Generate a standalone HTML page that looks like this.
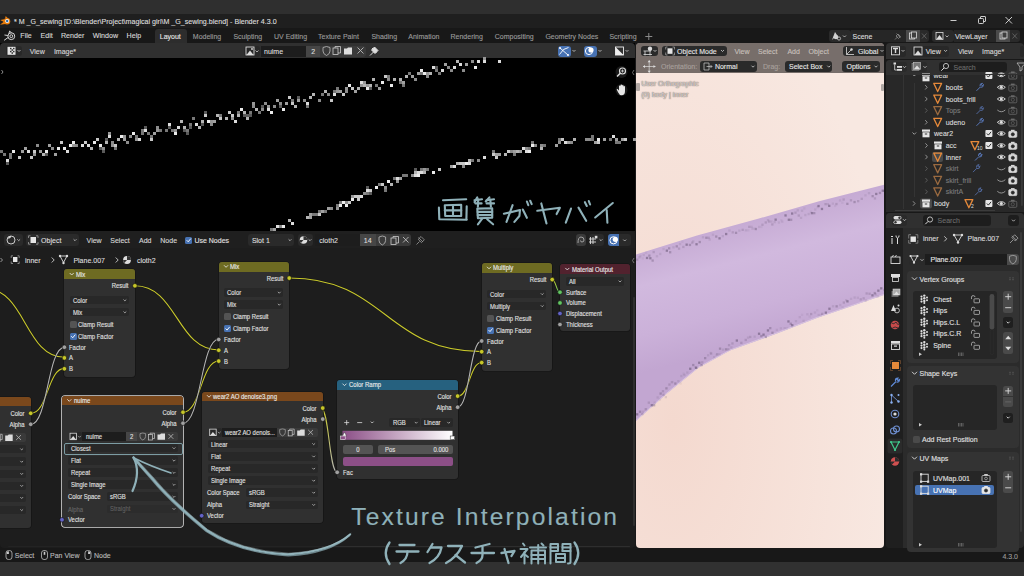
<!DOCTYPE html>
<html><head><meta charset="utf-8"><style>
html,body{margin:0;padding:0;width:1024px;height:576px;overflow:hidden;background:#2b2b2b;}
body{position:relative;font-family:"Liberation Sans", sans-serif;}
div{box-sizing:border-box;-webkit-text-stroke:0.12px currentColor;}
</style></head><body>
<div style="position:absolute;left:0px;top:0px;width:1024px;height:576px;background:#2f2f2f;border-radius:0px;"></div>
<div style="position:absolute;left:0px;top:13.8px;width:1024px;height:14.2px;background:#1f1f1f;border-radius:0px;"></div>
<div style="position:absolute;left:0px;top:28px;width:1024px;height:15px;background:#181818;border-radius:0px;"></div>
<div style="position:absolute;left:0px;top:43px;width:1024px;height:505px;background:#181818;border-radius:0px;"></div>
<div style="position:absolute;left:0px;top:548px;width:1024px;height:14px;background:#181818;border-radius:0px;"></div>
<div style="position:absolute;left:0px;top:562px;width:1024px;height:14px;background:#313131;border-radius:0px;"></div>
<svg style="position:absolute;left:0px;top:0px;overflow:visible" width="1024" height="576" viewBox="0 0 1024 576"><path d="M5.06 18.28 L5.70 16.02 L7.97 18.28 Z" fill="#e87d0d"/><path d="M4.08 19.26 L0.20 19.90 L4.41 22.17 Z" fill="#e87d0d"/><path d="M4.08 21.52 L-0.13 24.76 L5.38 24.12 Z" fill="#e87d0d"/><circle cx="7.0" cy="21.2" r="3.24" fill="#e87d0d"/><circle cx="7.2" cy="21.099999999999998" r="2.01" fill="#ffffff"/><circle cx="7.2" cy="21.099999999999998" r="1.23" fill="#2f6fb0"/></svg>
<div style="position:absolute;left:14px;top:18.69px;font-size:7.1px;line-height:1;color:#dcdcdc;white-space:pre;font-weight:normal;">* M _G_sewing [D:\Blender\Project\magical girl\M _G_sewing.blend] - Blender 4.3.0</div>
<svg style="position:absolute;left:0px;top:0px;overflow:visible" width="1024" height="576" viewBox="0 0 1024 576"><g stroke="#e0e0e0" stroke-width="0.9" fill="none"><path d="M950.5 20.5 H956.5"/><rect x="978.5" y="18.5" width="5" height="5" rx="0.8"/><path d="M980.5 18.5 V17 Q980.5 16.5 981 16.5 H985 Q985.5 16.5 985.5 17 V21 Q985.5 21.5 985 21.5 H983.5"/><path d="M1005.5 17 L1012 23.5 M1012 17 L1005.5 23.5"/></g></svg>
<svg style="position:absolute;left:0px;top:0px;overflow:visible" width="1024" height="576" viewBox="0 0 1024 576"><g fill="none" stroke="#d6d6d6" stroke-width="1.0" stroke-linejoin="round"><circle cx="11.3" cy="36.2" r="3.42"/><circle cx="11.3" cy="36.2" r="1.44"/><path d="M8.91 33.64 L9.59 31.07 L11.64 32.95"/><path d="M8.05 35.52 L4.46 35.00 M8.22 37.40 L4.12 40.30"/></g></svg>
<div style="position:absolute;left:20.3px;top:32.89px;font-size:7.1px;line-height:1;color:#d6d6d6;white-space:pre;font-weight:normal;">File</div>
<div style="position:absolute;left:40.6px;top:32.89px;font-size:7.1px;line-height:1;color:#d6d6d6;white-space:pre;font-weight:normal;">Edit</div>
<div style="position:absolute;left:61px;top:32.89px;font-size:7.1px;line-height:1;color:#d6d6d6;white-space:pre;font-weight:normal;">Render</div>
<div style="position:absolute;left:92.8px;top:32.89px;font-size:7.1px;line-height:1;color:#d6d6d6;white-space:pre;font-weight:normal;">Window</div>
<div style="position:absolute;left:126.6px;top:32.89px;font-size:7.1px;line-height:1;color:#d6d6d6;white-space:pre;font-weight:normal;">Help</div>
<div style="position:absolute;left:155px;top:29px;width:32px;height:14px;background:#2d2d2d;border-radius:3px;border-bottom-left-radius:0;border-bottom-right-radius:0;"></div>
<div style="position:absolute;left:159.8px;top:33.07px;font-size:7.0px;line-height:1;color:#e6e6e6;white-space:pre;font-weight:normal;">Layout</div>
<div style="position:absolute;left:192.8px;top:33.07px;font-size:7.0px;line-height:1;color:#9a9a9a;white-space:pre;font-weight:normal;">Modeling</div>
<div style="position:absolute;left:233.4px;top:33.07px;font-size:7.0px;line-height:1;color:#9a9a9a;white-space:pre;font-weight:normal;">Sculpting</div>
<div style="position:absolute;left:274px;top:33.07px;font-size:7.0px;line-height:1;color:#9a9a9a;white-space:pre;font-weight:normal;">UV Editing</div>
<div style="position:absolute;left:318px;top:33.07px;font-size:7.0px;line-height:1;color:#9a9a9a;white-space:pre;font-weight:normal;">Texture Paint</div>
<div style="position:absolute;left:371.4px;top:33.07px;font-size:7.0px;line-height:1;color:#9a9a9a;white-space:pre;font-weight:normal;">Shading</div>
<div style="position:absolute;left:408.3px;top:33.07px;font-size:7.0px;line-height:1;color:#9a9a9a;white-space:pre;font-weight:normal;">Animation</div>
<div style="position:absolute;left:450.5px;top:33.07px;font-size:7.0px;line-height:1;color:#9a9a9a;white-space:pre;font-weight:normal;">Rendering</div>
<div style="position:absolute;left:494.8px;top:33.07px;font-size:7.0px;line-height:1;color:#9a9a9a;white-space:pre;font-weight:normal;">Compositing</div>
<div style="position:absolute;left:545.4px;top:33.07px;font-size:7.0px;line-height:1;color:#9a9a9a;white-space:pre;font-weight:normal;">Geometry Nodes</div>
<div style="position:absolute;left:609.4px;top:33.07px;font-size:7.0px;line-height:1;color:#9a9a9a;white-space:pre;font-weight:normal;">Scripting</div>
<svg style="position:absolute;left:0px;top:0px;overflow:visible" width="1024" height="576" viewBox="0 0 1024 576"><path d="M648.8 33 V40 M645.3 36.5 H652.3" stroke="#8a8a8a" stroke-width="1"/></svg>
<div style="position:absolute;left:829px;top:30px;width:22px;height:12px;background:#2a2a2a;border-radius:3px;"></div>
<div style="position:absolute;left:851px;top:30px;width:56px;height:12px;background:#262626;border-radius:0px;"></div>
<div style="position:absolute;left:906px;top:30px;width:14px;height:12px;background:#4a4a4a;border-radius:0px;"></div>
<div style="position:absolute;left:920px;top:30px;width:9px;height:12px;background:#2a2a2a;border-radius:3px;border-top-left-radius:0;border-bottom-left-radius:0;"></div>
<svg style="position:absolute;left:0px;top:0px;overflow:visible" width="1024" height="576" viewBox="0 0 1024 576"><g fill="#d0d0d0"><circle cx="836" cy="37" r="2.3"/><path d="M832 40 L835 32 L837 35 Z"/><circle cx="839" cy="38.5" r="1.6" fill="none" stroke="#d0d0d0" stroke-width="0.8"/></g><path d="M843 35.5 l1.5 1.5 l1.5 -1.5" stroke="#ccc" stroke-width="0.8" fill="none"/><path d="M895 39.5 l3 -3 M896.5 33.5 l4 4 M898 34 l-2 2 l2.5 2.5 l2 -2 z" stroke="#8a8a8a" stroke-width="0.8" fill="none"/><rect x="909.5" y="33" width="5" height="6" fill="none" stroke="#ddd" stroke-width="0.8"/><rect x="911.5" y="32" width="5" height="6" fill="#3e3e3e" stroke="#ddd" stroke-width="0.8"/><path d="M922 33.5 l4.5 5 M926.5 33.5 l-4.5 5" stroke="#6a6a6a" stroke-width="0.8"/></svg>
<div style="position:absolute;left:852.5px;top:32.57px;font-size:7.0px;line-height:1;color:#dcdcdc;white-space:pre;font-weight:normal;">Scene</div>
<div style="position:absolute;left:932px;top:30px;width:22px;height:12px;background:#2a2a2a;border-radius:3px;"></div>
<div style="position:absolute;left:954px;top:30px;width:44px;height:12px;background:#262626;border-radius:0px;"></div>
<div style="position:absolute;left:996px;top:30px;width:14px;height:12px;background:#4a4a4a;border-radius:0px;"></div>
<div style="position:absolute;left:1010px;top:30px;width:10px;height:12px;background:#2a2a2a;border-radius:3px;border-top-left-radius:0;border-bottom-left-radius:0;"></div>
<svg style="position:absolute;left:0px;top:0px;overflow:visible" width="1024" height="576" viewBox="0 0 1024 576"><rect x="936" y="32.5" width="7" height="7" fill="none" stroke="#ddd" stroke-width="0.8"/><path d="M936.5 39 L939.5 35 L942.5 39 Z" fill="#ddd"/><path d="M945.5 35.5 l1.5 1.5 l1.5 -1.5" stroke="#ccc" stroke-width="0.8" fill="none"/><rect x="1000" y="33" width="5" height="6" fill="none" stroke="#ddd" stroke-width="0.8"/><rect x="1002" y="32" width="5" height="6" fill="#3e3e3e" stroke="#ddd" stroke-width="0.8"/><path d="M1012.5 33.5 l4.5 5 M1017 33.5 l-4.5 5" stroke="#6a6a6a" stroke-width="0.8"/></svg>
<div style="position:absolute;left:955px;top:32.57px;font-size:7.0px;line-height:1;color:#dcdcdc;white-space:pre;font-weight:normal;">ViewLayer</div>
<svg style="position:absolute;left:0px;top:0px;overflow:visible" width="1024" height="576" viewBox="0 0 1024 576"><rect x="6.0" y="550.5" width="6" height="9" rx="2.5" fill="none" stroke="#bbb" stroke-width="0.8"/><path d="M6.7 554 V552.5 Q6.7 551.2 8.9 551.2 V554 Z" fill="#ccc"/><rect x="41.5" y="550.5" width="6" height="9" rx="2.5" fill="none" stroke="#bbb" stroke-width="0.8"/><rect x="43.7" y="551.8" width="1.6" height="3" fill="#ccc"/><rect x="85.0" y="550.5" width="6" height="9" rx="2.5" fill="none" stroke="#bbb" stroke-width="0.8"/><path d="M90.3 554 V552.5 Q90.3 551.2 88.1 551.2 V554 Z" fill="#ccc"/></svg>
<div style="position:absolute;left:14.8px;top:552.27px;font-size:7.0px;line-height:1;color:#b8b8b8;white-space:pre;font-weight:normal;">Select</div>
<div style="position:absolute;left:50px;top:552.27px;font-size:7.0px;line-height:1;color:#b8b8b8;white-space:pre;font-weight:normal;">Pan View</div>
<div style="position:absolute;left:94px;top:552.27px;font-size:7.0px;line-height:1;color:#b8b8b8;white-space:pre;font-weight:normal;">Node</div>
<div style="position:absolute;right:6px;top:552.57px;font-size:7.0px;line-height:1;color:#9a9a9a;white-space:pre;font-weight:normal;text-align:right;">4.3.0</div>
<div style="position:absolute;left:0px;top:43px;width:635px;height:188px;background:#000000;border-radius:0px;"></div>
<div style="position:absolute;left:0px;top:43px;width:635px;height:15px;background:#303030;border-radius:4px;border-bottom-left-radius:0;border-bottom-right-radius:0;"></div>
<div style="position:absolute;left:6px;top:46px;width:16px;height:9.5px;background:#282828;border-radius:3px;"></div>
<svg style="position:absolute;left:0px;top:0px;overflow:visible" width="1024" height="576" viewBox="0 0 1024 576"><rect x="7.5" y="46.8" width="8" height="8" fill="#e6e6e6"/><g fill="#303030"><rect x="10" y="47.8" width="1.5" height="1.5"/><rect x="13" y="47.8" width="1.5" height="1.5"/><rect x="11.5" y="49.3" width="1.5" height="1.5"/><rect x="10" y="50.8" width="1.5" height="1.5"/><rect x="13" y="50.8" width="1.5" height="1.5"/><rect x="11.5" y="52.3" width="1.5" height="1.5"/></g><path d="M17.5 50 l1.5 1.5 l1.5 -1.5" stroke="#ccc" stroke-width="0.8" fill="none"/></svg>
<div style="position:absolute;left:29.7px;top:48.07px;font-size:7.0px;line-height:1;color:#d6d6d6;white-space:pre;font-weight:normal;">View</div>
<div style="position:absolute;left:53.9px;top:48.07px;font-size:7.0px;line-height:1;color:#d6d6d6;white-space:pre;font-weight:normal;">Image*</div>
<div style="position:absolute;left:244px;top:45.5px;width:16px;height:11px;background:#282828;border-radius:3px;"></div>
<svg style="position:absolute;left:0px;top:0px;overflow:visible" width="1024" height="576" viewBox="0 0 1024 576"><rect x="246" y="47" width="8" height="8" fill="none" stroke="#ddd" stroke-width="0.9"/><path d="M246.5 55 L250 50.5 L253.5 55 Z" fill="#ddd"/><circle cx="252" cy="49" r="0.9" fill="#ddd"/><path d="M255.5 50.5 l1.5 1.5 l1.5 -1.5" stroke="#ccc" stroke-width="0.8" fill="none"/></svg>
<div style="position:absolute;left:260.5px;top:45.5px;width:45.5px;height:11px;background:#1d1d1d;border-radius:0px;"></div>
<div style="position:absolute;left:264px;top:48.07px;font-size:7.0px;line-height:1;color:#dcdcdc;white-space:pre;font-weight:normal;">nuime</div>
<div style="position:absolute;left:306px;top:45.5px;width:14.4px;height:11px;background:#464646;border-radius:0px;"></div>
<div style="position:absolute;left:311.2px;top:48.07px;font-size:7.0px;line-height:1;color:#dcdcdc;white-space:pre;font-weight:normal;">2</div>
<div style="position:absolute;left:320.4px;top:45.5px;width:45.3px;height:11px;background:#3a3a3a;border-radius:3px;border-top-left-radius:0;border-bottom-left-radius:0;"></div>
<svg style="position:absolute;left:0px;top:0px;overflow:visible" width="1024" height="576" viewBox="0 0 1024 576"><path d="M323 47.5 L326.5 46.5 L330 47.5 V51 Q330 54 326.5 55.5 Q323 54 323 51 Z" fill="none" stroke="#bbb" stroke-width="0.8"/><rect x="333" y="48" width="5" height="6.5" fill="none" stroke="#ccc" stroke-width="0.8"/><path d="M335 48 V46.5 H340.5 V53 H338" fill="none" stroke="#ccc" stroke-width="0.8"/><path d="M344 48.5 H347 L348 47.5 H352 V54.5 H344 Z" fill="#ddd"/><path d="M357.5 47.5 l6 6 M363.5 47.5 l-6 6" stroke="#bbb" stroke-width="0.9"/><path d="M370 55.5 l3.5 -3.5 M372 48 l4.5 4.5 M374.5 47 l-3 3 l3.5 3.5 l3 -3 z" stroke="#ddd" stroke-width="1" fill="#ddd"/></svg>
<div style="position:absolute;left:557.5px;top:45.5px;width:13px;height:11px;background:#4772b3;border-radius:3px;"></div>
<svg style="position:absolute;left:0px;top:0px;overflow:visible" width="1024" height="576" viewBox="0 0 1024 576"><path d="M559.5 54.5 Q563 48 568.5 47.5 M560 48 L568 55" stroke="#fff" stroke-width="0.9" fill="none"/><circle cx="560" cy="48" r="1" fill="#fff"/><circle cx="568" cy="55" r="1" fill="#fff"/><path d="M572.5 50 l1.5 1.5 l1.5 -1.5" stroke="#ccc" stroke-width="0.8" fill="none"/></svg>
<div style="position:absolute;left:583.5px;top:45.5px;width:13px;height:11px;background:#4772b3;border-radius:3px;"></div>
<svg style="position:absolute;left:0px;top:0px;overflow:visible" width="1024" height="576" viewBox="0 0 1024 576"><circle cx="589" cy="51" r="3.6" fill="none" stroke="#fff" stroke-width="1"/><circle cx="591" cy="50" r="2.6" fill="#fff"/><path d="M598.5 50 l1.5 1.5 l1.5 -1.5" stroke="#ccc" stroke-width="0.8" fill="none"/></svg>
<svg style="position:absolute;left:0px;top:0px;overflow:visible" width="1024" height="576" viewBox="0 0 1024 576"><rect x="615.5" y="47" width="8" height="8" fill="none" stroke="#eee" stroke-width="0.9"/><path d="M615.5 47 L623.5 55 H615.5 Z" fill="#eee"/><path d="M625.5 50 l1.5 1.5 l1.5 -1.5" stroke="#ccc" stroke-width="0.8" fill="none"/></svg>
<svg style="position:absolute;left:0px;top:0px;overflow:visible" width="1024" height="576" viewBox="0 0 1024 576"><rect x="0" y="150" width="3" height="3" fill="rgb(120,120,120)"/><rect x="3" y="153" width="3" height="3" fill="rgb(120,120,120)"/><rect x="6" y="159" width="3" height="3" fill="rgb(220,220,220)"/><rect x="6" y="162" width="3" height="3" fill="rgb(90,90,90)"/><rect x="9" y="153" width="3" height="3" fill="rgb(120,120,120)"/><rect x="9" y="156" width="3" height="3" fill="rgb(120,120,120)"/><rect x="12" y="150" width="3" height="3" fill="rgb(235,235,235)"/><rect x="18" y="156" width="3" height="3" fill="rgb(200,200,200)"/><rect x="21" y="150" width="3" height="3" fill="rgb(160,160,160)"/><rect x="24" y="147" width="3" height="3" fill="rgb(160,160,160)"/><rect x="27" y="150" width="3" height="3" fill="rgb(220,220,220)"/><rect x="30" y="156" width="3" height="3" fill="rgb(200,200,200)"/><rect x="33" y="150" width="3" height="3" fill="rgb(200,200,200)"/><rect x="33" y="153" width="3" height="3" fill="rgb(150,150,150)"/><rect x="36" y="144" width="3" height="3" fill="rgb(140,140,140)"/><rect x="39" y="150" width="3" height="3" fill="rgb(160,160,160)"/><rect x="42" y="153" width="3" height="3" fill="rgb(180,180,180)"/><rect x="45" y="150" width="3" height="3" fill="rgb(235,235,235)"/><rect x="45" y="153" width="3" height="3" fill="rgb(90,90,90)"/><rect x="48" y="144" width="3" height="3" fill="rgb(160,160,160)"/><rect x="51" y="147" width="3" height="3" fill="rgb(140,140,140)"/><rect x="54" y="153" width="3" height="3" fill="rgb(160,160,160)"/><rect x="57" y="147" width="3" height="3" fill="rgb(235,235,235)"/><rect x="60" y="141" width="3" height="3" fill="rgb(200,200,200)"/><rect x="63" y="147" width="3" height="3" fill="rgb(235,235,235)"/><rect x="66" y="150" width="3" height="3" fill="rgb(220,220,220)"/><rect x="69" y="144" width="3" height="3" fill="rgb(235,235,235)"/><rect x="72" y="141" width="3" height="3" fill="rgb(235,235,235)"/><rect x="72" y="144" width="3" height="3" fill="rgb(150,150,150)"/><rect x="75" y="144" width="3" height="3" fill="rgb(140,140,140)"/><rect x="81" y="144" width="3" height="3" fill="rgb(220,220,220)"/><rect x="84" y="141" width="3" height="3" fill="rgb(200,200,200)"/><rect x="87" y="144" width="3" height="3" fill="rgb(220,220,220)"/><rect x="90" y="147" width="3" height="3" fill="rgb(180,180,180)"/><rect x="93" y="141" width="3" height="3" fill="rgb(235,235,235)"/><rect x="96" y="138" width="3" height="3" fill="rgb(200,200,200)"/><rect x="99" y="144" width="3" height="3" fill="rgb(235,235,235)"/><rect x="99" y="147" width="3" height="3" fill="rgb(90,90,90)"/><rect x="102" y="147" width="3" height="3" fill="rgb(140,140,140)"/><rect x="102" y="150" width="3" height="3" fill="rgb(90,90,90)"/><rect x="105" y="141" width="3" height="3" fill="rgb(180,180,180)"/><rect x="105" y="138" width="3" height="3" fill="rgb(90,90,90)"/><rect x="108" y="135" width="3" height="3" fill="rgb(220,220,220)"/><rect x="108" y="132" width="3" height="3" fill="rgb(150,150,150)"/><rect x="111" y="141" width="3" height="3" fill="rgb(140,140,140)"/><rect x="111" y="144" width="3" height="3" fill="rgb(150,150,150)"/><rect x="114" y="144" width="3" height="3" fill="rgb(200,200,200)"/><rect x="114" y="147" width="3" height="3" fill="rgb(120,120,120)"/><rect x="117" y="138" width="3" height="3" fill="rgb(180,180,180)"/><rect x="120" y="135" width="3" height="3" fill="rgb(235,235,235)"/><rect x="123" y="138" width="3" height="3" fill="rgb(160,160,160)"/><rect x="123" y="135" width="3" height="3" fill="rgb(150,150,150)"/><rect x="126" y="141" width="3" height="3" fill="rgb(140,140,140)"/><rect x="129" y="135" width="3" height="3" fill="rgb(140,140,140)"/><rect x="132" y="132" width="3" height="3" fill="rgb(235,235,235)"/><rect x="135" y="135" width="3" height="3" fill="rgb(120,120,120)"/><rect x="135" y="138" width="3" height="3" fill="rgb(150,150,150)"/><rect x="138" y="138" width="3" height="3" fill="rgb(220,220,220)"/><rect x="141" y="132" width="3" height="3" fill="rgb(120,120,120)"/><rect x="141" y="129" width="3" height="3" fill="rgb(120,120,120)"/><rect x="144" y="129" width="3" height="3" fill="rgb(220,220,220)"/><rect x="144" y="126" width="3" height="3" fill="rgb(90,90,90)"/><rect x="147" y="132" width="3" height="3" fill="rgb(120,120,120)"/><rect x="150" y="138" width="3" height="3" fill="rgb(200,200,200)"/><rect x="150" y="135" width="3" height="3" fill="rgb(120,120,120)"/><rect x="153" y="132" width="3" height="3" fill="rgb(160,160,160)"/><rect x="156" y="126" width="3" height="3" fill="rgb(140,140,140)"/><rect x="156" y="129" width="3" height="3" fill="rgb(150,150,150)"/><rect x="159" y="129" width="3" height="3" fill="rgb(120,120,120)"/><rect x="165" y="129" width="3" height="3" fill="rgb(120,120,120)"/><rect x="168" y="123" width="3" height="3" fill="rgb(220,220,220)"/><rect x="168" y="126" width="3" height="3" fill="rgb(90,90,90)"/><rect x="171" y="129" width="3" height="3" fill="rgb(120,120,120)"/><rect x="174" y="132" width="3" height="3" fill="rgb(235,235,235)"/><rect x="174" y="129" width="3" height="3" fill="rgb(150,150,150)"/><rect x="177" y="126" width="3" height="3" fill="rgb(220,220,220)"/><rect x="180" y="120" width="3" height="3" fill="rgb(180,180,180)"/><rect x="183" y="126" width="3" height="3" fill="rgb(180,180,180)"/><rect x="183" y="129" width="3" height="3" fill="rgb(90,90,90)"/><rect x="186" y="129" width="3" height="3" fill="rgb(120,120,120)"/><rect x="186" y="132" width="3" height="3" fill="rgb(90,90,90)"/><rect x="189" y="123" width="3" height="3" fill="rgb(120,120,120)"/><rect x="189" y="126" width="3" height="3" fill="rgb(90,90,90)"/><rect x="192" y="117" width="3" height="3" fill="rgb(120,120,120)"/><rect x="195" y="123" width="3" height="3" fill="rgb(220,220,220)"/><rect x="198" y="126" width="3" height="3" fill="rgb(180,180,180)"/><rect x="201" y="120" width="3" height="3" fill="rgb(180,180,180)"/><rect x="201" y="123" width="3" height="3" fill="rgb(90,90,90)"/><rect x="204" y="114" width="3" height="3" fill="rgb(200,200,200)"/><rect x="204" y="111" width="3" height="3" fill="rgb(90,90,90)"/><rect x="207" y="120" width="3" height="3" fill="rgb(235,235,235)"/><rect x="210" y="123" width="3" height="3" fill="rgb(140,140,140)"/><rect x="210" y="120" width="3" height="3" fill="rgb(150,150,150)"/><rect x="213" y="120" width="3" height="3" fill="rgb(160,160,160)"/><rect x="216" y="114" width="3" height="3" fill="rgb(180,180,180)"/><rect x="219" y="117" width="3" height="3" fill="rgb(200,200,200)"/><rect x="219" y="114" width="3" height="3" fill="rgb(120,120,120)"/><rect x="225" y="117" width="3" height="3" fill="rgb(180,180,180)"/><rect x="228" y="111" width="3" height="3" fill="rgb(200,200,200)"/><rect x="231" y="114" width="3" height="3" fill="rgb(200,200,200)"/><rect x="231" y="117" width="3" height="3" fill="rgb(150,150,150)"/><rect x="234" y="120" width="3" height="3" fill="rgb(220,220,220)"/><rect x="237" y="114" width="3" height="3" fill="rgb(180,180,180)"/><rect x="237" y="111" width="3" height="3" fill="rgb(120,120,120)"/><rect x="240" y="108" width="3" height="3" fill="rgb(235,235,235)"/><rect x="243" y="111" width="3" height="3" fill="rgb(180,180,180)"/><rect x="243" y="114" width="3" height="3" fill="rgb(90,90,90)"/><rect x="246" y="117" width="3" height="3" fill="rgb(180,180,180)"/><rect x="246" y="114" width="3" height="3" fill="rgb(90,90,90)"/><rect x="249" y="111" width="3" height="3" fill="rgb(120,120,120)"/><rect x="249" y="114" width="3" height="3" fill="rgb(90,90,90)"/><rect x="252" y="105" width="3" height="3" fill="rgb(140,140,140)"/><rect x="252" y="102" width="3" height="3" fill="rgb(150,150,150)"/><rect x="255" y="108" width="3" height="3" fill="rgb(180,180,180)"/><rect x="258" y="111" width="3" height="3" fill="rgb(120,120,120)"/><rect x="261" y="108" width="3" height="3" fill="rgb(140,140,140)"/><rect x="261" y="105" width="3" height="3" fill="rgb(90,90,90)"/><rect x="264" y="102" width="3" height="3" fill="rgb(140,140,140)"/><rect x="267" y="108" width="3" height="3" fill="rgb(220,220,220)"/><rect x="267" y="105" width="3" height="3" fill="rgb(150,150,150)"/><rect x="270" y="111" width="3" height="3" fill="rgb(235,235,235)"/><rect x="273" y="105" width="3" height="3" fill="rgb(140,140,140)"/><rect x="276" y="99" width="3" height="3" fill="rgb(160,160,160)"/><rect x="279" y="102" width="3" height="3" fill="rgb(140,140,140)"/><rect x="279" y="105" width="3" height="3" fill="rgb(90,90,90)"/><rect x="282" y="108" width="3" height="3" fill="rgb(235,235,235)"/><rect x="285" y="102" width="3" height="3" fill="rgb(160,160,160)"/><rect x="288" y="96" width="3" height="3" fill="rgb(200,200,200)"/><rect x="291" y="102" width="3" height="3" fill="rgb(200,200,200)"/><rect x="291" y="99" width="3" height="3" fill="rgb(120,120,120)"/><rect x="294" y="105" width="3" height="3" fill="rgb(180,180,180)"/><rect x="297" y="99" width="3" height="3" fill="rgb(160,160,160)"/><rect x="297" y="96" width="3" height="3" fill="rgb(90,90,90)"/><rect x="303" y="99" width="3" height="3" fill="rgb(140,140,140)"/><rect x="306" y="102" width="3" height="3" fill="rgb(220,220,220)"/><rect x="306" y="105" width="3" height="3" fill="rgb(120,120,120)"/><rect x="309" y="96" width="3" height="3" fill="rgb(180,180,180)"/><rect x="312" y="93" width="3" height="3" fill="rgb(180,180,180)"/><rect x="318" y="99" width="3" height="3" fill="rgb(140,140,140)"/><rect x="321" y="93" width="3" height="3" fill="rgb(120,120,120)"/><rect x="324" y="90" width="3" height="3" fill="rgb(180,180,180)"/><rect x="327" y="93" width="3" height="3" fill="rgb(140,140,140)"/><rect x="330" y="99" width="3" height="3" fill="rgb(200,200,200)"/><rect x="333" y="93" width="3" height="3" fill="rgb(220,220,220)"/><rect x="333" y="90" width="3" height="3" fill="rgb(120,120,120)"/><rect x="336" y="87" width="3" height="3" fill="rgb(120,120,120)"/><rect x="336" y="90" width="3" height="3" fill="rgb(150,150,150)"/><rect x="339" y="90" width="3" height="3" fill="rgb(160,160,160)"/><rect x="342" y="93" width="3" height="3" fill="rgb(200,200,200)"/><rect x="345" y="90" width="3" height="3" fill="rgb(140,140,140)"/><rect x="345" y="87" width="3" height="3" fill="rgb(150,150,150)"/><rect x="348" y="84" width="3" height="3" fill="rgb(235,235,235)"/><rect x="351" y="87" width="3" height="3" fill="rgb(200,200,200)"/><rect x="354" y="90" width="3" height="3" fill="rgb(160,160,160)"/><rect x="357" y="87" width="3" height="3" fill="rgb(180,180,180)"/><rect x="360" y="81" width="3" height="3" fill="rgb(220,220,220)"/><rect x="360" y="84" width="3" height="3" fill="rgb(150,150,150)"/><rect x="363" y="84" width="3" height="3" fill="rgb(180,180,180)"/><rect x="363" y="81" width="3" height="3" fill="rgb(150,150,150)"/><rect x="366" y="87" width="3" height="3" fill="rgb(235,235,235)"/><rect x="366" y="84" width="3" height="3" fill="rgb(150,150,150)"/><rect x="369" y="84" width="3" height="3" fill="rgb(180,180,180)"/><rect x="369" y="87" width="3" height="3" fill="rgb(90,90,90)"/><rect x="372" y="78" width="3" height="3" fill="rgb(180,180,180)"/><rect x="375" y="84" width="3" height="3" fill="rgb(120,120,120)"/><rect x="378" y="87" width="3" height="3" fill="rgb(160,160,160)"/><rect x="381" y="81" width="3" height="3" fill="rgb(235,235,235)"/><rect x="384" y="75" width="3" height="3" fill="rgb(200,200,200)"/><rect x="387" y="78" width="3" height="3" fill="rgb(140,140,140)"/><rect x="387" y="75" width="3" height="3" fill="rgb(120,120,120)"/><rect x="390" y="84" width="3" height="3" fill="rgb(235,235,235)"/><rect x="393" y="78" width="3" height="3" fill="rgb(180,180,180)"/><rect x="399" y="78" width="3" height="3" fill="rgb(180,180,180)"/><rect x="399" y="81" width="3" height="3" fill="rgb(120,120,120)"/><rect x="402" y="81" width="3" height="3" fill="rgb(160,160,160)"/><rect x="402" y="84" width="3" height="3" fill="rgb(120,120,120)"/><rect x="405" y="75" width="3" height="3" fill="rgb(180,180,180)"/><rect x="408" y="72" width="3" height="3" fill="rgb(120,120,120)"/><rect x="411" y="75" width="3" height="3" fill="rgb(160,160,160)"/><rect x="414" y="78" width="3" height="3" fill="rgb(140,140,140)"/><rect x="417" y="72" width="3" height="3" fill="rgb(160,160,160)"/><rect x="420" y="69" width="3" height="3" fill="rgb(235,235,235)"/><rect x="420" y="72" width="3" height="3" fill="rgb(120,120,120)"/><rect x="423" y="72" width="3" height="3" fill="rgb(235,235,235)"/><rect x="426" y="75" width="3" height="3" fill="rgb(140,140,140)"/><rect x="426" y="72" width="3" height="3" fill="rgb(150,150,150)"/><rect x="429" y="72" width="3" height="3" fill="rgb(180,180,180)"/><rect x="432" y="66" width="3" height="3" fill="rgb(220,220,220)"/><rect x="435" y="69" width="3" height="3" fill="rgb(120,120,120)"/><rect x="435" y="66" width="3" height="3" fill="rgb(90,90,90)"/><rect x="438" y="72" width="3" height="3" fill="rgb(120,120,120)"/><rect x="441" y="69" width="3" height="3" fill="rgb(220,220,220)"/><rect x="444" y="63" width="3" height="3" fill="rgb(160,160,160)"/><rect x="447" y="66" width="3" height="3" fill="rgb(140,140,140)"/><rect x="450" y="69" width="3" height="3" fill="rgb(140,140,140)"/><rect x="453" y="66" width="3" height="3" fill="rgb(220,220,220)"/><rect x="456" y="60" width="3" height="3" fill="rgb(180,180,180)"/><rect x="459" y="63" width="3" height="3" fill="rgb(220,220,220)"/><rect x="462" y="69" width="3" height="3" fill="rgb(140,140,140)"/><rect x="465" y="63" width="3" height="3" fill="rgb(160,160,160)"/><rect x="471" y="60" width="3" height="3" fill="rgb(140,140,140)"/><rect x="474" y="66" width="3" height="3" fill="rgb(235,235,235)"/><rect x="477" y="60" width="3" height="3" fill="rgb(220,220,220)"/><rect x="483" y="60" width="3" height="3" fill="rgb(220,220,220)"/><rect x="483" y="57" width="3" height="3" fill="rgb(150,150,150)"/><rect x="498" y="60" width="3" height="3" fill="rgb(220,220,220)"/><rect x="270" y="228" width="3" height="3" fill="rgb(120,120,120)"/><rect x="276" y="225" width="3" height="3" fill="rgb(220,220,220)"/><rect x="279" y="225" width="3" height="3" fill="rgb(140,140,140)"/><rect x="282" y="225" width="3" height="3" fill="rgb(235,235,235)"/><rect x="288" y="219" width="3" height="3" fill="rgb(180,180,180)"/><rect x="291" y="222" width="3" height="3" fill="rgb(160,160,160)"/><rect x="306" y="216" width="3" height="3" fill="rgb(235,235,235)"/><rect x="309" y="213" width="3" height="3" fill="rgb(160,160,160)"/><rect x="312" y="213" width="3" height="3" fill="rgb(120,120,120)"/><rect x="315" y="213" width="3" height="3" fill="rgb(120,120,120)"/><rect x="318" y="213" width="3" height="3" fill="rgb(160,160,160)"/><rect x="321" y="210" width="3" height="3" fill="rgb(220,220,220)"/><rect x="324" y="210" width="3" height="3" fill="rgb(120,120,120)"/><rect x="327" y="207" width="3" height="3" fill="rgb(160,160,160)"/><rect x="330" y="207" width="3" height="3" fill="rgb(140,140,140)"/><rect x="336" y="204" width="3" height="3" fill="rgb(120,120,120)"/><rect x="336" y="207" width="3" height="3" fill="rgb(150,150,150)"/><rect x="339" y="201" width="3" height="3" fill="rgb(120,120,120)"/><rect x="342" y="201" width="3" height="3" fill="rgb(235,235,235)"/><rect x="345" y="201" width="3" height="3" fill="rgb(140,140,140)"/><rect x="345" y="204" width="3" height="3" fill="rgb(150,150,150)"/><rect x="348" y="201" width="3" height="3" fill="rgb(200,200,200)"/><rect x="351" y="198" width="3" height="3" fill="rgb(120,120,120)"/><rect x="351" y="195" width="3" height="3" fill="rgb(150,150,150)"/><rect x="354" y="195" width="3" height="3" fill="rgb(200,200,200)"/><rect x="357" y="195" width="3" height="3" fill="rgb(200,200,200)"/><rect x="360" y="195" width="3" height="3" fill="rgb(220,220,220)"/><rect x="363" y="192" width="3" height="3" fill="rgb(140,140,140)"/><rect x="366" y="189" width="3" height="3" fill="rgb(220,220,220)"/><rect x="366" y="186" width="3" height="3" fill="rgb(90,90,90)"/><rect x="369" y="189" width="3" height="3" fill="rgb(200,200,200)"/><rect x="369" y="192" width="3" height="3" fill="rgb(90,90,90)"/><rect x="375" y="186" width="3" height="3" fill="rgb(235,235,235)"/><rect x="378" y="183" width="3" height="3" fill="rgb(120,120,120)"/><rect x="381" y="183" width="3" height="3" fill="rgb(200,200,200)"/><rect x="384" y="186" width="3" height="3" fill="rgb(140,140,140)"/><rect x="384" y="189" width="3" height="3" fill="rgb(120,120,120)"/><rect x="387" y="180" width="3" height="3" fill="rgb(235,235,235)"/><rect x="393" y="177" width="3" height="3" fill="rgb(120,120,120)"/><rect x="396" y="177" width="3" height="3" fill="rgb(220,220,220)"/><rect x="396" y="180" width="3" height="3" fill="rgb(150,150,150)"/><rect x="402" y="174" width="3" height="3" fill="rgb(120,120,120)"/><rect x="405" y="174" width="3" height="3" fill="rgb(120,120,120)"/><rect x="411" y="174" width="3" height="3" fill="rgb(140,140,140)"/><rect x="414" y="171" width="3" height="3" fill="rgb(180,180,180)"/><rect x="414" y="168" width="3" height="3" fill="rgb(90,90,90)"/><rect x="417" y="171" width="3" height="3" fill="rgb(220,220,220)"/><rect x="420" y="171" width="3" height="3" fill="rgb(220,220,220)"/><rect x="420" y="168" width="3" height="3" fill="rgb(120,120,120)"/><rect x="426" y="168" width="3" height="3" fill="rgb(120,120,120)"/><rect x="438" y="168" width="3" height="3" fill="rgb(200,200,200)"/><rect x="450" y="165" width="3" height="3" fill="rgb(160,160,160)"/><rect x="453" y="165" width="3" height="3" fill="rgb(220,220,220)"/><rect x="456" y="162" width="3" height="3" fill="rgb(160,160,160)"/><rect x="459" y="162" width="3" height="3" fill="rgb(200,200,200)"/><rect x="462" y="162" width="3" height="3" fill="rgb(200,200,200)"/><rect x="465" y="162" width="3" height="3" fill="rgb(235,235,235)"/><rect x="468" y="159" width="3" height="3" fill="rgb(180,180,180)"/><rect x="471" y="159" width="3" height="3" fill="rgb(120,120,120)"/><rect x="477" y="159" width="3" height="3" fill="rgb(140,140,140)"/><rect x="483" y="156" width="3" height="3" fill="rgb(220,220,220)"/><rect x="492" y="153" width="3" height="3" fill="rgb(200,200,200)"/><rect x="492" y="150" width="3" height="3" fill="rgb(120,120,120)"/><rect x="495" y="153" width="3" height="3" fill="rgb(160,160,160)"/><rect x="498" y="153" width="3" height="3" fill="rgb(160,160,160)"/><rect x="504" y="153" width="3" height="3" fill="rgb(180,180,180)"/><rect x="507" y="150" width="3" height="3" fill="rgb(200,200,200)"/><rect x="510" y="150" width="3" height="3" fill="rgb(140,140,140)"/><rect x="513" y="150" width="3" height="3" fill="rgb(160,160,160)"/><rect x="513" y="153" width="3" height="3" fill="rgb(120,120,120)"/><rect x="516" y="150" width="3" height="3" fill="rgb(160,160,160)"/><rect x="519" y="150" width="3" height="3" fill="rgb(160,160,160)"/><rect x="522" y="147" width="3" height="3" fill="rgb(220,220,220)"/><rect x="525" y="147" width="3" height="3" fill="rgb(140,140,140)"/><rect x="528" y="147" width="3" height="3" fill="rgb(120,120,120)"/><rect x="531" y="144" width="3" height="3" fill="rgb(235,235,235)"/><rect x="531" y="141" width="3" height="3" fill="rgb(120,120,120)"/><rect x="534" y="144" width="3" height="3" fill="rgb(140,140,140)"/><rect x="540" y="144" width="3" height="3" fill="rgb(140,140,140)"/><rect x="543" y="144" width="3" height="3" fill="rgb(220,220,220)"/><rect x="558" y="141" width="3" height="3" fill="rgb(140,140,140)"/><rect x="558" y="138" width="3" height="3" fill="rgb(120,120,120)"/><rect x="561" y="138" width="3" height="3" fill="rgb(200,200,200)"/><rect x="564" y="141" width="3" height="3" fill="rgb(220,220,220)"/><rect x="567" y="141" width="3" height="3" fill="rgb(160,160,160)"/><rect x="570" y="141" width="3" height="3" fill="rgb(140,140,140)"/><rect x="573" y="138" width="3" height="3" fill="rgb(180,180,180)"/><rect x="585" y="138" width="3" height="3" fill="rgb(140,140,140)"/><rect x="588" y="138" width="3" height="3" fill="rgb(140,140,140)"/><rect x="591" y="138" width="3" height="3" fill="rgb(120,120,120)"/><rect x="591" y="135" width="3" height="3" fill="rgb(120,120,120)"/><rect x="594" y="141" width="3" height="3" fill="rgb(160,160,160)"/><rect x="597" y="138" width="3" height="3" fill="rgb(235,235,235)"/><rect x="603" y="138" width="3" height="3" fill="rgb(160,160,160)"/><rect x="609" y="138" width="3" height="3" fill="rgb(180,180,180)"/><rect x="612" y="135" width="3" height="3" fill="rgb(220,220,220)"/><rect x="615" y="138" width="3" height="3" fill="rgb(160,160,160)"/><rect x="618" y="141" width="3" height="3" fill="rgb(120,120,120)"/><rect x="621" y="138" width="3" height="3" fill="rgb(160,160,160)"/><rect x="624" y="138" width="3" height="3" fill="rgb(200,200,200)"/><rect x="633" y="138" width="3" height="3" fill="rgb(120,120,120)"/><rect x="273" y="228" width="3" height="3" fill="rgb(160,160,160)"/><rect x="291" y="222" width="3" height="3" fill="rgb(220,220,220)"/><rect x="306" y="216" width="3" height="3" fill="rgb(180,180,180)"/><rect x="309" y="216" width="3" height="3" fill="rgb(160,160,160)"/><rect x="318" y="213" width="3" height="3" fill="rgb(200,200,200)"/><rect x="318" y="210" width="3" height="3" fill="rgb(120,120,120)"/><rect x="321" y="210" width="3" height="3" fill="rgb(160,160,160)"/><rect x="339" y="204" width="3" height="3" fill="rgb(235,235,235)"/><rect x="345" y="204" width="3" height="3" fill="rgb(235,235,235)"/><rect x="351" y="198" width="3" height="3" fill="rgb(235,235,235)"/><rect x="357" y="198" width="3" height="3" fill="rgb(200,200,200)"/><rect x="366" y="192" width="3" height="3" fill="rgb(120,120,120)"/><rect x="390" y="183" width="3" height="3" fill="rgb(180,180,180)"/><rect x="399" y="177" width="3" height="3" fill="rgb(160,160,160)"/><rect x="414" y="174" width="3" height="3" fill="rgb(220,220,220)"/><rect x="417" y="174" width="3" height="3" fill="rgb(235,235,235)"/><rect x="423" y="171" width="3" height="3" fill="rgb(180,180,180)"/><rect x="423" y="168" width="3" height="3" fill="rgb(150,150,150)"/><rect x="432" y="171" width="3" height="3" fill="rgb(235,235,235)"/><rect x="456" y="162" width="3" height="3" fill="rgb(180,180,180)"/><rect x="462" y="165" width="3" height="3" fill="rgb(140,140,140)"/><rect x="468" y="162" width="3" height="3" fill="rgb(220,220,220)"/><rect x="495" y="156" width="3" height="3" fill="rgb(200,200,200)"/><rect x="516" y="150" width="3" height="3" fill="rgb(180,180,180)"/><rect x="525" y="150" width="3" height="3" fill="rgb(220,220,220)"/><rect x="528" y="150" width="3" height="3" fill="rgb(235,235,235)"/><rect x="540" y="147" width="3" height="3" fill="rgb(180,180,180)"/><rect x="543" y="144" width="3" height="3" fill="rgb(120,120,120)"/><rect x="555" y="144" width="3" height="3" fill="rgb(160,160,160)"/><rect x="591" y="138" width="3" height="3" fill="rgb(120,120,120)"/><rect x="597" y="141" width="3" height="3" fill="rgb(200,200,200)"/><rect x="609" y="138" width="3" height="3" fill="rgb(120,120,120)"/><rect x="615" y="141" width="3" height="3" fill="rgb(120,120,120)"/><rect x="633" y="138" width="3" height="3" fill="rgb(160,160,160)"/></svg>
<svg style="position:absolute;left:0px;top:0px;overflow:visible" width="1024" height="576" viewBox="0 0 1024 576"><circle cx="621.5" cy="72" r="6" fill="#1a1a1a"/><circle cx="622.5" cy="71" r="3" fill="none" stroke="#ddd" stroke-width="1.2"/><path d="M620.3 73.3 L617 76.5" stroke="#ddd" stroke-width="1.5"/><path d="M621 71 H624 M622.5 69.5 V72.5" stroke="#ddd" stroke-width="0.8"/><circle cx="621.5" cy="90" r="6" fill="#1a1a1a"/><path d="M618.2 92.5 L616.8 89.8 Q616.5 88.8 617.6 89 L619 90.5 V86.3 Q619 85.5 619.8 85.5 Q620.5 85.5 620.5 86.3 V89 V85.2 Q620.5 84.4 621.3 84.4 Q622 84.4 622 85.2 V89 V85.7 Q622 85 622.8 85 Q623.5 85 623.5 85.7 V89 V86.8 Q623.5 86 624.2 86 Q625 86 625 86.8 V91 Q625 95.3 621.5 95.3 Q619.5 95.3 618.2 92.5 Z" fill="#e6e6e6"/><path d="M634 70 l-1.5 2.5 l1.5 2.5" stroke="#888" stroke-width="0.8" fill="none"/><path d="M1.5 70 l1.5 2 l-1.5 2" stroke="#aaa" stroke-width="0.8" fill="none"/></svg>
<div style="position:absolute;left:0px;top:231px;width:635px;height:317px;background:#1d1d1d;border-radius:4px;border-top-left-radius:0;border-top-right-radius:0;"></div>
<div style="position:absolute;left:0px;top:231px;width:635px;height:17px;background:#1f1f1f;border-radius:4px;border-bottom-left-radius:0;border-bottom-right-radius:0;"></div>
<div style="position:absolute;left:4.4px;top:234.3px;width:18.3px;height:11.7px;background:#2a2a2a;border-radius:3px;"></div>
<svg style="position:absolute;left:0px;top:0px;overflow:visible" width="1024" height="576" viewBox="0 0 1024 576"><circle cx="11" cy="240" r="4" fill="none" stroke="#ddd" stroke-width="0.9"/><path d="M8.5 238.5 A3 3 0 0 1 11 236.8" stroke="#ddd" stroke-width="1.4" fill="none"/><path d="M17.3 239.3 l1.4 1.4 l1.4 -1.4" stroke="#ccc" stroke-width="0.8" fill="none"/></svg>
<div style="position:absolute;left:25.5px;top:234.3px;width:53px;height:11.7px;background:#2a2a2a;border-radius:3px;"></div>
<svg style="position:absolute;left:0px;top:0px;overflow:visible" width="1024" height="576" viewBox="0 0 1024 576"><rect x="30.5" y="237" width="5.5" height="6" fill="#e6e6e6"/><path d="M28.5 238 V235.8 H30.5 M36 235.8 H38 V238 M38 242 V244.2 H36 M30.5 244.2 H28.5 V242" stroke="#aaa" stroke-width="0.7" fill="none"/><path d="M73.6 239.3 l1.4 1.4 l1.4 -1.4" stroke="#ccc" stroke-width="0.8" fill="none"/></svg>
<div style="position:absolute;left:41.1px;top:236.57px;font-size:7.0px;line-height:1;color:#dedede;white-space:pre;font-weight:normal;">Object</div>
<div style="position:absolute;left:86.6px;top:236.57px;font-size:7.0px;line-height:1;color:#d6d6d6;white-space:pre;font-weight:normal;">View</div>
<div style="position:absolute;left:110.3px;top:236.57px;font-size:7.0px;line-height:1;color:#d6d6d6;white-space:pre;font-weight:normal;">Select</div>
<div style="position:absolute;left:139px;top:236.57px;font-size:7.0px;line-height:1;color:#d6d6d6;white-space:pre;font-weight:normal;">Add</div>
<div style="position:absolute;left:160.3px;top:236.57px;font-size:7.0px;line-height:1;color:#d6d6d6;white-space:pre;font-weight:normal;">Node</div>
<div style="position:absolute;left:185px;top:236.6px;width:7.3px;height:7.3px;background:#4772b3;border-radius:1.5px;"></div>
<svg style="position:absolute;left:0px;top:0px;overflow:visible" width="1024" height="576" viewBox="0 0 1024 576"><path d="M186.7 240.2 l1.5 1.6 l2.7 -3.3" stroke="#fff" stroke-width="0.9" fill="none"/></svg>
<div style="position:absolute;left:194.4px;top:236.57px;font-size:7.0px;line-height:1;color:#e0e0e0;white-space:pre;font-weight:normal;">Use Nodes</div>
<div style="position:absolute;left:247.8px;top:234.3px;width:46px;height:11.7px;background:#2a2a2a;border-radius:3px;"></div>
<div style="position:absolute;left:251.9px;top:236.57px;font-size:7.0px;line-height:1;color:#dedede;white-space:pre;font-weight:normal;">Slot 1</div>
<svg style="position:absolute;left:0px;top:0px;overflow:visible" width="1024" height="576" viewBox="0 0 1024 576"><path d="M288.6 239.3 l1.4 1.4 l1.4 -1.4" stroke="#ccc" stroke-width="0.8" fill="none"/></svg>
<div style="position:absolute;left:298px;top:234.3px;width:15px;height:11.7px;background:#2a2a2a;border-radius:3px;"></div>
<svg style="position:absolute;left:0px;top:0px;overflow:visible" width="1024" height="576" viewBox="0 0 1024 576"><circle cx="303.5" cy="240" r="3.8" fill="#ddd"/><path d="M303.5 236.2 A3.8 3.8 0 0 1 307.3 240 H303.5 Z M303.5 240 L301 243 A3.8 3.8 0 0 1 299.7 240 Z" fill="#333"/><path d="M308.6 239.3 l1.4 1.4 l1.4 -1.4" stroke="#ccc" stroke-width="0.8" fill="none"/></svg>
<div style="position:absolute;left:315px;top:234.3px;width:45.4px;height:11.7px;background:#1d1d1d;border-radius:0px;"></div>
<div style="position:absolute;left:319.3px;top:236.57px;font-size:7.0px;line-height:1;color:#dcdcdc;white-space:pre;font-weight:normal;">cloth2</div>
<div style="position:absolute;left:360.4px;top:234.3px;width:15.3px;height:11.7px;background:#464646;border-radius:0px;"></div>
<div style="position:absolute;left:363.8px;top:236.57px;font-size:7.0px;line-height:1;color:#dcdcdc;white-space:pre;font-weight:normal;">14</div>
<div style="position:absolute;left:375.7px;top:234.3px;width:35.3px;height:11.7px;background:#3a3a3a;border-radius:3px;border-top-left-radius:0;border-bottom-left-radius:0;"></div>
<svg style="position:absolute;left:0px;top:0px;overflow:visible" width="1024" height="576" viewBox="0 0 1024 576"><path d="M379 237 L382.3 236 L385.6 237 V240.5 Q385.6 243.5 382.3 245 Q379 243.5 379 240.5 Z" fill="none" stroke="#bbb" stroke-width="0.8"/><rect x="391" y="238" width="5" height="6.5" fill="none" stroke="#ccc" stroke-width="0.8"/><path d="M393 238 V236.5 H398.5 V243 H396" fill="none" stroke="#ccc" stroke-width="0.8"/><path d="M403 237 l5.5 5.5 M408.5 237 l-5.5 5.5" stroke="#bbb" stroke-width="0.9"/><path d="M416.5 244.5 l3 -3 M418.5 237.5 l4.5 4.5 M421 236.5 l-2.8 2.8 l3.3 3.3 l2.8 -2.8 z" stroke="#999" stroke-width="0.8" fill="none"/></svg>
<div style="position:absolute;left:575.6px;top:234.3px;width:10.4px;height:11.7px;background:#3a3a3a;border-radius:3px;"></div>
<svg style="position:absolute;left:0px;top:0px;overflow:visible" width="1024" height="576" viewBox="0 0 1024 576"><path d="M578 243 Q578 237 581 237 Q584 237 584 240 Q584 242 582 242 Q580.5 242 580.5 240.5" stroke="#bbb" stroke-width="0.8" fill="none"/></svg>
<div style="position:absolute;left:588.8px;top:234.3px;width:15px;height:11.7px;background:#2a2a2a;border-radius:3px;"></div>
<svg style="position:absolute;left:0px;top:0px;overflow:visible" width="1024" height="576" viewBox="0 0 1024 576"><path d="M590.5 237 V244 M593 237 V244 M589 239 H596 M589 242 H596" stroke="#ddd" stroke-width="0.9"/><rect x="594.8" y="235.8" width="2.6" height="2.6" fill="#ddd"/><path d="M599.6 239.3 l1.4 1.4 l1.4 -1.4" stroke="#ccc" stroke-width="0.8" fill="none"/></svg>
<div style="position:absolute;left:607.8px;top:234.3px;width:23px;height:11.7px;background:#2a2a2a;border-radius:3px;"></div>
<div style="position:absolute;left:607.8px;top:234.3px;width:11.5px;height:11.7px;background:#4772b3;border-radius:3px;border-top-right-radius:0;border-bottom-right-radius:0;"></div>
<svg style="position:absolute;left:0px;top:0px;overflow:visible" width="1024" height="576" viewBox="0 0 1024 576"><circle cx="613.5" cy="240.3" r="3.6" fill="none" stroke="#fff" stroke-width="1"/><circle cx="615.3" cy="239.3" r="2.6" fill="#fff"/><path d="M623.3000000000001 239.60000000000002 l1.4 1.4 l1.4 -1.4" stroke="#ccc" stroke-width="0.8" fill="none"/></svg>
<svg style="position:absolute;left:0px;top:0px;overflow:visible" width="1024" height="576" viewBox="0 0 1024 576"><path d="M0.5 258 l2 2 l-2 2" stroke="#bbb" stroke-width="0.8" fill="none"/><rect x="13" y="257" width="4.4" height="5" fill="#e6e6e6"/><path d="M11.2 258 V255.8 H13 M17.5 255.8 H19.2 V258 M19.2 261.5 V263.5 H17.5 M13 263.5 H11.2 V261.5" stroke="#aaa" stroke-width="0.7" fill="none"/><path d="M51.7 257.5 l2.5 2.5 l-2.5 2.5" stroke="#ccc" stroke-width="0.9" fill="none"/><path d="M60 256 H67 L63.5 262.5 Z" fill="none" stroke="#ddd" stroke-width="0.9"/><circle cx="60" cy="256" r="1.2" fill="#ddd"/><circle cx="67" cy="256" r="1.2" fill="#ddd"/><circle cx="63.5" cy="263" r="1.2" fill="#ddd"/><path d="M115.7 257.5 l2.5 2.5 l-2.5 2.5" stroke="#ccc" stroke-width="0.9" fill="none"/><circle cx="127" cy="260" r="3.9" fill="#ddd"/><path d="M127 256.1 A3.9 3.9 0 0 1 130.9 260 H127 Z M127 260 L124.3 263 A3.9 3.9 0 0 1 123.1 260 Z" fill="#333"/></svg>
<div style="position:absolute;left:25px;top:256.57px;font-size:7.0px;line-height:1;color:#dcdcdc;white-space:pre;font-weight:normal;">inner</div>
<div style="position:absolute;left:73.4px;top:256.57px;font-size:7.0px;line-height:1;color:#dcdcdc;white-space:pre;font-weight:normal;">Plane.007</div>
<div style="position:absolute;left:136.9px;top:256.57px;font-size:7.0px;line-height:1;color:#dcdcdc;white-space:pre;font-weight:normal;">cloth2</div>
<svg style="position:absolute;left:0px;top:0px;overflow:visible" width="1024" height="576" viewBox="0 0 1024 576"><path d="M634 258 l-1.5 2.5 l1.5 2.5" stroke="#888" stroke-width="0.8" fill="none"/></svg>
<div style="position:absolute;left:632.6px;top:297px;width:2.4px;height:229px;background:#2e2e2e;border-radius:1.2px;"></div>
<div style="position:absolute;left:8px;top:546px;width:622px;height:1.4px;background:#232323;border-radius:1px;"></div>
<div style="position:absolute;left:322px;top:545.6px;width:308px;height:1.8px;background:#2e2e2e;border-radius:1px;"></div>
<svg style="position:absolute;left:0px;top:0px;overflow:visible" width="1024" height="576" viewBox="0 0 1024 576"><path d="M-14 289 C25.200000000000003 289 25.200000000000003 357.3 64.4 357.3" stroke="#111" stroke-width="1.9000000000000001" fill="none" opacity="0.5"/><path d="M-14 289 C25.200000000000003 289 25.200000000000003 357.3 64.4 357.3" stroke="#c9c92c" stroke-width="1.1" fill="none"/><path d="M31 413.3 C47.7 413.3 47.7 368.4 64.4 368.4" stroke="#111" stroke-width="1.9000000000000001" fill="none" opacity="0.5"/><path d="M31 413.3 C47.7 413.3 47.7 368.4 64.4 368.4" stroke="#c9c92c" stroke-width="1.1" fill="none"/><path d="M31 424.3 C47.7 424.3 47.7 347.4 64.4 347.4" stroke="#111" stroke-width="1.9000000000000001" fill="none" opacity="0.5"/><path d="M31 424.3 C47.7 424.3 47.7 347.4 64.4 347.4" stroke="#b4b4b4" stroke-width="1.1" fill="none"/><path d="M135 285.8 C176.875 285.8 176.875 350 218.75 350" stroke="#111" stroke-width="1.9000000000000001" fill="none" opacity="0.5"/><path d="M135 285.8 C176.875 285.8 176.875 350 218.75 350" stroke="#c9c92c" stroke-width="1.1" fill="none"/><path d="M183 412.2 C200.875 412.2 200.875 361 218.75 361" stroke="#111" stroke-width="1.9000000000000001" fill="none" opacity="0.5"/><path d="M183 412.2 C200.875 412.2 200.875 361 218.75 361" stroke="#c9c92c" stroke-width="1.1" fill="none"/><path d="M183 423.2 C200.875 423.2 200.875 339.3 218.75 339.3" stroke="#111" stroke-width="1.9000000000000001" fill="none" opacity="0.5"/><path d="M183 423.2 C200.875 423.2 200.875 339.3 218.75 339.3" stroke="#b4b4b4" stroke-width="1.1" fill="none"/><path d="M289.25 278 C385.475 278 385.475 351.6 481.7 351.6" stroke="#111" stroke-width="1.9000000000000001" fill="none" opacity="0.5"/><path d="M289.25 278 C385.475 278 385.475 351.6 481.7 351.6" stroke="#c9c92c" stroke-width="1.1" fill="none"/><defs><linearGradient id="g321_408" gradientUnits="userSpaceOnUse" x1="321" y1="408.2" x2="337.2" y2="472.3"><stop offset="0" stop-color="#c9c92c"/><stop offset="1" stop-color="#b4b4b4"/></linearGradient></defs><path d="M321 408.2 C329.1 408.2 329.1 472.3 337.2 472.3" stroke="#111" stroke-width="1.9000000000000001" fill="none" opacity="0.5"/><path d="M321 408.2 C329.1 408.2 329.1 472.3 337.2 472.3" stroke="url(#g321_408)" stroke-width="1.1" fill="none"/><path d="M457.6 396.1 C469.65 396.1 469.65 362.5 481.7 362.5" stroke="#111" stroke-width="1.9000000000000001" fill="none" opacity="0.5"/><path d="M457.6 396.1 C469.65 396.1 469.65 362.5 481.7 362.5" stroke="#c9c92c" stroke-width="1.1" fill="none"/><path d="M457.6 407.2 C469.65 407.2 469.65 340.9 481.7 340.9" stroke="#111" stroke-width="1.9000000000000001" fill="none" opacity="0.5"/><path d="M457.6 407.2 C469.65 407.2 469.65 340.9 481.7 340.9" stroke="#b4b4b4" stroke-width="1.1" fill="none"/><defs><linearGradient id="g552_279" gradientUnits="userSpaceOnUse" x1="552.2" y1="279.7" x2="560" y2="292.2"><stop offset="0" stop-color="#c9c92c"/><stop offset="1" stop-color="#63c763"/></linearGradient></defs><path d="M552.2 279.7 C556.1 279.7 556.1 292.2 560 292.2" stroke="#111" stroke-width="1.9000000000000001" fill="none" opacity="0.5"/><path d="M552.2 279.7 C556.1 279.7 556.1 292.2 560 292.2" stroke="url(#g552_279)" stroke-width="1.1" fill="none"/></svg>
<div style="position:absolute;left:64.4px;top:269.2px;width:70.5px;height:107.7px;background:#303030;border-radius:3px;box-shadow:0 0 0 0.6px #141414;"></div>
<div style="position:absolute;left:64.4px;top:269.2px;width:70.5px;height:10px;background:#6e6b22;border-radius:3px;border-bottom-left-radius:0;border-bottom-right-radius:0;"></div>
<svg style="position:absolute;left:0px;top:0px;overflow:visible" width="1024" height="576" viewBox="0 0 1024 576"><path d="M69.7 273.0 l2 2 l2 -2" stroke="#e8e8e8" stroke-width="0.85" fill="none"/></svg>
<div style="position:absolute;left:75.9px;top:271.61px;font-size:6.6px;line-height:1;color:#eaeaea;white-space:pre;font-weight:normal;transform:scaleX(0.91);transform-origin:0 0;">Mix</div>
<div style="position:absolute;right:895.1px;top:283.30px;font-size:6.5px;line-height:1;color:#e0e0e0;white-space:pre;font-weight:normal;text-align:right;transform:scaleX(0.91);transform-origin:100% 0;">Result</div>
<div style="position:absolute;left:69.60000000000001px;top:295.9px;width:59.3px;height:8.6px;background:#282828;border-radius:2px;"></div>
<div style="position:absolute;left:72.60000000000001px;top:297.70px;font-size:6.5px;line-height:1;color:#e0e0e0;white-space:pre;font-weight:normal;transform:scaleX(0.91);transform-origin:0 0;">Color</div>
<svg style="position:absolute;left:0px;top:0px;overflow:visible" width="1024" height="576" viewBox="0 0 1024 576"><path d="M123.5 299.5 l1.4 1.4 l1.4 -1.4" stroke="#cfcfcf" stroke-width="0.7" fill="none"/></svg>
<div style="position:absolute;left:69.60000000000001px;top:307.9px;width:59.3px;height:8.6px;background:#282828;border-radius:2px;"></div>
<div style="position:absolute;left:72.60000000000001px;top:309.70px;font-size:6.5px;line-height:1;color:#e0e0e0;white-space:pre;font-weight:normal;transform:scaleX(0.91);transform-origin:0 0;">Mix</div>
<svg style="position:absolute;left:0px;top:0px;overflow:visible" width="1024" height="576" viewBox="0 0 1024 576"><path d="M123.5 311.5 l1.4 1.4 l1.4 -1.4" stroke="#cfcfcf" stroke-width="0.7" fill="none"/></svg>
<div style="position:absolute;left:69.60000000000001px;top:320.7px;width:7px;height:7px;background:#545454;border-radius:1.5px;"></div>
<div style="position:absolute;left:78.2px;top:321.70px;font-size:6.5px;line-height:1;color:#e0e0e0;white-space:pre;font-weight:normal;transform:scaleX(0.91);transform-origin:0 0;">Clamp Result</div>
<div style="position:absolute;left:69.60000000000001px;top:332.7px;width:7px;height:7px;background:#4772b3;border-radius:1.5px;"></div>
<svg style="position:absolute;left:0px;top:0px;overflow:visible" width="1024" height="576" viewBox="0 0 1024 576"><path d="M71.2 336.2 l1.5 1.6 l2.6 -3.2" stroke="#fff" stroke-width="0.9" fill="none"/></svg>
<div style="position:absolute;left:78.2px;top:333.70px;font-size:6.5px;line-height:1;color:#e0e0e0;white-space:pre;font-weight:normal;transform:scaleX(0.91);transform-origin:0 0;">Clamp Factor</div>
<div style="position:absolute;left:69.4px;top:344.70px;font-size:6.5px;line-height:1;color:#e0e0e0;white-space:pre;font-weight:normal;transform:scaleX(0.91);transform-origin:0 0;">Factor</div>
<div style="position:absolute;left:69.4px;top:355.40px;font-size:6.5px;line-height:1;color:#e0e0e0;white-space:pre;font-weight:normal;transform:scaleX(0.91);transform-origin:0 0;">A</div>
<div style="position:absolute;left:69.4px;top:366.30px;font-size:6.5px;line-height:1;color:#e0e0e0;white-space:pre;font-weight:normal;transform:scaleX(0.91);transform-origin:0 0;">B</div>
<div style="position:absolute;left:218.75px;top:261.5px;width:70.5px;height:107.7px;background:#303030;border-radius:3px;box-shadow:0 0 0 0.6px #141414;"></div>
<div style="position:absolute;left:218.75px;top:261.5px;width:70.5px;height:10px;background:#6e6b22;border-radius:3px;border-bottom-left-radius:0;border-bottom-right-radius:0;"></div>
<svg style="position:absolute;left:0px;top:0px;overflow:visible" width="1024" height="576" viewBox="0 0 1024 576"><path d="M224.05 265.3 l2 2 l2 -2" stroke="#e8e8e8" stroke-width="0.85" fill="none"/></svg>
<div style="position:absolute;left:230.25px;top:263.91px;font-size:6.6px;line-height:1;color:#eaeaea;white-space:pre;font-weight:normal;transform:scaleX(0.91);transform-origin:0 0;">Mix</div>
<div style="position:absolute;right:740.75px;top:275.60px;font-size:6.5px;line-height:1;color:#e0e0e0;white-space:pre;font-weight:normal;text-align:right;transform:scaleX(0.91);transform-origin:100% 0;">Result</div>
<div style="position:absolute;left:223.95px;top:288.2px;width:59.3px;height:8.6px;background:#282828;border-radius:2px;"></div>
<div style="position:absolute;left:226.95px;top:290.00px;font-size:6.5px;line-height:1;color:#e0e0e0;white-space:pre;font-weight:normal;transform:scaleX(0.91);transform-origin:0 0;">Color</div>
<svg style="position:absolute;left:0px;top:0px;overflow:visible" width="1024" height="576" viewBox="0 0 1024 576"><path d="M277.85 291.8 l1.4 1.4 l1.4 -1.4" stroke="#cfcfcf" stroke-width="0.7" fill="none"/></svg>
<div style="position:absolute;left:223.95px;top:300.2px;width:59.3px;height:8.6px;background:#282828;border-radius:2px;"></div>
<div style="position:absolute;left:226.95px;top:302.00px;font-size:6.5px;line-height:1;color:#e0e0e0;white-space:pre;font-weight:normal;transform:scaleX(0.91);transform-origin:0 0;">Mix</div>
<svg style="position:absolute;left:0px;top:0px;overflow:visible" width="1024" height="576" viewBox="0 0 1024 576"><path d="M277.85 303.8 l1.4 1.4 l1.4 -1.4" stroke="#cfcfcf" stroke-width="0.7" fill="none"/></svg>
<div style="position:absolute;left:223.95px;top:313.0px;width:7px;height:7px;background:#545454;border-radius:1.5px;"></div>
<div style="position:absolute;left:232.54999999999998px;top:314.00px;font-size:6.5px;line-height:1;color:#e0e0e0;white-space:pre;font-weight:normal;transform:scaleX(0.91);transform-origin:0 0;">Clamp Result</div>
<div style="position:absolute;left:223.95px;top:325.0px;width:7px;height:7px;background:#4772b3;border-radius:1.5px;"></div>
<svg style="position:absolute;left:0px;top:0px;overflow:visible" width="1024" height="576" viewBox="0 0 1024 576"><path d="M225.54999999999998 328.5 l1.5 1.6 l2.6 -3.2" stroke="#fff" stroke-width="0.9" fill="none"/></svg>
<div style="position:absolute;left:232.54999999999998px;top:326.00px;font-size:6.5px;line-height:1;color:#e0e0e0;white-space:pre;font-weight:normal;transform:scaleX(0.91);transform-origin:0 0;">Clamp Factor</div>
<div style="position:absolute;left:223.75px;top:337.00px;font-size:6.5px;line-height:1;color:#e0e0e0;white-space:pre;font-weight:normal;transform:scaleX(0.91);transform-origin:0 0;">Factor</div>
<div style="position:absolute;left:223.75px;top:347.70px;font-size:6.5px;line-height:1;color:#e0e0e0;white-space:pre;font-weight:normal;transform:scaleX(0.91);transform-origin:0 0;">A</div>
<div style="position:absolute;left:223.75px;top:358.60px;font-size:6.5px;line-height:1;color:#e0e0e0;white-space:pre;font-weight:normal;transform:scaleX(0.91);transform-origin:0 0;">B</div>
<div style="position:absolute;left:481.7px;top:263px;width:70.5px;height:107.7px;background:#303030;border-radius:3px;box-shadow:0 0 0 0.6px #141414;"></div>
<div style="position:absolute;left:481.7px;top:263px;width:70.5px;height:10px;background:#6e6b22;border-radius:3px;border-bottom-left-radius:0;border-bottom-right-radius:0;"></div>
<svg style="position:absolute;left:0px;top:0px;overflow:visible" width="1024" height="576" viewBox="0 0 1024 576"><path d="M487.0 266.8 l2 2 l2 -2" stroke="#e8e8e8" stroke-width="0.85" fill="none"/></svg>
<div style="position:absolute;left:493.2px;top:265.41px;font-size:6.6px;line-height:1;color:#eaeaea;white-space:pre;font-weight:normal;transform:scaleX(0.91);transform-origin:0 0;">Multiply</div>
<div style="position:absolute;right:477.79999999999995px;top:277.10px;font-size:6.5px;line-height:1;color:#e0e0e0;white-space:pre;font-weight:normal;text-align:right;transform:scaleX(0.91);transform-origin:100% 0;">Result</div>
<div style="position:absolute;left:486.9px;top:289.7px;width:59.3px;height:8.6px;background:#282828;border-radius:2px;"></div>
<div style="position:absolute;left:489.9px;top:291.50px;font-size:6.5px;line-height:1;color:#e0e0e0;white-space:pre;font-weight:normal;transform:scaleX(0.91);transform-origin:0 0;">Color</div>
<svg style="position:absolute;left:0px;top:0px;overflow:visible" width="1024" height="576" viewBox="0 0 1024 576"><path d="M540.8 293.3 l1.4 1.4 l1.4 -1.4" stroke="#cfcfcf" stroke-width="0.7" fill="none"/></svg>
<div style="position:absolute;left:486.9px;top:301.7px;width:59.3px;height:8.6px;background:#282828;border-radius:2px;"></div>
<div style="position:absolute;left:489.9px;top:303.50px;font-size:6.5px;line-height:1;color:#e0e0e0;white-space:pre;font-weight:normal;transform:scaleX(0.91);transform-origin:0 0;">Multiply</div>
<svg style="position:absolute;left:0px;top:0px;overflow:visible" width="1024" height="576" viewBox="0 0 1024 576"><path d="M540.8 305.3 l1.4 1.4 l1.4 -1.4" stroke="#cfcfcf" stroke-width="0.7" fill="none"/></svg>
<div style="position:absolute;left:486.9px;top:314.5px;width:7px;height:7px;background:#545454;border-radius:1.5px;"></div>
<div style="position:absolute;left:495.5px;top:315.50px;font-size:6.5px;line-height:1;color:#e0e0e0;white-space:pre;font-weight:normal;transform:scaleX(0.91);transform-origin:0 0;">Clamp Result</div>
<div style="position:absolute;left:486.9px;top:326.5px;width:7px;height:7px;background:#4772b3;border-radius:1.5px;"></div>
<svg style="position:absolute;left:0px;top:0px;overflow:visible" width="1024" height="576" viewBox="0 0 1024 576"><path d="M488.5 330 l1.5 1.6 l2.6 -3.2" stroke="#fff" stroke-width="0.9" fill="none"/></svg>
<div style="position:absolute;left:495.5px;top:327.50px;font-size:6.5px;line-height:1;color:#e0e0e0;white-space:pre;font-weight:normal;transform:scaleX(0.91);transform-origin:0 0;">Clamp Factor</div>
<div style="position:absolute;left:486.7px;top:338.50px;font-size:6.5px;line-height:1;color:#e0e0e0;white-space:pre;font-weight:normal;transform:scaleX(0.91);transform-origin:0 0;">Factor</div>
<div style="position:absolute;left:486.7px;top:349.20px;font-size:6.5px;line-height:1;color:#e0e0e0;white-space:pre;font-weight:normal;transform:scaleX(0.91);transform-origin:0 0;">A</div>
<div style="position:absolute;left:486.7px;top:360.10px;font-size:6.5px;line-height:1;color:#e0e0e0;white-space:pre;font-weight:normal;transform:scaleX(0.91);transform-origin:0 0;">B</div>
<div style="position:absolute;left:560px;top:264.3px;width:70px;height:67.2px;background:#303030;border-radius:3px;box-shadow:0 0 0 0.6px #141414;"></div>
<div style="position:absolute;left:560px;top:264.3px;width:70px;height:9.7px;background:#52222e;border-radius:3px;border-bottom-left-radius:0;border-bottom-right-radius:0;"></div>
<svg style="position:absolute;left:0px;top:0px;overflow:visible" width="1024" height="576" viewBox="0 0 1024 576"><path d="M565.3 267.95000000000005 l2 2 l2 -2" stroke="#e8e8e8" stroke-width="0.85" fill="none"/></svg>
<div style="position:absolute;left:571.5px;top:266.56px;font-size:6.6px;line-height:1;color:#eaeaea;white-space:pre;font-weight:normal;transform:scaleX(0.91);transform-origin:0 0;">Material Output</div>
<div style="position:absolute;left:565.5px;top:277.0px;width:58.5px;height:8.6px;background:#282828;border-radius:2px;"></div>
<div style="position:absolute;left:568.5px;top:278.80px;font-size:6.5px;line-height:1;color:#e0e0e0;white-space:pre;font-weight:normal;transform:scaleX(0.91);transform-origin:0 0;">All</div>
<svg style="position:absolute;left:0px;top:0px;overflow:visible" width="1024" height="576" viewBox="0 0 1024 576"><path d="M618.6 280.6 l1.4 1.4 l1.4 -1.4" stroke="#cfcfcf" stroke-width="0.7" fill="none"/></svg>
<div style="position:absolute;left:565.5px;top:289.70px;font-size:6.5px;line-height:1;color:#e0e0e0;white-space:pre;font-weight:normal;transform:scaleX(0.91);transform-origin:0 0;">Surface</div>
<div style="position:absolute;left:565.5px;top:300.40px;font-size:6.5px;line-height:1;color:#e0e0e0;white-space:pre;font-weight:normal;transform:scaleX(0.91);transform-origin:0 0;">Volume</div>
<div style="position:absolute;left:565.5px;top:311.00px;font-size:6.5px;line-height:1;color:#e0e0e0;white-space:pre;font-weight:normal;transform:scaleX(0.91);transform-origin:0 0;">Displacement</div>
<div style="position:absolute;left:565.5px;top:322.00px;font-size:6.5px;line-height:1;color:#e0e0e0;white-space:pre;font-weight:normal;transform:scaleX(0.91);transform-origin:0 0;">Thickness</div>
<div style="position:absolute;left:337.2px;top:380px;width:120.4px;height:99px;background:#303030;border-radius:3px;box-shadow:0 0 0 0.6px #141414;"></div>
<div style="position:absolute;left:337.2px;top:380px;width:120.4px;height:9.7px;background:#26617f;border-radius:3px;border-bottom-left-radius:0;border-bottom-right-radius:0;"></div>
<svg style="position:absolute;left:0px;top:0px;overflow:visible" width="1024" height="576" viewBox="0 0 1024 576"><path d="M342.5 383.65000000000003 l2 2 l2 -2" stroke="#e8e8e8" stroke-width="0.85" fill="none"/></svg>
<div style="position:absolute;left:348.7px;top:382.26px;font-size:6.6px;line-height:1;color:#eaeaea;white-space:pre;font-weight:normal;transform:scaleX(0.91);transform-origin:0 0;">Color Ramp</div>
<div style="position:absolute;right:572.4px;top:393.60px;font-size:6.5px;line-height:1;color:#e0e0e0;white-space:pre;font-weight:normal;text-align:right;transform:scaleX(0.91);transform-origin:100% 0;">Color</div>
<div style="position:absolute;right:572.4px;top:404.70px;font-size:6.5px;line-height:1;color:#e0e0e0;white-space:pre;font-weight:normal;text-align:right;transform:scaleX(0.91);transform-origin:100% 0;">Alpha</div>
<svg style="position:absolute;left:0px;top:0px;overflow:visible" width="1024" height="576" viewBox="0 0 1024 576"><path d="M344.2 422.6 h5 M346.7 420.1 v5" stroke="#ddd" stroke-width="0.8"/><path d="M357.2 422.6 h5" stroke="#ddd" stroke-width="0.8"/><path d="M370.8 421.6 l1.4 1.4 l1.4 -1.4" stroke="#ddd" stroke-width="0.8" fill="none"/></svg>
<div style="position:absolute;left:389.0px;top:418.3px;width:31px;height:8.6px;background:#282828;border-radius:2px;"></div>
<div style="position:absolute;left:392.7px;top:420.00px;font-size:6.5px;line-height:1;color:#e0e0e0;white-space:pre;font-weight:normal;transform:scaleX(0.91);transform-origin:0 0;">RGB</div>
<svg style="position:absolute;left:0px;top:0px;overflow:visible" width="1024" height="576" viewBox="0 0 1024 576"><path d="M414.8 421.90000000000003 l1.4 1.4 l1.4 -1.4" stroke="#ccc" stroke-width="0.7" fill="none"/></svg>
<div style="position:absolute;left:421.0px;top:418.3px;width:31.6px;height:8.6px;background:#282828;border-radius:2px;"></div>
<div style="position:absolute;left:424.2px;top:420.00px;font-size:6.5px;line-height:1;color:#e0e0e0;white-space:pre;font-weight:normal;transform:scaleX(0.91);transform-origin:0 0;">Linear</div>
<svg style="position:absolute;left:0px;top:0px;overflow:visible" width="1024" height="576" viewBox="0 0 1024 576"><path d="M447.3 421.90000000000003 l1.4 1.4 l1.4 -1.4" stroke="#ccc" stroke-width="0.7" fill="none"/></svg>
<svg style="position:absolute;left:0px;top:0px;overflow:visible" width="1024" height="576" viewBox="0 0 1024 576"><defs><linearGradient id="crg" x1="0" x2="1"><stop offset="0" stop-color="#8c4f87"/><stop offset="1" stop-color="#ffffff"/></linearGradient></defs><rect x="342.5" y="430.8" width="110" height="9" fill="url(#crg)"/><path d="M342.5 436 l2 -4 l2 4 z" fill="#fff" stroke="#222" stroke-width="0.4"/><rect x="340.7" y="436" width="4.5" height="3.6" fill="#8c4f87" stroke="#fff" stroke-width="0.5"/><rect x="450.2" y="436" width="4.5" height="3.6" fill="#fff" stroke="#222" stroke-width="0.5"/></svg>
<div style="position:absolute;left:342.5px;top:445px;width:30.5px;height:9px;background:#545454;border-radius:2px;"></div>
<div style="position:absolute;left:157.7px;width:400px;top:446.80px;font-size:6.5px;line-height:1;color:#e0e0e0;white-space:pre;font-weight:normal;text-align:center;transform:scaleX(0.91);transform-origin:50% 0;">0</div>
<div style="position:absolute;left:378.0px;top:445px;width:74.5px;height:9px;background:#545454;border-radius:2px;"></div>
<div style="position:absolute;left:385.2px;top:446.80px;font-size:6.5px;line-height:1;color:#e0e0e0;white-space:pre;font-weight:normal;transform:scaleX(0.91);transform-origin:0 0;">Pos</div>
<div style="position:absolute;right:575.3px;top:446.80px;font-size:6.5px;line-height:1;color:#e0e0e0;white-space:pre;font-weight:normal;text-align:right;transform:scaleX(0.91);transform-origin:100% 0;">0.000</div>
<div style="position:absolute;left:342.5px;top:456.9px;width:110px;height:8.9px;background:#8c4f87;border-radius:2px;"></div>
<div style="position:absolute;left:342.7px;top:469.80px;font-size:6.5px;line-height:1;color:#e0e0e0;white-space:pre;font-weight:normal;transform:scaleX(0.91);transform-origin:0 0;">Fac</div>
<div style="position:absolute;left:62px;top:396px;width:121px;height:131.3px;background:#303030;border-radius:3px;box-shadow:0 0 0 0.8px #d8d8d8;"></div>
<div style="position:absolute;left:62px;top:396px;width:121px;height:9px;background:#7a481c;border-radius:3px;border-bottom-left-radius:0;border-bottom-right-radius:0;"></div>
<svg style="position:absolute;left:0px;top:0px;overflow:visible" width="1024" height="576" viewBox="0 0 1024 576"><path d="M67.3 399.3 l2 2 l2 -2" stroke="#e8e8e8" stroke-width="0.85" fill="none"/></svg>
<div style="position:absolute;left:73.5px;top:397.91px;font-size:6.6px;line-height:1;color:#eaeaea;white-space:pre;font-weight:normal;transform:scaleX(0.91);transform-origin:0 0;">nuime</div>
<div style="position:absolute;right:847px;top:409.70px;font-size:6.5px;line-height:1;color:#e0e0e0;white-space:pre;font-weight:normal;text-align:right;transform:scaleX(0.91);transform-origin:100% 0;">Color</div>
<div style="position:absolute;right:847px;top:420.70px;font-size:6.5px;line-height:1;color:#e0e0e0;white-space:pre;font-weight:normal;text-align:right;transform:scaleX(0.91);transform-origin:100% 0;">Alpha</div>
<div style="position:absolute;left:69px;top:432px;width:13px;height:8.8px;background:#282828;border-radius:2px;"></div>
<svg style="position:absolute;left:0px;top:0px;overflow:visible" width="1024" height="576" viewBox="0 0 1024 576"><rect x="70" y="433.2" width="6.5" height="6.5" fill="none" stroke="#ddd" stroke-width="0.8"/><path d="M70.3 439.7 L73.2 436 L76.2 439.7 Z" fill="#ddd"/><path d="M78.1 435.90000000000003 l1.4 1.4 l1.4 -1.4" stroke="#ccc" stroke-width="0.6" fill="none"/></svg>
<div style="position:absolute;left:82.3px;top:432px;width:44px;height:8.8px;background:#1d1d1d;border-radius:0px;"></div>
<div style="position:absolute;left:85.5px;top:433.70px;font-size:6.5px;line-height:1;color:#e0e0e0;white-space:pre;font-weight:normal;transform:scaleX(0.91);transform-origin:0 0;">nuime</div>
<div style="position:absolute;left:126.3px;top:432px;width:11px;height:8.8px;background:#464646;border-radius:0px;"></div>
<div style="position:absolute;left:129.8px;top:433.70px;font-size:6.5px;line-height:1;color:#e0e0e0;white-space:pre;font-weight:normal;transform:scaleX(0.91);transform-origin:0 0;">2</div>
<div style="position:absolute;left:137.3px;top:432px;width:40.69999999999999px;height:8.8px;background:#3a3a3a;border-radius:2px;border-top-left-radius:0;border-bottom-left-radius:0;"></div>
<svg style="position:absolute;left:0px;top:0px;overflow:visible" width="1024" height="576" viewBox="0 0 1024 576"><path d="M140 433.6 L142.8 433 L145.6 433.6 V436.5 Q145.6 439 142.8 440 Q140 439 140 436.5 Z" fill="none" stroke="#aaa" stroke-width="0.7"/><rect x="148.5" y="434.5" width="4" height="5.5" fill="none" stroke="#ccc" stroke-width="0.7"/><path d="M150 434.5 V433.2 H154.5 V438.5 H152.5" fill="none" stroke="#ccc" stroke-width="0.7"/><path d="M157.5 434.5 H160 L161 433.5 H165 V439.8 H157.5 Z" fill="#ddd"/><path d="M168.5 434 l4.8 4.8 M173.3 434 l-4.8 4.8" stroke="#bbb" stroke-width="0.8"/></svg>
<div style="position:absolute;left:68px;top:443.8px;width:110px;height:8.6px;background:#282828;border-radius:2px;"></div>
<div style="position:absolute;left:71px;top:445.60px;font-size:6.5px;line-height:1;color:#e0e0e0;white-space:pre;font-weight:normal;transform:scaleX(0.91);transform-origin:0 0;">Closest</div>
<svg style="position:absolute;left:0px;top:0px;overflow:visible" width="1024" height="576" viewBox="0 0 1024 576"><path d="M172.6 447.40000000000003 l1.4 1.4 l1.4 -1.4" stroke="#cfcfcf" stroke-width="0.7" fill="none"/></svg>
<div style="position:absolute;left:68px;top:456.2px;width:110px;height:8.6px;background:#282828;border-radius:2px;"></div>
<div style="position:absolute;left:71px;top:458.00px;font-size:6.5px;line-height:1;color:#e0e0e0;white-space:pre;font-weight:normal;transform:scaleX(0.91);transform-origin:0 0;">Flat</div>
<svg style="position:absolute;left:0px;top:0px;overflow:visible" width="1024" height="576" viewBox="0 0 1024 576"><path d="M172.6 459.8 l1.4 1.4 l1.4 -1.4" stroke="#cfcfcf" stroke-width="0.7" fill="none"/></svg>
<div style="position:absolute;left:68px;top:468.4px;width:110px;height:8.6px;background:#282828;border-radius:2px;"></div>
<div style="position:absolute;left:71px;top:470.20px;font-size:6.5px;line-height:1;color:#e0e0e0;white-space:pre;font-weight:normal;transform:scaleX(0.91);transform-origin:0 0;">Repeat</div>
<svg style="position:absolute;left:0px;top:0px;overflow:visible" width="1024" height="576" viewBox="0 0 1024 576"><path d="M172.6 472.0 l1.4 1.4 l1.4 -1.4" stroke="#cfcfcf" stroke-width="0.7" fill="none"/></svg>
<div style="position:absolute;left:68px;top:480.4px;width:110px;height:8.6px;background:#282828;border-radius:2px;"></div>
<div style="position:absolute;left:71px;top:482.20px;font-size:6.5px;line-height:1;color:#e0e0e0;white-space:pre;font-weight:normal;transform:scaleX(0.91);transform-origin:0 0;">Single Image</div>
<svg style="position:absolute;left:0px;top:0px;overflow:visible" width="1024" height="576" viewBox="0 0 1024 576"><path d="M172.6 484.0 l1.4 1.4 l1.4 -1.4" stroke="#cfcfcf" stroke-width="0.7" fill="none"/></svg>
<div style="position:absolute;left:67.5px;top:494.30px;font-size:6.5px;line-height:1;color:#e0e0e0;white-space:pre;font-weight:normal;transform:scaleX(0.91);transform-origin:0 0;">Color Space</div>
<div style="position:absolute;left:106.6px;top:492.4px;width:71.4px;height:8.6px;background:#282828;border-radius:2px;"></div>
<div style="position:absolute;left:109.6px;top:494.20px;font-size:6.5px;line-height:1;color:#e0e0e0;white-space:pre;font-weight:normal;transform:scaleX(0.91);transform-origin:0 0;">sRGB</div>
<svg style="position:absolute;left:0px;top:0px;overflow:visible" width="1024" height="576" viewBox="0 0 1024 576"><path d="M172.6 496.0 l1.4 1.4 l1.4 -1.4" stroke="#cfcfcf" stroke-width="0.7" fill="none"/></svg>
<div style="position:absolute;left:67.5px;top:506.50px;font-size:6.5px;line-height:1;color:#666;white-space:pre;font-weight:normal;transform:scaleX(0.91);transform-origin:0 0;">Alpha</div>
<div style="position:absolute;left:106.6px;top:504.6px;width:71.4px;height:8.6px;background:#2c2c2c;border-radius:2px;"></div>
<div style="position:absolute;left:109.6px;top:506.40px;font-size:6.5px;line-height:1;color:#606060;white-space:pre;font-weight:normal;transform:scaleX(0.91);transform-origin:0 0;">Straight</div>
<svg style="position:absolute;left:0px;top:0px;overflow:visible" width="1024" height="576" viewBox="0 0 1024 576"><path d="M172.6 508.20000000000005 l1.4 1.4 l1.4 -1.4" stroke="#cfcfcf" stroke-width="0.7" fill="none"/></svg>
<div style="position:absolute;left:67.5px;top:517.30px;font-size:6.5px;line-height:1;color:#e0e0e0;white-space:pre;font-weight:normal;transform:scaleX(0.91);transform-origin:0 0;">Vector</div>
<div style="position:absolute;left:201.7px;top:391.9px;width:121px;height:131.3px;background:#303030;border-radius:3px;box-shadow:0 0 0 0.6px #141414;"></div>
<div style="position:absolute;left:201.7px;top:391.9px;width:121px;height:9px;background:#7a481c;border-radius:3px;border-bottom-left-radius:0;border-bottom-right-radius:0;"></div>
<svg style="position:absolute;left:0px;top:0px;overflow:visible" width="1024" height="576" viewBox="0 0 1024 576"><path d="M207.0 395.2 l2 2 l2 -2" stroke="#e8e8e8" stroke-width="0.85" fill="none"/></svg>
<div style="position:absolute;left:213.2px;top:393.81px;font-size:6.6px;line-height:1;color:#eaeaea;white-space:pre;font-weight:normal;transform:scaleX(0.91);transform-origin:0 0;">wear2 AO denoise3.png</div>
<div style="position:absolute;right:707.3px;top:405.60px;font-size:6.5px;line-height:1;color:#e0e0e0;white-space:pre;font-weight:normal;text-align:right;transform:scaleX(0.91);transform-origin:100% 0;">Color</div>
<div style="position:absolute;right:707.3px;top:416.60px;font-size:6.5px;line-height:1;color:#e0e0e0;white-space:pre;font-weight:normal;text-align:right;transform:scaleX(0.91);transform-origin:100% 0;">Alpha</div>
<div style="position:absolute;left:208.7px;top:427.9px;width:13px;height:8.8px;background:#282828;border-radius:2px;"></div>
<svg style="position:absolute;left:0px;top:0px;overflow:visible" width="1024" height="576" viewBox="0 0 1024 576"><rect x="209.7" y="429.09999999999997" width="6.5" height="6.5" fill="none" stroke="#ddd" stroke-width="0.8"/><path d="M210.0 435.59999999999997 L212.89999999999998 431.9 L215.89999999999998 435.59999999999997 Z" fill="#ddd"/><path d="M217.79999999999998 431.8 l1.4 1.4 l1.4 -1.4" stroke="#ccc" stroke-width="0.6" fill="none"/></svg>
<div style="position:absolute;left:222.0px;top:427.9px;width:55px;height:8.8px;background:#1d1d1d;border-radius:0px;"></div>
<div style="position:absolute;left:225.2px;top:429.60px;font-size:6.5px;line-height:1;color:#e0e0e0;white-space:pre;font-weight:normal;transform:scaleX(0.91);transform-origin:0 0;">wear2 AO denois...</div>
<div style="position:absolute;left:277.0px;top:427.9px;width:40.69999999999999px;height:8.8px;background:#3a3a3a;border-radius:2px;border-top-left-radius:0;border-bottom-left-radius:0;"></div>
<svg style="position:absolute;left:0px;top:0px;overflow:visible" width="1024" height="576" viewBox="0 0 1024 576"><path d="M279.7 429.5 L282.5 428.9 L285.3 429.5 V432.4 Q285.3 434.9 282.5 435.9 Q279.7 434.9 279.7 432.4 Z" fill="none" stroke="#aaa" stroke-width="0.7"/><rect x="288.2" y="430.4" width="4" height="5.5" fill="none" stroke="#ccc" stroke-width="0.7"/><path d="M289.7 430.4 V429.09999999999997 H294.2 V434.4 H292.2" fill="none" stroke="#ccc" stroke-width="0.7"/><path d="M297.2 430.4 H299.7 L300.7 429.4 H304.7 V435.7 H297.2 Z" fill="#ddd"/><path d="M308.2 429.9 l4.8 4.8 M313.0 429.9 l-4.8 4.8" stroke="#bbb" stroke-width="0.8"/></svg>
<div style="position:absolute;left:207.7px;top:439.7px;width:110px;height:8.6px;background:#282828;border-radius:2px;"></div>
<div style="position:absolute;left:210.7px;top:441.50px;font-size:6.5px;line-height:1;color:#e0e0e0;white-space:pre;font-weight:normal;transform:scaleX(0.91);transform-origin:0 0;">Linear</div>
<svg style="position:absolute;left:0px;top:0px;overflow:visible" width="1024" height="576" viewBox="0 0 1024 576"><path d="M312.3 443.3 l1.4 1.4 l1.4 -1.4" stroke="#cfcfcf" stroke-width="0.7" fill="none"/></svg>
<div style="position:absolute;left:207.7px;top:452.09999999999997px;width:110px;height:8.6px;background:#282828;border-radius:2px;"></div>
<div style="position:absolute;left:210.7px;top:453.90px;font-size:6.5px;line-height:1;color:#e0e0e0;white-space:pre;font-weight:normal;transform:scaleX(0.91);transform-origin:0 0;">Flat</div>
<svg style="position:absolute;left:0px;top:0px;overflow:visible" width="1024" height="576" viewBox="0 0 1024 576"><path d="M312.3 455.7 l1.4 1.4 l1.4 -1.4" stroke="#cfcfcf" stroke-width="0.7" fill="none"/></svg>
<div style="position:absolute;left:207.7px;top:464.29999999999995px;width:110px;height:8.6px;background:#282828;border-radius:2px;"></div>
<div style="position:absolute;left:210.7px;top:466.10px;font-size:6.5px;line-height:1;color:#e0e0e0;white-space:pre;font-weight:normal;transform:scaleX(0.91);transform-origin:0 0;">Repeat</div>
<svg style="position:absolute;left:0px;top:0px;overflow:visible" width="1024" height="576" viewBox="0 0 1024 576"><path d="M312.3 467.9 l1.4 1.4 l1.4 -1.4" stroke="#cfcfcf" stroke-width="0.7" fill="none"/></svg>
<div style="position:absolute;left:207.7px;top:476.29999999999995px;width:110px;height:8.6px;background:#282828;border-radius:2px;"></div>
<div style="position:absolute;left:210.7px;top:478.10px;font-size:6.5px;line-height:1;color:#e0e0e0;white-space:pre;font-weight:normal;transform:scaleX(0.91);transform-origin:0 0;">Single Image</div>
<svg style="position:absolute;left:0px;top:0px;overflow:visible" width="1024" height="576" viewBox="0 0 1024 576"><path d="M312.3 479.9 l1.4 1.4 l1.4 -1.4" stroke="#cfcfcf" stroke-width="0.7" fill="none"/></svg>
<div style="position:absolute;left:207.2px;top:490.20px;font-size:6.5px;line-height:1;color:#e0e0e0;white-space:pre;font-weight:normal;transform:scaleX(0.91);transform-origin:0 0;">Color Space</div>
<div style="position:absolute;left:246.29999999999998px;top:488.29999999999995px;width:71.4px;height:8.6px;background:#282828;border-radius:2px;"></div>
<div style="position:absolute;left:249.29999999999998px;top:490.10px;font-size:6.5px;line-height:1;color:#e0e0e0;white-space:pre;font-weight:normal;transform:scaleX(0.91);transform-origin:0 0;">sRGB</div>
<svg style="position:absolute;left:0px;top:0px;overflow:visible" width="1024" height="576" viewBox="0 0 1024 576"><path d="M312.3 491.9 l1.4 1.4 l1.4 -1.4" stroke="#cfcfcf" stroke-width="0.7" fill="none"/></svg>
<div style="position:absolute;left:207.2px;top:502.40px;font-size:6.5px;line-height:1;color:#e0e0e0;white-space:pre;font-weight:normal;transform:scaleX(0.91);transform-origin:0 0;">Alpha</div>
<div style="position:absolute;left:246.29999999999998px;top:500.5px;width:71.4px;height:8.6px;background:#282828;border-radius:2px;"></div>
<div style="position:absolute;left:249.29999999999998px;top:502.30px;font-size:6.5px;line-height:1;color:#e0e0e0;white-space:pre;font-weight:normal;transform:scaleX(0.91);transform-origin:0 0;">Straight</div>
<svg style="position:absolute;left:0px;top:0px;overflow:visible" width="1024" height="576" viewBox="0 0 1024 576"><path d="M312.3 504.1 l1.4 1.4 l1.4 -1.4" stroke="#cfcfcf" stroke-width="0.7" fill="none"/></svg>
<div style="position:absolute;left:207.2px;top:513.20px;font-size:6.5px;line-height:1;color:#e0e0e0;white-space:pre;font-weight:normal;transform:scaleX(0.91);transform-origin:0 0;">Vector</div>
<div style="position:absolute;left:-90.3px;top:397.1px;width:121px;height:131.3px;background:#303030;border-radius:3px;box-shadow:0 0 0 0.6px #141414;"></div>
<div style="position:absolute;left:-90.3px;top:397.1px;width:121px;height:9px;background:#7a481c;border-radius:3px;border-bottom-left-radius:0;border-bottom-right-radius:0;"></div>
<svg style="position:absolute;left:0px;top:0px;overflow:visible" width="1024" height="576" viewBox="0 0 1024 576"><path d="M-85.0 400.40000000000003 l2 2 l2 -2" stroke="#e8e8e8" stroke-width="0.85" fill="none"/></svg>
<div style="position:absolute;left:-78.8px;top:399.01px;font-size:6.6px;line-height:1;color:#eaeaea;white-space:pre;font-weight:normal;transform:scaleX(0.91);transform-origin:0 0;">img</div>
<div style="position:absolute;right:999.3px;top:410.80px;font-size:6.5px;line-height:1;color:#e0e0e0;white-space:pre;font-weight:normal;text-align:right;transform:scaleX(0.91);transform-origin:100% 0;">Color</div>
<div style="position:absolute;right:999.3px;top:421.80px;font-size:6.5px;line-height:1;color:#e0e0e0;white-space:pre;font-weight:normal;text-align:right;transform:scaleX(0.91);transform-origin:100% 0;">Alpha</div>
<div style="position:absolute;left:-83.3px;top:433.1px;width:13px;height:8.8px;background:#282828;border-radius:2px;"></div>
<svg style="position:absolute;left:0px;top:0px;overflow:visible" width="1024" height="576" viewBox="0 0 1024 576"><rect x="-82.3" y="434.3" width="6.5" height="6.5" fill="none" stroke="#ddd" stroke-width="0.8"/><path d="M-82.0 440.8 L-79.1 437.1 L-76.1 440.8 Z" fill="#ddd"/><path d="M-74.2 437.00000000000006 l1.4 1.4 l1.4 -1.4" stroke="#ccc" stroke-width="0.6" fill="none"/></svg>
<div style="position:absolute;left:-70.0px;top:433.1px;width:44px;height:8.8px;background:#1d1d1d;border-radius:0px;"></div>
<div style="position:absolute;left:-66.8px;top:434.80px;font-size:6.5px;line-height:1;color:#e0e0e0;white-space:pre;font-weight:normal;transform:scaleX(0.91);transform-origin:0 0;">img</div>
<div style="position:absolute;left:-26.0px;top:433.1px;width:51.7px;height:8.8px;background:#3a3a3a;border-radius:2px;border-top-left-radius:0;border-bottom-left-radius:0;"></div>
<svg style="position:absolute;left:0px;top:0px;overflow:visible" width="1024" height="576" viewBox="0 0 1024 576"><path d="M-12.299999999999997 434.70000000000005 L-9.499999999999996 434.1 L-6.6999999999999975 434.70000000000005 V437.6 Q-6.6999999999999975 440.1 -9.499999999999996 441.1 Q-12.299999999999997 440.1 -12.299999999999997 437.6 Z" fill="none" stroke="#aaa" stroke-width="0.7"/><rect x="-3.799999999999997" y="435.6" width="4" height="5.5" fill="none" stroke="#ccc" stroke-width="0.7"/><path d="M-2.299999999999997 435.6 V434.3 H2.200000000000003 V439.6 H0.20000000000000284" fill="none" stroke="#ccc" stroke-width="0.7"/><path d="M5.200000000000003 435.6 H7.700000000000003 L8.700000000000003 434.6 H12.700000000000003 V440.90000000000003 H5.200000000000003 Z" fill="#ddd"/><path d="M16.200000000000003 435.1 l4.8 4.8 M21.0 435.1 l-4.8 4.8" stroke="#bbb" stroke-width="0.8"/></svg>
<div style="position:absolute;left:-84.3px;top:444.90000000000003px;width:110px;height:8.6px;background:#282828;border-radius:2px;"></div>
<div style="position:absolute;left:-81.3px;top:446.70px;font-size:6.5px;line-height:1;color:#e0e0e0;white-space:pre;font-weight:normal;transform:scaleX(0.91);transform-origin:0 0;">Linear</div>
<svg style="position:absolute;left:0px;top:0px;overflow:visible" width="1024" height="576" viewBox="0 0 1024 576"><path d="M20.300000000000004 448.50000000000006 l1.4 1.4 l1.4 -1.4" stroke="#cfcfcf" stroke-width="0.7" fill="none"/></svg>
<div style="position:absolute;left:-84.3px;top:457.3px;width:110px;height:8.6px;background:#282828;border-radius:2px;"></div>
<div style="position:absolute;left:-81.3px;top:459.10px;font-size:6.5px;line-height:1;color:#e0e0e0;white-space:pre;font-weight:normal;transform:scaleX(0.91);transform-origin:0 0;">Flat</div>
<svg style="position:absolute;left:0px;top:0px;overflow:visible" width="1024" height="576" viewBox="0 0 1024 576"><path d="M20.300000000000004 460.90000000000003 l1.4 1.4 l1.4 -1.4" stroke="#cfcfcf" stroke-width="0.7" fill="none"/></svg>
<div style="position:absolute;left:-84.3px;top:469.5px;width:110px;height:8.6px;background:#282828;border-radius:2px;"></div>
<div style="position:absolute;left:-81.3px;top:471.30px;font-size:6.5px;line-height:1;color:#e0e0e0;white-space:pre;font-weight:normal;transform:scaleX(0.91);transform-origin:0 0;">Repeat</div>
<svg style="position:absolute;left:0px;top:0px;overflow:visible" width="1024" height="576" viewBox="0 0 1024 576"><path d="M20.300000000000004 473.1 l1.4 1.4 l1.4 -1.4" stroke="#cfcfcf" stroke-width="0.7" fill="none"/></svg>
<div style="position:absolute;left:-84.3px;top:481.5px;width:110px;height:8.6px;background:#282828;border-radius:2px;"></div>
<div style="position:absolute;left:-81.3px;top:483.30px;font-size:6.5px;line-height:1;color:#e0e0e0;white-space:pre;font-weight:normal;transform:scaleX(0.91);transform-origin:0 0;">Single Image</div>
<svg style="position:absolute;left:0px;top:0px;overflow:visible" width="1024" height="576" viewBox="0 0 1024 576"><path d="M20.300000000000004 485.1 l1.4 1.4 l1.4 -1.4" stroke="#cfcfcf" stroke-width="0.7" fill="none"/></svg>
<div style="position:absolute;left:-84.8px;top:495.40px;font-size:6.5px;line-height:1;color:#e0e0e0;white-space:pre;font-weight:normal;transform:scaleX(0.91);transform-origin:0 0;">Color Space</div>
<div style="position:absolute;left:-45.699999999999996px;top:493.5px;width:71.4px;height:8.6px;background:#282828;border-radius:2px;"></div>
<div style="position:absolute;left:-42.699999999999996px;top:495.30px;font-size:6.5px;line-height:1;color:#e0e0e0;white-space:pre;font-weight:normal;transform:scaleX(0.91);transform-origin:0 0;">sRGB</div>
<svg style="position:absolute;left:0px;top:0px;overflow:visible" width="1024" height="576" viewBox="0 0 1024 576"><path d="M20.30000000000001 497.1 l1.4 1.4 l1.4 -1.4" stroke="#cfcfcf" stroke-width="0.7" fill="none"/></svg>
<div style="position:absolute;left:-84.8px;top:507.60px;font-size:6.5px;line-height:1;color:#e0e0e0;white-space:pre;font-weight:normal;transform:scaleX(0.91);transform-origin:0 0;">Alpha</div>
<div style="position:absolute;left:-45.699999999999996px;top:505.70000000000005px;width:71.4px;height:8.6px;background:#282828;border-radius:2px;"></div>
<div style="position:absolute;left:-42.699999999999996px;top:507.50px;font-size:6.5px;line-height:1;color:#e0e0e0;white-space:pre;font-weight:normal;transform:scaleX(0.91);transform-origin:0 0;">Straight</div>
<svg style="position:absolute;left:0px;top:0px;overflow:visible" width="1024" height="576" viewBox="0 0 1024 576"><path d="M20.30000000000001 509.30000000000007 l1.4 1.4 l1.4 -1.4" stroke="#cfcfcf" stroke-width="0.7" fill="none"/></svg>
<div style="position:absolute;left:-84.8px;top:518.40px;font-size:6.5px;line-height:1;color:#e0e0e0;white-space:pre;font-weight:normal;transform:scaleX(0.91);transform-origin:0 0;">Vector</div>
<svg style="position:absolute;left:0px;top:0px;overflow:visible" width="1024" height="576" viewBox="0 0 1024 576"><circle cx="134.9" cy="285.8" r="2.3" fill="#c7c729" stroke="#111" stroke-width="0.6"/><circle cx="64.4" cy="347.2" r="2.3" fill="#a1a1a1" stroke="#111" stroke-width="0.6"/><circle cx="64.4" cy="357.9" r="2.3" fill="#c7c729" stroke="#111" stroke-width="0.6"/><circle cx="64.4" cy="368.79999999999995" r="2.3" fill="#c7c729" stroke="#111" stroke-width="0.6"/><circle cx="289.25" cy="278.1" r="2.3" fill="#c7c729" stroke="#111" stroke-width="0.6"/><circle cx="218.75" cy="339.5" r="2.3" fill="#a1a1a1" stroke="#111" stroke-width="0.6"/><circle cx="218.75" cy="350.2" r="2.3" fill="#c7c729" stroke="#111" stroke-width="0.6"/><circle cx="218.75" cy="361.1" r="2.3" fill="#c7c729" stroke="#111" stroke-width="0.6"/><circle cx="552.2" cy="279.6" r="2.3" fill="#c7c729" stroke="#111" stroke-width="0.6"/><circle cx="481.7" cy="341" r="2.3" fill="#a1a1a1" stroke="#111" stroke-width="0.6"/><circle cx="481.7" cy="351.7" r="2.3" fill="#c7c729" stroke="#111" stroke-width="0.6"/><circle cx="481.7" cy="362.6" r="2.3" fill="#c7c729" stroke="#111" stroke-width="0.6"/><circle cx="560" cy="292.2" r="2.3" fill="#63c763" stroke="#111" stroke-width="0.6"/><circle cx="560" cy="302.90000000000003" r="2.3" fill="#63c763" stroke="#111" stroke-width="0.6"/><circle cx="560" cy="313.5" r="2.3" fill="#6363c7" stroke="#111" stroke-width="0.6"/><circle cx="560" cy="324.5" r="2.3" fill="#a1a1a1" stroke="#111" stroke-width="0.6"/><circle cx="457.6" cy="396.1" r="2.3" fill="#c7c729" stroke="#111" stroke-width="0.6"/><circle cx="457.6" cy="407.2" r="2.3" fill="#a1a1a1" stroke="#111" stroke-width="0.6"/><circle cx="337.2" cy="472.3" r="2.3" fill="#a1a1a1" stroke="#111" stroke-width="0.6"/><circle cx="183" cy="412.2" r="2.3" fill="#c7c729" stroke="#111" stroke-width="0.6"/><circle cx="183" cy="423.2" r="2.3" fill="#a1a1a1" stroke="#111" stroke-width="0.6"/><circle cx="62" cy="519.8" r="2.3" fill="#6363c7" stroke="#111" stroke-width="0.6"/><circle cx="322.7" cy="408.09999999999997" r="2.3" fill="#c7c729" stroke="#111" stroke-width="0.6"/><circle cx="322.7" cy="419.09999999999997" r="2.3" fill="#a1a1a1" stroke="#111" stroke-width="0.6"/><circle cx="201.7" cy="515.6999999999999" r="2.3" fill="#6363c7" stroke="#111" stroke-width="0.6"/><circle cx="30.700000000000003" cy="413.3" r="2.3" fill="#c7c729" stroke="#111" stroke-width="0.6"/><circle cx="30.700000000000003" cy="424.3" r="2.3" fill="#a1a1a1" stroke="#111" stroke-width="0.6"/><circle cx="-90.3" cy="520.9" r="2.3" fill="#6363c7" stroke="#111" stroke-width="0.6"/></svg>
<svg style="position:absolute;left:0px;top:0px;overflow:visible" width="1024" height="576" viewBox="0 0 1024 576"><defs><radialGradient id="skin" cx="0.15" cy="0.75" r="0.9"><stop offset="0" stop-color="#f4d9cf"/><stop offset="1" stop-color="#f8e8e1"/></radialGradient><linearGradient id="band" gradientUnits="userSpaceOnUse" x1="760" y1="218" x2="790" y2="335"><stop offset="0" stop-color="#c6abd4"/><stop offset="0.3" stop-color="#d1b9de"/><stop offset="0.7" stop-color="#cbb1d9"/><stop offset="1" stop-color="#c2a6d1"/></linearGradient><clipPath id="vpc"><rect x="636" y="43" width="248" height="505" rx="4"/></clipPath></defs><g clip-path="url(#vpc)"><rect x="636" y="43" width="248" height="505" fill="url(#skin)"/><path d="M630 256.2 L636 254.5 L697 235.5 L758 218.8 L819 201.25 L886 184.2 L890 183 L890 293.5 L886 294.3 L855 305 L817 318 L777 333.4 L730 350.6 L698.5 367.8 L667 393.5 L636 421 L630 427 Z" fill="url(#band)"/><path d="M890 292.9 L886 293.7 L855 304.4 L817 317.4 L777 332.79999999999995 L730 350.0 L698.5 367.2 L667 392.9 L636 420.4 L630 426.4" stroke="#ddcae4" stroke-width="1" fill="none" opacity="0.8"/><rect x="636.0" y="258.5" width="2.3" height="2.3" fill="#4e3e5a" opacity="0.2"/><rect x="638.3" y="256.2" width="2.3" height="2.3" fill="#5a4866" opacity="0.14"/><rect x="639.3" y="254.9" width="2.3" height="2.3" fill="#4e3e5a" opacity="0.1"/><rect x="641.6" y="257.2" width="2.3" height="2.3" fill="#5a4866" opacity="0.07"/><rect x="642.6" y="253.9" width="2.3" height="2.3" fill="#4e3e5a" opacity="0.1"/><rect x="644.9" y="251.6" width="2.3" height="2.3" fill="#5a4866" opacity="0.07"/><rect x="645.9" y="256.8" width="2.3" height="2.3" fill="#4e3e5a" opacity="0.45"/><rect x="648.2" y="254.5" width="2.3" height="2.3" fill="#5a4866" opacity="0.32"/><rect x="649.2" y="257.1" width="2.3" height="2.3" fill="#4e3e5a" opacity="0.45"/><rect x="651.5" y="259.4" width="2.3" height="2.3" fill="#5a4866" opacity="0.32"/><rect x="652.5" y="250.9" width="2.3" height="2.3" fill="#4e3e5a" opacity="0.2"/><rect x="655.8" y="255.1" width="2.3" height="2.3" fill="#4e3e5a" opacity="0.12"/><rect x="659.1" y="252.8" width="2.3" height="2.3" fill="#4e3e5a" opacity="0.12"/><rect x="662.4" y="247.9" width="2.3" height="2.3" fill="#4e3e5a" opacity="0.1"/><rect x="665.7" y="249.5" width="2.3" height="2.3" fill="#4e3e5a" opacity="0.45"/><rect x="668.0" y="247.2" width="2.3" height="2.3" fill="#5a4866" opacity="0.32"/><rect x="669.0" y="251.1" width="2.3" height="2.3" fill="#4e3e5a" opacity="0.3"/><rect x="672.3" y="246.2" width="2.3" height="2.3" fill="#4e3e5a" opacity="0.12"/><rect x="675.6" y="245.2" width="2.3" height="2.3" fill="#4e3e5a" opacity="0.3"/><rect x="677.9" y="247.5" width="2.3" height="2.3" fill="#5a4866" opacity="0.21"/><rect x="678.9" y="242.9" width="2.3" height="2.3" fill="#4e3e5a" opacity="0.1"/><rect x="681.2" y="240.6" width="2.3" height="2.3" fill="#5a4866" opacity="0.07"/><rect x="682.2" y="245.8" width="2.3" height="2.3" fill="#4e3e5a" opacity="0.18"/><rect x="685.5" y="243.5" width="2.3" height="2.3" fill="#4e3e5a" opacity="0.45"/><rect x="688.8" y="243.8" width="2.3" height="2.3" fill="#4e3e5a" opacity="0.3"/><rect x="691.1" y="241.5" width="2.3" height="2.3" fill="#5a4866" opacity="0.21"/><rect x="692.1" y="240.2" width="2.3" height="2.3" fill="#4e3e5a" opacity="0.12"/><rect x="695.4" y="243.1" width="2.3" height="2.3" fill="#4e3e5a" opacity="0.45"/><rect x="698.6" y="240.9" width="2.3" height="2.3" fill="#4e3e5a" opacity="0.3"/><rect x="701.9" y="236.1" width="2.3" height="2.3" fill="#4e3e5a" opacity="0.12"/><rect x="705.2" y="236.6" width="2.3" height="2.3" fill="#4e3e5a" opacity="0.3"/><rect x="707.5" y="236.6" width="2.3" height="2.3" fill="#5a4866" opacity="0.21"/><rect x="708.5" y="238.4" width="2.3" height="2.3" fill="#4e3e5a" opacity="0.12"/><rect x="711.8" y="233.6" width="2.3" height="2.3" fill="#4e3e5a" opacity="0.1"/><rect x="715.1" y="235.4" width="2.3" height="2.3" fill="#4e3e5a" opacity="0.3"/><rect x="718.4" y="237.2" width="2.3" height="2.3" fill="#4e3e5a" opacity="0.45"/><rect x="721.7" y="235.0" width="2.3" height="2.3" fill="#4e3e5a" opacity="0.12"/><rect x="725.0" y="232.9" width="2.3" height="2.3" fill="#4e3e5a" opacity="0.45"/><rect x="728.3" y="229.4" width="2.3" height="2.3" fill="#4e3e5a" opacity="0.12"/><rect x="731.6" y="231.2" width="2.3" height="2.3" fill="#4e3e5a" opacity="0.18"/><rect x="734.9" y="231.7" width="2.3" height="2.3" fill="#4e3e5a" opacity="0.3"/><rect x="738.2" y="229.5" width="2.3" height="2.3" fill="#4e3e5a" opacity="0.12"/><rect x="741.5" y="228.7" width="2.3" height="2.3" fill="#4e3e5a" opacity="0.2"/><rect x="744.8" y="229.2" width="2.3" height="2.3" fill="#4e3e5a" opacity="0.12"/><rect x="747.1" y="229.2" width="2.3" height="2.3" fill="#5a4866" opacity="0.08"/><rect x="748.1" y="225.7" width="2.3" height="2.3" fill="#4e3e5a" opacity="0.18"/><rect x="750.4" y="225.7" width="2.3" height="2.3" fill="#5a4866" opacity="0.13"/><rect x="751.4" y="227.5" width="2.3" height="2.3" fill="#4e3e5a" opacity="0.12"/><rect x="753.7" y="227.5" width="2.3" height="2.3" fill="#5a4866" opacity="0.08"/><rect x="754.7" y="227.9" width="2.3" height="2.3" fill="#4e3e5a" opacity="0.3"/><rect x="758.0" y="225.8" width="2.3" height="2.3" fill="#4e3e5a" opacity="0.1"/><rect x="760.3" y="225.8" width="2.3" height="2.3" fill="#5a4866" opacity="0.07"/><rect x="761.3" y="223.6" width="2.3" height="2.3" fill="#4e3e5a" opacity="0.18"/><rect x="764.6" y="221.3" width="2.3" height="2.3" fill="#4e3e5a" opacity="0.2"/><rect x="766.9" y="219.0" width="2.3" height="2.3" fill="#5a4866" opacity="0.14"/><rect x="767.9" y="220.4" width="2.3" height="2.3" fill="#4e3e5a" opacity="0.18"/><rect x="770.2" y="220.4" width="2.3" height="2.3" fill="#5a4866" opacity="0.13"/><rect x="771.2" y="223.3" width="2.3" height="2.3" fill="#4e3e5a" opacity="0.2"/><rect x="773.5" y="221.0" width="2.3" height="2.3" fill="#5a4866" opacity="0.14"/><rect x="774.5" y="218.5" width="2.3" height="2.3" fill="#4e3e5a" opacity="0.45"/><rect x="777.8" y="221.4" width="2.3" height="2.3" fill="#4e3e5a" opacity="0.1"/><rect x="780.1" y="219.1" width="2.3" height="2.3" fill="#5a4866" opacity="0.07"/><rect x="781.1" y="220.5" width="2.3" height="2.3" fill="#4e3e5a" opacity="0.1"/><rect x="784.4" y="214.3" width="2.3" height="2.3" fill="#4e3e5a" opacity="0.45"/><rect x="787.7" y="218.6" width="2.3" height="2.3" fill="#4e3e5a" opacity="0.45"/><rect x="790.0" y="218.6" width="2.3" height="2.3" fill="#5a4866" opacity="0.32"/><rect x="791.0" y="212.4" width="2.3" height="2.3" fill="#4e3e5a" opacity="0.45"/><rect x="794.3" y="211.5" width="2.3" height="2.3" fill="#4e3e5a" opacity="0.2"/><rect x="796.6" y="209.2" width="2.3" height="2.3" fill="#5a4866" opacity="0.14"/><rect x="797.6" y="214.4" width="2.3" height="2.3" fill="#4e3e5a" opacity="0.2"/><rect x="799.9" y="216.7" width="2.3" height="2.3" fill="#5a4866" opacity="0.14"/><rect x="800.9" y="209.6" width="2.3" height="2.3" fill="#4e3e5a" opacity="0.12"/><rect x="803.2" y="207.3" width="2.3" height="2.3" fill="#5a4866" opacity="0.08"/><rect x="804.2" y="213.9" width="2.3" height="2.3" fill="#4e3e5a" opacity="0.12"/><rect x="807.5" y="212.9" width="2.3" height="2.3" fill="#4e3e5a" opacity="0.12"/><rect x="809.8" y="210.6" width="2.3" height="2.3" fill="#5a4866" opacity="0.08"/><rect x="810.8" y="212.0" width="2.3" height="2.3" fill="#4e3e5a" opacity="0.45"/><rect x="813.1" y="212.0" width="2.3" height="2.3" fill="#5a4866" opacity="0.32"/><rect x="814.1" y="208.4" width="2.3" height="2.3" fill="#4e3e5a" opacity="0.1"/><rect x="816.4" y="206.1" width="2.3" height="2.3" fill="#5a4866" opacity="0.07"/><rect x="817.4" y="204.9" width="2.3" height="2.3" fill="#4e3e5a" opacity="0.45"/><rect x="820.8" y="207.8" width="2.3" height="2.3" fill="#4e3e5a" opacity="0.45"/><rect x="824.4" y="203.0" width="2.3" height="2.3" fill="#4e3e5a" opacity="0.2"/><rect x="826.7" y="203.0" width="2.3" height="2.3" fill="#5a4866" opacity="0.14"/><rect x="828.1" y="204.7" width="2.3" height="2.3" fill="#4e3e5a" opacity="0.45"/><rect x="831.7" y="202.5" width="2.3" height="2.3" fill="#4e3e5a" opacity="0.1"/><rect x="834.0" y="204.8" width="2.3" height="2.3" fill="#5a4866" opacity="0.07"/><rect x="835.3" y="202.9" width="2.3" height="2.3" fill="#4e3e5a" opacity="0.2"/><rect x="838.9" y="199.3" width="2.3" height="2.3" fill="#4e3e5a" opacity="0.1"/><rect x="841.2" y="201.6" width="2.3" height="2.3" fill="#5a4866" opacity="0.07"/><rect x="842.5" y="198.4" width="2.3" height="2.3" fill="#4e3e5a" opacity="0.18"/><rect x="846.2" y="202.7" width="2.3" height="2.3" fill="#4e3e5a" opacity="0.3"/><rect x="849.8" y="199.2" width="2.3" height="2.3" fill="#4e3e5a" opacity="0.2"/><rect x="853.4" y="200.9" width="2.3" height="2.3" fill="#4e3e5a" opacity="0.3"/><rect x="857.0" y="200.0" width="2.3" height="2.3" fill="#4e3e5a" opacity="0.2"/><rect x="860.6" y="197.7" width="2.3" height="2.3" fill="#4e3e5a" opacity="0.18"/><rect x="864.3" y="194.2" width="2.3" height="2.3" fill="#4e3e5a" opacity="0.1"/><rect x="867.9" y="192.0" width="2.3" height="2.3" fill="#4e3e5a" opacity="0.12"/><rect x="871.5" y="195.0" width="2.3" height="2.3" fill="#4e3e5a" opacity="0.3"/><rect x="873.8" y="197.3" width="2.3" height="2.3" fill="#5a4866" opacity="0.21"/><rect x="875.1" y="192.8" width="2.3" height="2.3" fill="#4e3e5a" opacity="0.45"/><rect x="878.8" y="191.8" width="2.3" height="2.3" fill="#4e3e5a" opacity="0.3"/><rect x="881.1" y="189.5" width="2.3" height="2.3" fill="#5a4866" opacity="0.21"/><rect x="882.4" y="189.6" width="2.3" height="2.3" fill="#4e3e5a" opacity="0.45"/><rect x="884.7" y="187.3" width="2.3" height="2.3" fill="#5a4866" opacity="0.32"/><rect x="886.0" y="191.3" width="2.3" height="2.3" fill="#4e3e5a" opacity="0.1"/><rect x="886.0" y="290.4" width="2.3" height="2.3" fill="#4e3e5a" opacity="0.12"/><rect x="883.1" y="288.8" width="2.3" height="2.3" fill="#4e3e5a" opacity="0.18"/><rect x="885.4" y="291.1" width="2.3" height="2.3" fill="#5a4866" opacity="0.13"/><rect x="880.1" y="287.2" width="2.3" height="2.3" fill="#4e3e5a" opacity="0.45"/><rect x="877.2" y="289.5" width="2.3" height="2.3" fill="#4e3e5a" opacity="0.45"/><rect x="874.3" y="293.1" width="2.3" height="2.3" fill="#4e3e5a" opacity="0.18"/><rect x="876.6" y="295.4" width="2.3" height="2.3" fill="#5a4866" opacity="0.13"/><rect x="871.3" y="294.2" width="2.3" height="2.3" fill="#4e3e5a" opacity="0.45"/><rect x="873.6" y="291.9" width="2.3" height="2.3" fill="#5a4866" opacity="0.32"/><rect x="868.4" y="292.6" width="2.3" height="2.3" fill="#4e3e5a" opacity="0.2"/><rect x="865.5" y="292.3" width="2.3" height="2.3" fill="#4e3e5a" opacity="0.2"/><rect x="862.5" y="297.2" width="2.3" height="2.3" fill="#4e3e5a" opacity="0.18"/><rect x="864.8" y="299.5" width="2.3" height="2.3" fill="#5a4866" opacity="0.13"/><rect x="859.6" y="298.2" width="2.3" height="2.3" fill="#4e3e5a" opacity="0.18"/><rect x="856.7" y="296.6" width="2.3" height="2.3" fill="#4e3e5a" opacity="0.1"/><rect x="853.5" y="296.4" width="2.3" height="2.3" fill="#4e3e5a" opacity="0.12"/><rect x="849.9" y="297.7" width="2.3" height="2.3" fill="#4e3e5a" opacity="0.1"/><rect x="846.3" y="300.2" width="2.3" height="2.3" fill="#4e3e5a" opacity="0.45"/><rect x="842.7" y="301.4" width="2.3" height="2.3" fill="#4e3e5a" opacity="0.2"/><rect x="845.0" y="299.1" width="2.3" height="2.3" fill="#5a4866" opacity="0.14"/><rect x="839.1" y="303.9" width="2.3" height="2.3" fill="#4e3e5a" opacity="0.1"/><rect x="841.4" y="306.2" width="2.3" height="2.3" fill="#5a4866" opacity="0.07"/><rect x="835.5" y="305.2" width="2.3" height="2.3" fill="#4e3e5a" opacity="0.3"/><rect x="831.9" y="305.1" width="2.3" height="2.3" fill="#4e3e5a" opacity="0.12"/><rect x="828.3" y="307.6" width="2.3" height="2.3" fill="#4e3e5a" opacity="0.45"/><rect x="824.7" y="311.5" width="2.3" height="2.3" fill="#4e3e5a" opacity="0.45"/><rect x="821.1" y="312.7" width="2.3" height="2.3" fill="#4e3e5a" opacity="0.2"/><rect x="817.5" y="313.9" width="2.3" height="2.3" fill="#4e3e5a" opacity="0.1"/><rect x="819.8" y="313.9" width="2.3" height="2.3" fill="#5a4866" opacity="0.07"/><rect x="813.8" y="311.4" width="2.3" height="2.3" fill="#4e3e5a" opacity="0.1"/><rect x="816.1" y="309.1" width="2.3" height="2.3" fill="#5a4866" opacity="0.07"/><rect x="810.0" y="312.9" width="2.3" height="2.3" fill="#4e3e5a" opacity="0.2"/><rect x="806.2" y="313.1" width="2.3" height="2.3" fill="#4e3e5a" opacity="0.1"/><rect x="808.5" y="315.4" width="2.3" height="2.3" fill="#5a4866" opacity="0.07"/><rect x="802.4" y="319.7" width="2.3" height="2.3" fill="#4e3e5a" opacity="0.1"/><rect x="798.6" y="316.0" width="2.3" height="2.3" fill="#4e3e5a" opacity="0.1"/><rect x="800.9" y="313.7" width="2.3" height="2.3" fill="#5a4866" opacity="0.07"/><rect x="794.8" y="320.0" width="2.3" height="2.3" fill="#4e3e5a" opacity="0.12"/><rect x="791.1" y="324.1" width="2.3" height="2.3" fill="#4e3e5a" opacity="0.45"/><rect x="787.3" y="320.3" width="2.3" height="2.3" fill="#4e3e5a" opacity="0.45"/><rect x="789.6" y="322.6" width="2.3" height="2.3" fill="#5a4866" opacity="0.32"/><rect x="783.5" y="327.0" width="2.3" height="2.3" fill="#4e3e5a" opacity="0.1"/><rect x="785.8" y="327.0" width="2.3" height="2.3" fill="#5a4866" opacity="0.07"/><rect x="779.7" y="327.2" width="2.3" height="2.3" fill="#4e3e5a" opacity="0.1"/><rect x="775.7" y="328.7" width="2.3" height="2.3" fill="#4e3e5a" opacity="0.1"/><rect x="771.3" y="331.6" width="2.3" height="2.3" fill="#4e3e5a" opacity="0.3"/><rect x="766.8" y="329.3" width="2.3" height="2.3" fill="#4e3e5a" opacity="0.45"/><rect x="769.1" y="327.0" width="2.3" height="2.3" fill="#5a4866" opacity="0.32"/><rect x="762.4" y="333.5" width="2.3" height="2.3" fill="#4e3e5a" opacity="0.45"/><rect x="764.7" y="335.8" width="2.3" height="2.3" fill="#5a4866" opacity="0.32"/><rect x="757.9" y="332.6" width="2.3" height="2.3" fill="#4e3e5a" opacity="0.45"/><rect x="760.2" y="334.9" width="2.3" height="2.3" fill="#5a4866" opacity="0.32"/><rect x="753.5" y="335.5" width="2.3" height="2.3" fill="#4e3e5a" opacity="0.12"/><rect x="749.1" y="335.8" width="2.3" height="2.3" fill="#4e3e5a" opacity="0.18"/><rect x="744.6" y="338.8" width="2.3" height="2.3" fill="#4e3e5a" opacity="0.2"/><rect x="746.9" y="336.5" width="2.3" height="2.3" fill="#5a4866" opacity="0.14"/><rect x="740.2" y="341.7" width="2.3" height="2.3" fill="#4e3e5a" opacity="0.2"/><rect x="735.7" y="339.4" width="2.3" height="2.3" fill="#4e3e5a" opacity="0.45"/><rect x="731.3" y="342.3" width="2.3" height="2.3" fill="#4e3e5a" opacity="0.18"/><rect x="727.9" y="344.0" width="2.3" height="2.3" fill="#4e3e5a" opacity="0.18"/><rect x="730.2" y="346.3" width="2.3" height="2.3" fill="#5a4866" opacity="0.13"/><rect x="724.9" y="348.2" width="2.3" height="2.3" fill="#4e3e5a" opacity="0.3"/><rect x="727.2" y="348.2" width="2.3" height="2.3" fill="#5a4866" opacity="0.21"/><rect x="721.9" y="348.5" width="2.3" height="2.3" fill="#4e3e5a" opacity="0.12"/><rect x="718.9" y="347.5" width="2.3" height="2.3" fill="#4e3e5a" opacity="0.3"/><rect x="716.0" y="353.1" width="2.3" height="2.3" fill="#4e3e5a" opacity="0.18"/><rect x="718.3" y="353.1" width="2.3" height="2.3" fill="#5a4866" opacity="0.13"/><rect x="713.0" y="356.0" width="2.3" height="2.3" fill="#4e3e5a" opacity="0.1"/><rect x="715.3" y="353.7" width="2.3" height="2.3" fill="#5a4866" opacity="0.07"/><rect x="710.0" y="352.4" width="2.3" height="2.3" fill="#4e3e5a" opacity="0.2"/><rect x="707.0" y="354.1" width="2.3" height="2.3" fill="#4e3e5a" opacity="0.12"/><rect x="709.3" y="351.8" width="2.3" height="2.3" fill="#5a4866" opacity="0.08"/><rect x="704.0" y="357.0" width="2.3" height="2.3" fill="#4e3e5a" opacity="0.3"/><rect x="701.1" y="361.2" width="2.3" height="2.3" fill="#4e3e5a" opacity="0.18"/><rect x="698.1" y="361.6" width="2.3" height="2.3" fill="#4e3e5a" opacity="0.45"/><rect x="700.4" y="363.9" width="2.3" height="2.3" fill="#5a4866" opacity="0.32"/><rect x="695.1" y="366.7" width="2.3" height="2.3" fill="#4e3e5a" opacity="0.45"/><rect x="692.1" y="363.9" width="2.3" height="2.3" fill="#4e3e5a" opacity="0.3"/><rect x="694.4" y="366.2" width="2.3" height="2.3" fill="#5a4866" opacity="0.21"/><rect x="689.1" y="367.6" width="2.3" height="2.3" fill="#4e3e5a" opacity="0.45"/><rect x="686.2" y="371.4" width="2.3" height="2.3" fill="#4e3e5a" opacity="0.12"/><rect x="683.2" y="373.8" width="2.3" height="2.3" fill="#4e3e5a" opacity="0.12"/><rect x="680.2" y="374.9" width="2.3" height="2.3" fill="#4e3e5a" opacity="0.12"/><rect x="682.5" y="372.6" width="2.3" height="2.3" fill="#5a4866" opacity="0.08"/><rect x="677.2" y="380.0" width="2.3" height="2.3" fill="#4e3e5a" opacity="0.12"/><rect x="679.5" y="382.3" width="2.3" height="2.3" fill="#5a4866" opacity="0.08"/><rect x="674.2" y="382.4" width="2.3" height="2.3" fill="#4e3e5a" opacity="0.3"/><rect x="671.3" y="380.9" width="2.3" height="2.3" fill="#4e3e5a" opacity="0.1"/><rect x="668.3" y="383.4" width="2.3" height="2.3" fill="#4e3e5a" opacity="0.2"/><rect x="670.6" y="381.1" width="2.3" height="2.3" fill="#5a4866" opacity="0.14"/><rect x="665.3" y="387.2" width="2.3" height="2.3" fill="#4e3e5a" opacity="0.3"/><rect x="662.4" y="393.7" width="2.3" height="2.3" fill="#4e3e5a" opacity="0.2"/><rect x="664.7" y="396.0" width="2.3" height="2.3" fill="#5a4866" opacity="0.14"/><rect x="659.5" y="392.4" width="2.3" height="2.3" fill="#4e3e5a" opacity="0.3"/><rect x="661.8" y="390.1" width="2.3" height="2.3" fill="#5a4866" opacity="0.21"/><rect x="656.5" y="396.3" width="2.3" height="2.3" fill="#4e3e5a" opacity="0.12"/><rect x="658.8" y="398.6" width="2.3" height="2.3" fill="#5a4866" opacity="0.08"/><rect x="653.6" y="401.5" width="2.3" height="2.3" fill="#4e3e5a" opacity="0.1"/><rect x="650.7" y="404.1" width="2.3" height="2.3" fill="#4e3e5a" opacity="0.45"/><rect x="653.0" y="404.1" width="2.3" height="2.3" fill="#5a4866" opacity="0.32"/><rect x="647.7" y="401.5" width="2.3" height="2.3" fill="#4e3e5a" opacity="0.18"/><rect x="644.8" y="408.0" width="2.3" height="2.3" fill="#4e3e5a" opacity="0.18"/><rect x="641.9" y="410.6" width="2.3" height="2.3" fill="#4e3e5a" opacity="0.1"/><rect x="644.2" y="408.3" width="2.3" height="2.3" fill="#5a4866" opacity="0.07"/><rect x="638.9" y="410.6" width="2.3" height="2.3" fill="#4e3e5a" opacity="0.3"/><rect x="641.2" y="412.9" width="2.3" height="2.3" fill="#5a4866" opacity="0.21"/><rect x="636.0" y="413.2" width="2.3" height="2.3" fill="#4e3e5a" opacity="0.45"/></g></svg>
<div style="position:absolute;left:636px;top:43px;width:248px;height:30px;background:rgba(40,36,34,0.62);border-radius:4px;border-bottom-left-radius:0;border-bottom-right-radius:0;"></div>
<div style="position:absolute;left:641px;top:45.7px;width:17px;height:10.5px;background:#2a2a2a;border-radius:3px;"></div>
<svg style="position:absolute;left:0px;top:0px;overflow:visible" width="1024" height="576" viewBox="0 0 1024 576"><path d="M643.5 54.5 H652 M645 51 V55.5 M650 51 V55.5 M643.5 51 H651" stroke="#ddd" stroke-width="0.8" fill="none"/><circle cx="650" cy="48.8" r="2.2" fill="#ddd"/><path d="M653.5 50.0 l1.5 1.5 l1.5 -1.5" stroke="#d0d0d0" stroke-width="0.8" fill="none"/></svg>
<div style="position:absolute;left:662.4px;top:45.7px;width:64.4px;height:10.5px;background:#2a2a2a;border-radius:3px;"></div>
<svg style="position:absolute;left:0px;top:0px;overflow:visible" width="1024" height="576" viewBox="0 0 1024 576"><rect x="667.5" y="48.3" width="5" height="5.5" fill="#e6e6e6"/><path d="M665.7 49.5 V47 H667.5 M672.5 47 H674.5 V49.5 M674.5 52.5 V55 H672.5 M667.5 55 H665.7 V52.5" stroke="#aaa" stroke-width="0.7" fill="none"/><path d="M721.0 50.0 l1.5 1.5 l1.5 -1.5" stroke="#d0d0d0" stroke-width="0.8" fill="none"/></svg>
<div style="position:absolute;left:677px;top:47.67px;font-size:7.0px;line-height:1;color:#e6e6e6;white-space:pre;font-weight:normal;">Object Mode</div>
<div style="position:absolute;left:734.4px;top:47.67px;font-size:7.0px;line-height:1;color:#c8c0bc;white-space:pre;font-weight:normal;">View</div>
<div style="position:absolute;left:758px;top:47.67px;font-size:7.0px;line-height:1;color:#c8c0bc;white-space:pre;font-weight:normal;">Select</div>
<div style="position:absolute;left:787.4px;top:47.67px;font-size:7.0px;line-height:1;color:#c8c0bc;white-space:pre;font-weight:normal;">Add</div>
<div style="position:absolute;left:808.6px;top:47.67px;font-size:7.0px;line-height:1;color:#c8c0bc;white-space:pre;font-weight:normal;">Object</div>
<div style="position:absolute;left:843px;top:45.7px;width:41px;height:10.5px;background:#2a2a2a;border-radius:3px;border-top-right-radius:0;border-bottom-right-radius:0;"></div>
<svg style="position:absolute;left:0px;top:0px;overflow:visible" width="1024" height="576" viewBox="0 0 1024 576"><path d="M846.5 47 V54.5 H854 M846.5 54.5 L851 50" stroke="#ddd" stroke-width="0.8" fill="none"/><circle cx="851.5" cy="49.5" r="1.2" fill="#ddd"/></svg>
<div style="position:absolute;left:858px;top:47.67px;font-size:7.0px;line-height:1;color:#e6e6e6;white-space:pre;font-weight:normal;">Global</div>
<svg style="position:absolute;left:0px;top:0px;overflow:visible" width="1024" height="576" viewBox="0 0 1024 576"><path d="M880.5 50.0 l1.5 1.5 l1.5 -1.5" stroke="#d0d0d0" stroke-width="0.8" fill="none"/></svg>
<svg style="position:absolute;left:0px;top:0px;overflow:visible" width="1024" height="576" viewBox="0 0 1024 576"><path d="M643 66.5 H655.5 M649.2 60.3 V72.7" stroke="#ddd" stroke-width="0.7"/><path d="M643 66.5 l2 -1.6 v3.2 z M655.5 66.5 l-2 -1.6 v3.2 z M649.2 60.3 l-1.6 2 h3.2 z M649.2 72.7 l-1.6 -2 h3.2 z" fill="#ddd"/></svg>
<div style="position:absolute;left:661px;top:63.37px;font-size:7.0px;line-height:1;color:#a8a09c;white-space:pre;font-weight:normal;">Orientation:</div>
<div style="position:absolute;left:700px;top:61px;width:56.8px;height:10.8px;background:#2a2a2a;border-radius:3px;"></div>
<svg style="position:absolute;left:0px;top:0px;overflow:visible" width="1024" height="576" viewBox="0 0 1024 576"><path d="M704 63 H709 V70 H704 Z M706.5 66.5 H712 M710.5 65 l1.5 1.5 l-1.5 1.5" stroke="#ccc" stroke-width="0.7" fill="none"/><path d="M751.5 65.7 l1.5 1.5 l1.5 -1.5" stroke="#d0d0d0" stroke-width="0.8" fill="none"/></svg>
<div style="position:absolute;left:714.9px;top:63.37px;font-size:7.0px;line-height:1;color:#e6e6e6;white-space:pre;font-weight:normal;">Normal</div>
<div style="position:absolute;left:763px;top:63.37px;font-size:7.0px;line-height:1;color:#a8a09c;white-space:pre;font-weight:normal;">Drag:</div>
<div style="position:absolute;left:785.4px;top:61px;width:47.1px;height:10.8px;background:#2a2a2a;border-radius:3px;"></div>
<div style="position:absolute;left:789px;top:63.37px;font-size:7.0px;line-height:1;color:#e6e6e6;white-space:pre;font-weight:normal;">Select Box</div>
<svg style="position:absolute;left:0px;top:0px;overflow:visible" width="1024" height="576" viewBox="0 0 1024 576"><path d="M827.3 65.7 l1.5 1.5 l1.5 -1.5" stroke="#d0d0d0" stroke-width="0.8" fill="none"/></svg>
<div style="position:absolute;left:842.3px;top:61px;width:37.7px;height:10.8px;background:#2a2a2a;border-radius:3px;"></div>
<div style="position:absolute;left:846.5px;top:63.37px;font-size:7.0px;line-height:1;color:#e6e6e6;white-space:pre;font-weight:normal;">Options</div>
<svg style="position:absolute;left:0px;top:0px;overflow:visible" width="1024" height="576" viewBox="0 0 1024 576"><path d="M874.5 65.7 l1.5 1.5 l1.5 -1.5" stroke="#d0d0d0" stroke-width="0.8" fill="none"/></svg>
<div style="position:absolute;left:641.4px;top:79.67px;font-size:7.0px;line-height:1;color:#ddd3cf;white-space:pre;font-weight:normal;text-shadow:0 0 1px #6e6460,0 0 1px #6e6460;">User Orthographic</div>
<div style="position:absolute;left:641.4px;top:90.67px;font-size:7.0px;line-height:1;color:#ddd3cf;white-space:pre;font-weight:normal;text-shadow:0 0 1px #6e6460,0 0 1px #6e6460;">(0) body | inner</div>
<div style="position:absolute;left:636px;top:82.6px;width:3.5px;height:8px;background:#b0a6a2;border-radius:1px;"></div>
<div style="position:absolute;left:881px;top:84px;width:2.5px;height:7px;background:#b0a8a4;border-radius:1px;"></div>
<div style="position:absolute;left:886px;top:43px;width:138px;height:15.5px;background:#303030;border-radius:4px;border-bottom-left-radius:0;border-bottom-right-radius:0;"></div>
<div style="position:absolute;left:890px;top:45.5px;width:16px;height:11px;background:#282828;border-radius:3px;"></div>
<svg style="position:absolute;left:0px;top:0px;overflow:visible" width="1024" height="576" viewBox="0 0 1024 576"><rect x="891.5" y="46.8" width="8" height="8" fill="none" stroke="#ddd" stroke-width="0.9"/><path d="M893 48.5 H898 M895.5 48.5 V53" stroke="#ddd" stroke-width="1.4"/><path d="M901.5 50.0 l1.5 1.5 l1.5 -1.5" stroke="#d0d0d0" stroke-width="0.8" fill="none"/></svg>
<div style="position:absolute;left:911.8px;top:45.5px;width:37.5px;height:11px;background:#282828;border-radius:3px;"></div>
<svg style="position:absolute;left:0px;top:0px;overflow:visible" width="1024" height="576" viewBox="0 0 1024 576"><rect x="914" y="47" width="8" height="8" fill="none" stroke="#ddd" stroke-width="0.9"/><path d="M914.5 55 L918 50.5 L921.5 55 Z" fill="#ddd"/><path d="M944.1 50.0 l1.5 1.5 l1.5 -1.5" stroke="#d0d0d0" stroke-width="0.8" fill="none"/></svg>
<div style="position:absolute;left:925.7px;top:48.07px;font-size:7.0px;line-height:1;color:#dedede;white-space:pre;font-weight:normal;">View</div>
<div style="position:absolute;left:958px;top:48.07px;font-size:7.0px;line-height:1;color:#d6d6d6;white-space:pre;font-weight:normal;">View</div>
<div style="position:absolute;left:982px;top:48.07px;font-size:7.0px;line-height:1;color:#d6d6d6;white-space:pre;font-weight:normal;">Image*</div>
<div style="position:absolute;left:1020px;top:45.5px;width:4px;height:11px;background:#282828;border-radius:2px;"></div>
<div style="position:absolute;left:886px;top:59.5px;width:138px;height:152.5px;background:#282828;border-radius:4px;"></div>
<div style="position:absolute;left:886px;top:59.5px;width:138px;height:14px;background:#303030;border-radius:4px;border-bottom-left-radius:0;border-bottom-right-radius:0;"></div>
<div style="position:absolute;left:891px;top:61.5px;width:16px;height:10.5px;background:#2a2a2a;border-radius:3px;"></div>
<svg style="position:absolute;left:0px;top:0px;overflow:visible" width="1024" height="576" viewBox="0 0 1024 576"><rect x="893.5" y="62.5" width="2.5" height="2" fill="#ddd"/><path d="M894.7 64.5 V70 H897" stroke="#ddd" stroke-width="0.8" fill="none"/><rect x="897" y="66" width="5" height="1.8" fill="#ddd"/><rect x="897" y="69" width="5" height="1.8" fill="#ddd"/><path d="M903.0 66.2 l1.5 1.5 l1.5 -1.5" stroke="#d0d0d0" stroke-width="0.8" fill="none"/></svg>
<div style="position:absolute;left:910px;top:61.5px;width:17px;height:10.5px;background:#2a2a2a;border-radius:3px;"></div>
<svg style="position:absolute;left:0px;top:0px;overflow:visible" width="1024" height="576" viewBox="0 0 1024 576"><rect x="912" y="63.5" width="7" height="7" fill="#555" stroke="#999" stroke-width="0.6"/><rect x="913.5" y="62.5" width="7" height="7" fill="#777" stroke="#ccc" stroke-width="0.6"/><path d="M914 69 L917 65.5 L920 69 Z" fill="#ddd"/><path d="M923.5 66.2 l1.5 1.5 l1.5 -1.5" stroke="#d0d0d0" stroke-width="0.8" fill="none"/></svg>
<div style="position:absolute;left:938.6px;top:62px;width:68.5px;height:10px;background:#1d1d1d;border-radius:3px;"></div>
<svg style="position:absolute;left:0px;top:0px;overflow:visible" width="1024" height="576" viewBox="0 0 1024 576"><circle cx="946" cy="66" r="2.6" fill="none" stroke="#ddd" stroke-width="0.8"/><path d="M944.2 67.8 L941.3 70.7" stroke="#ddd" stroke-width="1"/></svg>
<div style="position:absolute;left:953.5px;top:63.67px;font-size:7.0px;line-height:1;color:#6b6b6b;white-space:pre;font-weight:normal;">Search</div>
<svg style="position:absolute;left:0px;top:0px;overflow:visible" width="1024" height="576" viewBox="0 0 1024 576"><path d="M1017 63 H1024 M1017 63 L1020 67 V71 L1022 70 V67 L1024 64.5" stroke="#bbb" stroke-width="0.8" fill="none"/></svg>
<svg style="position:absolute;left:0px;top:0px;overflow:visible" width="1024" height="576" viewBox="0 0 1024 576"><path d="M903.5 73.5 V212 M914.5 83 V128 M914.5 140 V197" stroke="#3a3a3a" stroke-width="0.7"/></svg>
<svg style="position:absolute;left:0px;top:0px;overflow:visible" width="1024" height="576" viewBox="0 0 1024 576"><path d="M912.5 74.2 l1.8 1.8 l1.8 -1.8" stroke="#bbb" stroke-width="0.8" fill="none"/><rect x="922" y="73.5" width="8" height="2.2" fill="#e6e6e6"/><rect x="922.5" y="76.3" width="7" height="5" fill="#e6e6e6"/><rect x="924.8" y="77.5" width="2.4" height="1" fill="#333"/><rect x="985.4" y="72.0" width="7" height="7" rx="1" fill="#e6e6e6"/><path d="M986.9 75.5 l1.5 1.6 l2.7 -3.3" stroke="#2a2a2a" stroke-width="1" fill="none"/><path d="M997.3 74.8 Q1001.3 71.0 1005.3 74.8 Q1001.3 78.6 997.3 74.8 Z" fill="none" stroke="#e0e0e0" stroke-width="0.9"/><circle cx="1001.3" cy="74.8" r="1.5" fill="#e0e0e0"/><rect x="1008.8" y="73.0" width="8" height="6" rx="1" fill="none" stroke="#6a6a6a" stroke-width="0.8"/><rect x="1011.0" y="71.5" width="3.6" height="1.6" fill="#6a6a6a"/><circle cx="1012.8" cy="76.0" r="1.6" fill="none" stroke="#6a6a6a" stroke-width="0.6"/></svg>
<div style="position:absolute;left:933.5px;top:72.07px;font-size:7.0px;line-height:1;color:#d6d6d6;white-space:pre;font-weight:normal;">wear</div>
<div style="position:absolute;left:886px;top:73.5px;width:138px;height:1.8px;background:#303030;border-radius:0px;"></div>
<div style="position:absolute;left:945.7px;top:83.87px;font-size:7.0px;line-height:1;color:#d9d9d9;white-space:pre;font-weight:normal;">boots</div>
<div style="position:absolute;left:945.7px;top:95.57px;font-size:7.0px;line-height:1;color:#d9d9d9;white-space:pre;font-weight:normal;">boots_frill</div>
<div style="position:absolute;left:945.7px;top:107.07px;font-size:7.0px;line-height:1;color:#7b7b7b;white-space:pre;font-weight:normal;">Tops</div>
<div style="position:absolute;left:945.7px;top:118.87px;font-size:7.0px;line-height:1;color:#d9d9d9;white-space:pre;font-weight:normal;">udeno</div>
<div style="position:absolute;left:934px;top:130.07px;font-size:7.0px;line-height:1;color:#d9d9d9;white-space:pre;font-weight:normal;">wear2</div>
<div style="position:absolute;left:945.7px;top:142.07px;font-size:7.0px;line-height:1;color:#d9d9d9;white-space:pre;font-weight:normal;">acc</div>
<div style="position:absolute;left:945.7px;top:153.57px;font-size:7.0px;line-height:1;color:#d9d9d9;white-space:pre;font-weight:normal;">inner</div>
<div style="position:absolute;left:945.7px;top:165.17px;font-size:7.0px;line-height:1;color:#7b7b7b;white-space:pre;font-weight:normal;">skirt</div>
<div style="position:absolute;left:945.7px;top:176.77px;font-size:7.0px;line-height:1;color:#7b7b7b;white-space:pre;font-weight:normal;">skirt_frill</div>
<div style="position:absolute;left:945.7px;top:188.37px;font-size:7.0px;line-height:1;color:#7b7b7b;white-space:pre;font-weight:normal;">skirtA</div>
<div style="position:absolute;left:934px;top:200.07px;font-size:7.0px;line-height:1;color:#d9d9d9;white-space:pre;font-weight:normal;">body</div>
<svg style="position:absolute;left:0px;top:0px;overflow:visible" width="1024" height="576" viewBox="0 0 1024 576"><path d="M925.2 85.1 l2 2.2 l-2 2.2" stroke="#aaa" stroke-width="0.8" fill="none"/><path d="M933.8 83.39999999999999 H941.5999999999999 L937.6999999999999 91.58999999999999 Z" fill="none" stroke="#e5893a" stroke-width="1.3" stroke-linejoin="round"/><path d="M936.14 85.74 H939.26 L937.6999999999999 88.85999999999999 Z" fill="#e5893a" opacity="0.0"/><path d="M976.5 90.8 L980.5 86.8 M980.0 86.3 Q979.5 83.3 982.5 83.3 L981.3 84.8 L982.3 85.8 L983.5 84.5 Q983.5 87.8 980.5 87.3" fill="none" stroke="#5877b8" stroke-width="1"/><path d="M997.3 87.3 Q1001.3 83.5 1005.3 87.3 Q1001.3 91.1 997.3 87.3 Z" fill="none" stroke="#e0e0e0" stroke-width="0.9"/><circle cx="1001.3" cy="87.3" r="1.5" fill="#e0e0e0"/><rect x="1008.8" y="85.1" width="8" height="6" rx="1" fill="none" stroke="#6a6a6a" stroke-width="0.8"/><rect x="1011.0" y="83.6" width="3.6" height="1.6" fill="#6a6a6a"/><circle cx="1012.8" cy="88.1" r="1.6" fill="none" stroke="#6a6a6a" stroke-width="0.6"/><path d="M925.2 96.8 l2 2.2 l-2 2.2" stroke="#aaa" stroke-width="0.8" fill="none"/><path d="M933.8 95.1 H941.5999999999999 L937.6999999999999 103.28999999999999 Z" fill="none" stroke="#e5893a" stroke-width="1.3" stroke-linejoin="round"/><path d="M936.14 97.44 H939.26 L937.6999999999999 100.55999999999999 Z" fill="#e5893a" opacity="0.0"/><path d="M997.3 99.0 Q1001.3 95.2 1005.3 99.0 Q1001.3 102.8 997.3 99.0 Z" fill="none" stroke="#e0e0e0" stroke-width="0.9"/><circle cx="1001.3" cy="99.0" r="1.5" fill="#e0e0e0"/><rect x="1008.8" y="96.8" width="8" height="6" rx="1" fill="none" stroke="#6a6a6a" stroke-width="0.8"/><rect x="1011.0" y="95.3" width="3.6" height="1.6" fill="#6a6a6a"/><circle cx="1012.8" cy="99.8" r="1.6" fill="none" stroke="#6a6a6a" stroke-width="0.6"/><path d="M925.2 108.3 l2 2.2 l-2 2.2" stroke="#666" stroke-width="0.8" fill="none"/><path d="M933.8 106.6 H941.5999999999999 L937.6999999999999 114.78999999999999 Z" fill="none" stroke="#9a6a40" stroke-width="1.3" stroke-linejoin="round"/><path d="M936.14 108.94 H939.26 L937.6999999999999 112.05999999999999 Z" fill="#9a6a40" opacity="0.0"/><path d="M976.5 114.0 L980.5 110.0 M980.0 109.5 Q979.5 106.5 982.5 106.5 L981.3 108.0 L982.3 109.0 L983.5 107.7 Q983.5 111.0 980.5 110.5" fill="none" stroke="#50679a" stroke-width="1"/><path d="M997.3 110.0 Q1001.3 113.5 1005.3 110.0" fill="none" stroke="#a0a0a0" stroke-width="0.9"/><rect x="1008.8" y="108.3" width="8" height="6" rx="1" fill="none" stroke="#6a6a6a" stroke-width="0.8"/><rect x="1011.0" y="106.8" width="3.6" height="1.6" fill="#6a6a6a"/><circle cx="1012.8" cy="111.3" r="1.6" fill="none" stroke="#6a6a6a" stroke-width="0.6"/><path d="M925.2 120.1 l2 2.2 l-2 2.2" stroke="#aaa" stroke-width="0.8" fill="none"/><path d="M933.8 118.39999999999999 H941.5999999999999 L937.6999999999999 126.58999999999999 Z" fill="none" stroke="#e5893a" stroke-width="1.3" stroke-linejoin="round"/><path d="M936.14 120.74 H939.26 L937.6999999999999 123.85999999999999 Z" fill="#e5893a" opacity="0.0"/><path d="M976.5 125.8 L980.5 121.8 M980.0 121.3 Q979.5 118.3 982.5 118.3 L981.3 119.8 L982.3 120.8 L983.5 119.5 Q983.5 122.8 980.5 122.3" fill="none" stroke="#5877b8" stroke-width="1"/><path d="M997.3 122.3 Q1001.3 118.5 1005.3 122.3 Q1001.3 126.1 997.3 122.3 Z" fill="none" stroke="#e0e0e0" stroke-width="0.9"/><circle cx="1001.3" cy="122.3" r="1.5" fill="#e0e0e0"/><rect x="1008.8" y="120.1" width="8" height="6" rx="1" fill="none" stroke="#6a6a6a" stroke-width="0.8"/><rect x="1011.0" y="118.6" width="3.6" height="1.6" fill="#6a6a6a"/><circle cx="1012.8" cy="123.1" r="1.6" fill="none" stroke="#6a6a6a" stroke-width="0.6"/><path d="M912.5 132.5 l1.8 1.8 l1.8 -1.8" stroke="#bbb" stroke-width="0.8" fill="none"/><rect x="922" y="129.5" width="8" height="2.2" fill="#e6e6e6"/><rect x="922.5" y="132.3" width="7" height="5" fill="#e6e6e6"/><rect x="924.8" y="133.5" width="2.4" height="1" fill="#333"/><rect x="985.4" y="130.0" width="7" height="7" rx="1" fill="#e6e6e6"/><path d="M986.9 133.5 l1.5 1.6 l2.7 -3.3" stroke="#2a2a2a" stroke-width="1" fill="none"/><path d="M997.3 133.5 Q1001.3 129.7 1005.3 133.5 Q1001.3 137.3 997.3 133.5 Z" fill="none" stroke="#e0e0e0" stroke-width="0.9"/><circle cx="1001.3" cy="133.5" r="1.5" fill="#e0e0e0"/><rect x="1008.8" y="131.3" width="8" height="6" rx="1" fill="#d8d8d8" stroke="#d8d8d8" stroke-width="0.8"/><rect x="1011.0" y="129.8" width="3.6" height="1.6" fill="#d8d8d8"/><circle cx="1012.8" cy="134.3" r="1.6" fill="#2a2a2a" stroke="#2a2a2a" stroke-width="0.6"/><path d="M925.4 143.3 l2 2.2 l-2 2.2" stroke="#aaa" stroke-width="0.8" fill="none"/><rect x="934" y="141.5" width="8" height="2.2" fill="#e6e6e6"/><rect x="934.5" y="144.3" width="7" height="5" fill="#e6e6e6"/><rect x="936.8" y="145.5" width="2.4" height="1" fill="#333"/><path d="M971 141.6 H978.8 L974.9 149.79 Z" fill="none" stroke="#e5893a" stroke-width="1.3" stroke-linejoin="round"/><path d="M973.34 143.94 H976.46 L974.9 147.06 Z" fill="#e5893a" opacity="0.0"/><text x="977" y="150.3" font-size="5" fill="#ddd" font-family="Liberation Sans">10</text><rect x="985.4" y="142.0" width="7" height="7" rx="1" fill="#e6e6e6"/><path d="M986.9 145.5 l1.5 1.6 l2.7 -3.3" stroke="#2a2a2a" stroke-width="1" fill="none"/><path d="M997.3 145.5 Q1001.3 141.7 1005.3 145.5 Q1001.3 149.3 997.3 145.5 Z" fill="none" stroke="#e0e0e0" stroke-width="0.9"/><circle cx="1001.3" cy="145.5" r="1.5" fill="#e0e0e0"/><rect x="1008.8" y="143.3" width="8" height="6" rx="1" fill="#d8d8d8" stroke="#d8d8d8" stroke-width="0.8"/><rect x="1011.0" y="141.8" width="3.6" height="1.6" fill="#d8d8d8"/><circle cx="1012.8" cy="146.3" r="1.6" fill="#2a2a2a" stroke="#2a2a2a" stroke-width="0.6"/><path d="M925.4 154.8 l2 2.2 l-2 2.2" stroke="#aaa" stroke-width="0.8" fill="none"/><rect x="932" y="152.0" width="11" height="10" rx="2" fill="#4a4a4a"/><path d="M933.8 153.1 H941.5999999999999 L937.6999999999999 161.29 Z" fill="none" stroke="#e5893a" stroke-width="1.3" stroke-linejoin="round"/><path d="M936.14 155.44 H939.26 L937.6999999999999 158.56 Z" fill="#e5893a" opacity="0.0"/><path d="M975 160.5 L979 156.5 M978.5 156.0 Q978 153.0 981 153.0 L979.8 154.5 L980.8 155.5 L982 154.2 Q982 157.5 979 157.0" fill="none" stroke="#5877b8" stroke-width="1"/><path d="M997.3 157.0 Q1001.3 153.2 1005.3 157.0 Q1001.3 160.8 997.3 157.0 Z" fill="none" stroke="#e0e0e0" stroke-width="0.9"/><circle cx="1001.3" cy="157.0" r="1.5" fill="#e0e0e0"/><rect x="1008.8" y="154.8" width="8" height="6" rx="1" fill="#d8d8d8" stroke="#d8d8d8" stroke-width="0.8"/><rect x="1011.0" y="153.3" width="3.6" height="1.6" fill="#d8d8d8"/><circle cx="1012.8" cy="157.8" r="1.6" fill="#2a2a2a" stroke="#2a2a2a" stroke-width="0.6"/><path d="M925.4 166.4 l2 2.2 l-2 2.2" stroke="#666" stroke-width="0.8" fill="none"/><path d="M933.8 164.7 H941.5999999999999 L937.6999999999999 172.89 Z" fill="none" stroke="#9a6a40" stroke-width="1.3" stroke-linejoin="round"/><path d="M936.14 167.04 H939.26 L937.6999999999999 170.16 Z" fill="#9a6a40" opacity="0.0"/><path d="M973 172.1 L977 168.1 M976.5 167.6 Q976 164.6 979 164.6 L977.8 166.1 L978.8 167.1 L980 165.79999999999998 Q980 169.1 977 168.6" fill="none" stroke="#50679a" stroke-width="1"/><path d="M997.3 168.1 Q1001.3 171.6 1005.3 168.1" fill="none" stroke="#a0a0a0" stroke-width="0.9"/><rect x="1008.8" y="166.4" width="8" height="6" rx="1" fill="#d8d8d8" stroke="#d8d8d8" stroke-width="0.8"/><rect x="1011.0" y="164.9" width="3.6" height="1.6" fill="#d8d8d8"/><circle cx="1012.8" cy="169.4" r="1.6" fill="#2a2a2a" stroke="#2a2a2a" stroke-width="0.6"/><path d="M925.4 178.0 l2 2.2 l-2 2.2" stroke="#666" stroke-width="0.8" fill="none"/><path d="M933.8 176.29999999999998 H941.5999999999999 L937.6999999999999 184.48999999999998 Z" fill="none" stroke="#9a6a40" stroke-width="1.3" stroke-linejoin="round"/><path d="M936.14 178.64 H939.26 L937.6999999999999 181.76 Z" fill="#9a6a40" opacity="0.0"/><path d="M997.3 179.7 Q1001.3 183.2 1005.3 179.7" fill="none" stroke="#a0a0a0" stroke-width="0.9"/><rect x="1008.8" y="178.0" width="8" height="6" rx="1" fill="#d8d8d8" stroke="#d8d8d8" stroke-width="0.8"/><rect x="1011.0" y="176.5" width="3.6" height="1.6" fill="#d8d8d8"/><circle cx="1012.8" cy="181.0" r="1.6" fill="#2a2a2a" stroke="#2a2a2a" stroke-width="0.6"/><path d="M925.4 189.60000000000002 l2 2.2 l-2 2.2" stroke="#666" stroke-width="0.8" fill="none"/><path d="M933.8 187.9 H941.5999999999999 L937.6999999999999 196.09 Z" fill="none" stroke="#9a6a40" stroke-width="1.3" stroke-linejoin="round"/><path d="M936.14 190.24 H939.26 L937.6999999999999 193.36 Z" fill="#9a6a40" opacity="0.0"/><path d="M975 195.3 L979 191.3 M978.5 190.8 Q978 187.8 981 187.8 L979.8 189.3 L980.8 190.3 L982 189.0 Q982 192.3 979 191.8" fill="none" stroke="#50679a" stroke-width="1"/><path d="M997.3 191.3 Q1001.3 194.8 1005.3 191.3" fill="none" stroke="#a0a0a0" stroke-width="0.9"/><rect x="1008.8" y="189.60000000000002" width="8" height="6" rx="1" fill="#d8d8d8" stroke="#d8d8d8" stroke-width="0.8"/><rect x="1011.0" y="188.10000000000002" width="3.6" height="1.6" fill="#d8d8d8"/><circle cx="1012.8" cy="192.60000000000002" r="1.6" fill="#2a2a2a" stroke="#2a2a2a" stroke-width="0.6"/><path d="M913 201.3 l2 2.2 l-2 2.2" stroke="#aaa" stroke-width="0.8" fill="none"/><rect x="920" y="198.5" width="12" height="10" rx="2" fill="#4a4a4a"/><rect x="922" y="199.5" width="8" height="2.2" fill="#e6e6e6"/><rect x="922.5" y="202.3" width="7" height="5" fill="#e6e6e6"/><rect x="924.8" y="203.5" width="2.4" height="1" fill="#333"/><path d="M965 199.6 H972.8 L968.9 207.79 Z" fill="none" stroke="#e5893a" stroke-width="1.3" stroke-linejoin="round"/><path d="M967.34 201.94 H970.46 L968.9 205.06 Z" fill="#e5893a" opacity="0.0"/><text x="971" y="208.3" font-size="5" fill="#ddd" font-family="Liberation Sans">2</text><rect x="985.4" y="200.0" width="7" height="7" rx="1" fill="#e6e6e6"/><path d="M986.9 203.5 l1.5 1.6 l2.7 -3.3" stroke="#2a2a2a" stroke-width="1" fill="none"/><path d="M997.3 203.5 Q1001.3 199.7 1005.3 203.5 Q1001.3 207.3 997.3 203.5 Z" fill="none" stroke="#e0e0e0" stroke-width="0.9"/><circle cx="1001.3" cy="203.5" r="1.5" fill="#e0e0e0"/><rect x="1008.8" y="201.3" width="8" height="6" rx="1" fill="none" stroke="#6a6a6a" stroke-width="0.8"/><rect x="1011.0" y="199.8" width="3.6" height="1.6" fill="#6a6a6a"/><circle cx="1012.8" cy="204.3" r="1.6" fill="none" stroke="#6a6a6a" stroke-width="0.6"/><rect x="1021" y="76" width="1.8" height="130" rx="1" fill="#3a3a3a"/></svg>
<div style="position:absolute;left:886px;top:209px;width:138px;height:3px;background:#282828;border-radius:0px;"></div>
<svg style="position:absolute;left:0px;top:0px;overflow:visible" width="1024" height="576" viewBox="0 0 1024 576"><rect x="895" y="210" width="100" height="1" fill="#3c3c3c"/></svg>
<div style="position:absolute;left:886px;top:212.5px;width:138px;height:335.5px;background:#2b2b2b;border-radius:4px;"></div>
<div style="position:absolute;left:886px;top:212.5px;width:138px;height:15px;background:#303030;border-radius:4px;border-bottom-left-radius:0;border-bottom-right-radius:0;"></div>
<div style="position:absolute;left:886px;top:227.5px;width:17px;height:320.5px;background:#1f1f1f;border-radius:0px;border-bottom-left-radius:4px;"></div>
<div style="position:absolute;left:892px;top:214.8px;width:15px;height:11px;background:#2a2a2a;border-radius:3px;"></div>
<svg style="position:absolute;left:0px;top:0px;overflow:visible" width="1024" height="576" viewBox="0 0 1024 576"><rect x="893.5" y="216" width="8" height="3.5" rx="1.7" fill="#ddd"/><rect x="893.5" y="220.5" width="8" height="3.5" rx="1.7" fill="#ddd"/><circle cx="899.5" cy="217.7" r="1.2" fill="#333"/><circle cx="895.5" cy="222.2" r="1.2" fill="#333"/><path d="M903.0 219.2 l1.5 1.5 l1.5 -1.5" stroke="#d0d0d0" stroke-width="0.8" fill="none"/></svg>
<div style="position:absolute;left:922.8px;top:215.2px;width:68px;height:10.4px;background:#1d1d1d;border-radius:3px;"></div>
<svg style="position:absolute;left:0px;top:0px;overflow:visible" width="1024" height="576" viewBox="0 0 1024 576"><circle cx="930" cy="219.5" r="2.6" fill="none" stroke="#ddd" stroke-width="0.8"/><path d="M928.2 221.3 L925.3 224.2" stroke="#ddd" stroke-width="1"/></svg>
<div style="position:absolute;left:937.6px;top:217.27px;font-size:7.0px;line-height:1;color:#6b6b6b;white-space:pre;font-weight:normal;">Search</div>
<div style="position:absolute;left:1008px;top:215.2px;width:11px;height:10.4px;background:#1d1d1d;border-radius:3px;"></div>
<svg style="position:absolute;left:0px;top:0px;overflow:visible" width="1024" height="576" viewBox="0 0 1024 576"><path d="M1012.0 219.7 l1.5 1.5 l1.5 -1.5" stroke="#ccc" stroke-width="0.8" fill="none"/></svg>
<svg style="position:absolute;left:0px;top:0px;overflow:visible" width="1024" height="576" viewBox="0 0 1024 576"><path d="M892 244 V238 M891 236.5 h2 M897.5 244 V238 Q895.5 237 896 235.5 M897.5 238 Q899.5 237 899 235.5" stroke="#ddd" stroke-width="1" fill="none"/><rect x="891" y="257" width="9" height="6.5" fill="none" stroke="#ddd" stroke-width="0.9"/><path d="M892 257 l1.5 -2 M895 257 l1.5 -2" stroke="#ddd" stroke-width="0.9"/><rect x="891" y="274" width="9" height="3" fill="#ddd"/><rect x="892.5" y="277.5" width="6" height="4" fill="none" stroke="#ddd" stroke-width="0.8"/><rect x="891.5" y="291" width="7" height="6" fill="#666"/><rect x="893" y="289" width="7" height="6" fill="#aaa" stroke="#ddd" stroke-width="0.5"/><path d="M893.5 295 L896.5 291.5 L899.5 295 Z" fill="#ddd"/><path d="M891 311 L893.5 305 L896 311 Z" fill="#ddd"/><circle cx="897" cy="310.5" r="2.4" fill="none" stroke="#ddd" stroke-width="0.8"/><circle cx="898.5" cy="305.5" r="1" fill="#ddd"/><circle cx="895" cy="325" r="4.3" fill="#c74a4a"/><path d="M891.5 323 Q894 325 896 322 Q898 326 899 324 M892.5 328 Q895 326 898 328" stroke="#2b2b2b" stroke-width="0.9" fill="none"/><rect x="891" y="341" width="9" height="2.5" fill="#ddd"/><rect x="891.5" y="344" width="8" height="5.5" fill="none" stroke="#ddd" stroke-width="0.9"/><rect x="894" y="345.5" width="3" height="1.2" fill="#ddd"/><rect x="892" y="362" width="7" height="7" fill="#e5893a"/><path d="M890.5 364 V360.5 H893 M898 360.5 H900.5 V364 M900.5 367 V370.5 H898 M893 370.5 H890.5 V367" stroke="#7a5030" stroke-width="0.7" fill="none"/><path d="M891 386.5 L896 381.5 M895.5 381 Q895 378 898 378 L897 379.5 L898 380.5 L899.5 379.5 Q899.5 382.5 896.5 382" stroke="#5f8ad6" stroke-width="1.2" fill="none"/><path d="M891.5 395 L898.5 401.5 M891.5 395 V402.5" stroke="#6f8fd0" stroke-width="0.9"/><circle cx="891.5" cy="395" r="1.2" fill="#8ab0f0"/><circle cx="898.5" cy="401.5" r="1.2" fill="#8ab0f0"/><circle cx="891.5" cy="402.5" r="1.2" fill="#8ab0f0"/><circle cx="898.5" cy="395" r="1" fill="#8ab0f0"/><circle cx="895" cy="414" r="3.8" fill="none" stroke="#6f8fd0" stroke-width="1.1"/><circle cx="895" cy="414" r="1.6" fill="#ddd"/><circle cx="893.5" cy="431" r="3" fill="none" stroke="#6f8fd0" stroke-width="1.1"/><circle cx="896.5" cy="429" r="3" fill="none" stroke="#6f8fd0" stroke-width="1.1"/><rect x="887.5" y="438.5" width="15" height="15" rx="2.5" fill="#2b2b2b"/><path d="M891 442 H899 L895 450 Z" fill="none" stroke="#3fc78b" stroke-width="1.2"/><circle cx="891" cy="442" r="1.1" fill="#3fc78b"/><circle cx="899" cy="442" r="1.1" fill="#3fc78b"/><circle cx="895" cy="450" r="1.1" fill="#3fc78b"/><circle cx="895" cy="461.5" r="4.2" fill="#d05050"/><path d="M895 457.3 A4.2 4.2 0 0 1 899.2 461.5 H895 Z M895 461.5 L892 464.6 A4.2 4.2 0 0 1 890.8 461.5 Z" fill="#2b2b2b"/></svg>
<svg style="position:absolute;left:0px;top:0px;overflow:visible" width="1024" height="576" viewBox="0 0 1024 576"><rect x="910.5" y="236.5" width="5.4" height="5.4" fill="#e6e6e6"/><path d="M908.7 238.5 V234.7 H911 M915.5 234.7 H917.8 V238.5 M917.8 240 V243.2 H915.5 M911 243.2 H908.7 V240" stroke="#999" stroke-width="0.7" fill="none"/><path d="M944.3 236.3 l2.4 2.5 l-2.4 2.5" stroke="#ccc" stroke-width="0.9" fill="none"/><path d="M954 235 H962 L958 242 Z" fill="none" stroke="#ddd" stroke-width="0.9"/><circle cx="954" cy="235" r="1.2" fill="#ddd"/><circle cx="962" cy="235" r="1.2" fill="#ddd"/><circle cx="958" cy="242.5" r="1.2" fill="#ddd"/><path d="M1010 243 l3 -3 M1012 235.8 l4.5 4.5 M1014.7 234.8 l-2.8 2.8 l3.3 3.3 l2.8 -2.8 z" stroke="#aaa" stroke-width="0.8" fill="none"/></svg>
<div style="position:absolute;left:923px;top:235.37px;font-size:7.0px;line-height:1;color:#dcdcdc;white-space:pre;font-weight:normal;">inner</div>
<div style="position:absolute;left:967.6px;top:235.37px;font-size:7.0px;line-height:1;color:#dcdcdc;white-space:pre;font-weight:normal;">Plane.007</div>
<div style="position:absolute;left:908.7px;top:254.1px;width:16.5px;height:11.1px;background:#2a2a2a;border-radius:3px;border-top-right-radius:0;border-bottom-right-radius:0;"></div>
<svg style="position:absolute;left:0px;top:0px;overflow:visible" width="1024" height="576" viewBox="0 0 1024 576"><path d="M910.5 256 H917.5 L914 262.5 Z" fill="none" stroke="#ddd" stroke-width="0.9"/><circle cx="910.5" cy="256" r="1.1" fill="#ddd"/><circle cx="917.5" cy="256" r="1.1" fill="#ddd"/><circle cx="914" cy="262.7" r="1.1" fill="#ddd"/><path d="M920.5 259.2 l1.5 1.5 l1.5 -1.5" stroke="#d0d0d0" stroke-width="0.8" fill="none"/></svg>
<div style="position:absolute;left:925.2px;top:254.1px;width:81.7px;height:11.1px;background:#1d1d1d;border-radius:0px;"></div>
<div style="position:absolute;left:930.5px;top:256.27px;font-size:7.0px;line-height:1;color:#e6e6e6;white-space:pre;font-weight:normal;">Plane.007</div>
<div style="position:absolute;left:1006.9px;top:254.1px;width:12px;height:11.1px;background:#4a4a4a;border-radius:3px;border-top-left-radius:0;border-bottom-left-radius:0;"></div>
<svg style="position:absolute;left:0px;top:0px;overflow:visible" width="1024" height="576" viewBox="0 0 1024 576"><path d="M1009.5 256.3 L1012.9 255.3 L1016.3 256.3 V259.5 Q1016.3 262.5 1012.9 264 Q1009.5 262.5 1009.5 259.5 Z" fill="none" stroke="#aaa" stroke-width="0.8"/></svg>
<div style="position:absolute;left:907px;top:271px;width:112px;height:92.4px;background:#333333;border-radius:4px;"></div>
<svg style="position:absolute;left:0px;top:0px;overflow:visible" width="1024" height="576" viewBox="0 0 1024 576"><path d="M912 277.4 l2.5 2.5 l2.5 -2.5" stroke="#ddd" stroke-width="0.9" fill="none"/><path d="M1009 277.9 h2 M1012 277.9 h2 M1009 279.7 h2 M1012 279.7 h2" stroke="#555" stroke-width="0.8"/></svg>
<div style="position:absolute;left:919.5px;top:275.57px;font-size:7.0px;line-height:1;color:#e0e0e0;white-space:pre;font-weight:normal;">Vertex Groups</div>
<div style="position:absolute;left:912.7px;top:291.3px;width:84.2px;height:67.7px;background:#262626;border-radius:3px;"></div>
<div style="position:absolute;left:933.2px;top:295.67px;font-size:7.0px;line-height:1;color:#e0e0e0;white-space:pre;font-weight:normal;">Chest</div>
<div style="position:absolute;left:933.2px;top:307.27px;font-size:7.0px;line-height:1;color:#e0e0e0;white-space:pre;font-weight:normal;">Hips</div>
<div style="position:absolute;left:933.2px;top:318.87px;font-size:7.0px;line-height:1;color:#e0e0e0;white-space:pre;font-weight:normal;">Hips.C.L</div>
<div style="position:absolute;left:933.2px;top:330.27px;font-size:7.0px;line-height:1;color:#e0e0e0;white-space:pre;font-weight:normal;">Hips.C.R</div>
<div style="position:absolute;left:933.2px;top:342.17px;font-size:7.0px;line-height:1;color:#e0e0e0;white-space:pre;font-weight:normal;">Spine</div>
<svg style="position:absolute;left:0px;top:0px;overflow:visible" width="1024" height="576" viewBox="0 0 1024 576"><g fill="#ddd"><circle cx="921.5" cy="296.6" r="1.1"/><circle cx="921.5" cy="299.1" r="1.1"/><circle cx="921.5" cy="301.6" r="1.1"/><circle cx="924.3" cy="295.6" r="1.2"/><circle cx="924.3" cy="298.3" r="1.2"/><circle cx="924.3" cy="301.0" r="1.2"/><circle cx="924.3" cy="303.1" r="1"/><circle cx="927" cy="297.5" r="1"/><circle cx="927" cy="300.3" r="1"/></g><path d="M971.5 299.1 V297.1 Q971.5 295.6 973.2 295.6 Q975 295.6 975 297.1" fill="none" stroke="#ccc" stroke-width="0.7"/><rect x="974" y="298.8" width="5.5" height="4" rx="0.6" fill="none" stroke="#ccc" stroke-width="0.7"/><g fill="#ddd"><circle cx="921.5" cy="308.2" r="1.1"/><circle cx="921.5" cy="310.7" r="1.1"/><circle cx="921.5" cy="313.2" r="1.1"/><circle cx="924.3" cy="307.2" r="1.2"/><circle cx="924.3" cy="309.9" r="1.2"/><circle cx="924.3" cy="312.59999999999997" r="1.2"/><circle cx="924.3" cy="314.7" r="1"/><circle cx="927" cy="309.09999999999997" r="1"/><circle cx="927" cy="311.9" r="1"/></g><path d="M971.5 310.7 V308.7 Q971.5 307.2 973.2 307.2 Q975 307.2 975 308.7" fill="none" stroke="#ccc" stroke-width="0.7"/><rect x="974" y="310.4" width="5.5" height="4" rx="0.6" fill="none" stroke="#ccc" stroke-width="0.7"/><g fill="#ddd"><circle cx="921.5" cy="319.8" r="1.1"/><circle cx="921.5" cy="322.3" r="1.1"/><circle cx="921.5" cy="324.8" r="1.1"/><circle cx="924.3" cy="318.8" r="1.2"/><circle cx="924.3" cy="321.5" r="1.2"/><circle cx="924.3" cy="324.2" r="1.2"/><circle cx="924.3" cy="326.3" r="1"/><circle cx="927" cy="320.7" r="1"/><circle cx="927" cy="323.5" r="1"/></g><path d="M971.5 322.3 V320.3 Q971.5 318.8 973.2 318.8 Q975 318.8 975 320.3" fill="none" stroke="#ccc" stroke-width="0.7"/><rect x="974" y="322.0" width="5.5" height="4" rx="0.6" fill="none" stroke="#ccc" stroke-width="0.7"/><g fill="#ddd"><circle cx="921.5" cy="331.2" r="1.1"/><circle cx="921.5" cy="333.7" r="1.1"/><circle cx="921.5" cy="336.2" r="1.1"/><circle cx="924.3" cy="330.2" r="1.2"/><circle cx="924.3" cy="332.9" r="1.2"/><circle cx="924.3" cy="335.59999999999997" r="1.2"/><circle cx="924.3" cy="337.7" r="1"/><circle cx="927" cy="332.09999999999997" r="1"/><circle cx="927" cy="334.9" r="1"/></g><path d="M971.5 333.7 V331.7 Q971.5 330.2 973.2 330.2 Q975 330.2 975 331.7" fill="none" stroke="#ccc" stroke-width="0.7"/><rect x="974" y="333.4" width="5.5" height="4" rx="0.6" fill="none" stroke="#ccc" stroke-width="0.7"/><g fill="#ddd"><circle cx="921.5" cy="343.1" r="1.1"/><circle cx="921.5" cy="345.6" r="1.1"/><circle cx="921.5" cy="348.1" r="1.1"/><circle cx="924.3" cy="342.1" r="1.2"/><circle cx="924.3" cy="344.8" r="1.2"/><circle cx="924.3" cy="347.5" r="1.2"/><circle cx="924.3" cy="349.6" r="1"/><circle cx="927" cy="344.0" r="1"/><circle cx="927" cy="346.8" r="1"/></g><path d="M971.5 345.6 V343.6 Q971.5 342.1 973.2 342.1 Q975 342.1 975 343.6" fill="none" stroke="#ccc" stroke-width="0.7"/><rect x="974" y="345.3" width="5.5" height="4" rx="0.6" fill="none" stroke="#ccc" stroke-width="0.7"/><rect x="989.6" y="293.9" width="4.7" height="35.6" rx="2.3" fill="#4a4a4a"/><rect x="990.2" y="329.5" width="3.5" height="25" rx="1.7" fill="none" stroke="#303030" stroke-width="0.5"/><path d="M919 352.5 L922 354.2 L919 356 Z" fill="#ccc"/><path d="M958.5 352.5 v3.5 M960 352.5 v3.5 M961.5 352.5 v3.5 M963 352.5 v3.5" stroke="#888" stroke-width="0.6"/></svg>
<div style="position:absolute;left:1003px;top:291.3px;width:10.4px;height:10.8px;background:#4a4a4a;border-radius:2.5px;border-bottom-left-radius:0;border-bottom-right-radius:0;"></div>
<div style="position:absolute;left:1003px;top:302.3px;width:10.4px;height:10.8px;background:#4a4a4a;border-radius:2.5px;border-top-left-radius:0;border-top-right-radius:0;"></div>
<svg style="position:absolute;left:0px;top:0px;overflow:visible" width="1024" height="576" viewBox="0 0 1024 576"><path d="M1005.2 296.7 h6 M1008.2 293.7 v6" stroke="#ddd" stroke-width="0.9"/><path d="M1005.2 307.7 h6" stroke="#ddd" stroke-width="0.9"/></svg>
<div style="position:absolute;left:1003px;top:317.3px;width:10.4px;height:10.5px;background:#1f1f1f;border-radius:2.5px;"></div>
<svg style="position:absolute;left:0px;top:0px;overflow:visible" width="1024" height="576" viewBox="0 0 1024 576"><path d="M1006.7 321.7 l1.5 1.5 l1.5 -1.5" stroke="#ddd" stroke-width="0.9" fill="none"/></svg>
<div style="position:absolute;left:1003px;top:332.1px;width:10.4px;height:10.8px;background:#4a4a4a;border-radius:2.5px;border-bottom-left-radius:0;border-bottom-right-radius:0;"></div>
<div style="position:absolute;left:1003px;top:343.1px;width:10.4px;height:10.8px;background:#4a4a4a;border-radius:2.5px;border-top-left-radius:0;border-top-right-radius:0;"></div>
<svg style="position:absolute;left:0px;top:0px;overflow:visible" width="1024" height="576" viewBox="0 0 1024 576"><path d="M1005.2 339.3 L1008.2 335.7 L1011.2 339.3 Z" fill="#ddd"/><path d="M1005.2 346.7 L1008.2 350.3 L1011.2 346.7 Z" fill="#ddd"/></svg>
<div style="position:absolute;left:907px;top:366px;width:112px;height:82px;background:#333333;border-radius:4px;"></div>
<svg style="position:absolute;left:0px;top:0px;overflow:visible" width="1024" height="576" viewBox="0 0 1024 576"><path d="M912 371.8 l2.5 2.5 l2.5 -2.5" stroke="#ddd" stroke-width="0.9" fill="none"/><path d="M1009 372.3 h2 M1012 372.3 h2 M1009 374.1 h2 M1012 374.1 h2" stroke="#555" stroke-width="0.8"/></svg>
<div style="position:absolute;left:919.5px;top:369.97px;font-size:7.0px;line-height:1;color:#e0e0e0;white-space:pre;font-weight:normal;">Shape Keys</div>
<div style="position:absolute;left:912.6px;top:385px;width:84.4px;height:45px;background:#262626;border-radius:3px;"></div>
<svg style="position:absolute;left:0px;top:0px;overflow:visible" width="1024" height="576" viewBox="0 0 1024 576"><path d="M919 423 L922 424.7 L919 426.5 Z" fill="#ccc"/><path d="M958.5 423 v3.5 M960 423 v3.5 M961.5 423 v3.5 M963 423 v3.5" stroke="#888" stroke-width="0.6"/></svg>
<div style="position:absolute;left:1003px;top:385.5px;width:10.4px;height:10.8px;background:#4a4a4a;border-radius:2.5px;border-bottom-left-radius:0;border-bottom-right-radius:0;"></div>
<div style="position:absolute;left:1003px;top:396.5px;width:10.4px;height:10.8px;background:#4a4a4a;border-radius:2.5px;border-top-left-radius:0;border-top-right-radius:0;"></div>
<svg style="position:absolute;left:0px;top:0px;overflow:visible" width="1024" height="576" viewBox="0 0 1024 576"><path d="M1005.2 390.9 h6 M1008.2 387.9 v6" stroke="#ddd" stroke-width="0.9"/><path d="M1005.2 401.9 h6" stroke="#6a6a6a" stroke-width="0.9"/></svg>
<div style="position:absolute;left:1003px;top:412.5px;width:10.4px;height:10px;background:#1f1f1f;border-radius:2.5px;"></div>
<svg style="position:absolute;left:0px;top:0px;overflow:visible" width="1024" height="576" viewBox="0 0 1024 576"><path d="M1006.7 416.7 l1.5 1.5 l1.5 -1.5" stroke="#ddd" stroke-width="0.9" fill="none"/></svg>
<div style="position:absolute;left:913px;top:435.5px;width:7px;height:7px;background:#4a4a4a;border-radius:1.5px;"></div>
<div style="position:absolute;left:922px;top:435.67px;font-size:7.0px;line-height:1;color:#e0e0e0;white-space:pre;font-weight:normal;">Add Rest Position</div>
<div style="position:absolute;left:907px;top:451.9px;width:112px;height:100px;background:#333333;border-radius:4px;"></div>
<svg style="position:absolute;left:0px;top:0px;overflow:visible" width="1024" height="576" viewBox="0 0 1024 576"><path d="M912 456.7 l2.5 2.5 l2.5 -2.5" stroke="#ddd" stroke-width="0.9" fill="none"/><path d="M1009 457.2 h2 M1012 457.2 h2 M1009 459.0 h2 M1012 459.0 h2" stroke="#555" stroke-width="0.8"/></svg>
<div style="position:absolute;left:919.5px;top:454.87px;font-size:7.0px;line-height:1;color:#e0e0e0;white-space:pre;font-weight:normal;">UV Maps</div>
<div style="position:absolute;left:912.6px;top:470.6px;width:84.4px;height:77.4px;background:#262626;border-radius:3px;"></div>
<div style="position:absolute;left:914.9px;top:484.9px;width:79.5px;height:10.3px;background:#4772b3;border-radius:2px;"></div>
<div style="position:absolute;left:933px;top:474.57px;font-size:7.0px;line-height:1;color:#e0e0e0;white-space:pre;font-weight:normal;">UVMap.001</div>
<div style="position:absolute;left:933px;top:486.57px;font-size:7.0px;line-height:1;color:#ffffff;white-space:pre;font-weight:normal;">UVMap</div>
<svg style="position:absolute;left:0px;top:0px;overflow:visible" width="1024" height="576" viewBox="0 0 1024 576"><rect x="921" y="474.2" width="7.2" height="7.2" fill="none" stroke="#ddd" stroke-width="0.9"/><rect x="920" y="473.2" width="2.2" height="2.2" fill="#ddd"/><rect x="927" y="480.6" width="2.2" height="2.2" fill="#ddd"/><rect x="920" y="480.6" width="2.2" height="2.2" fill="#ddd"/><rect x="982" y="475.5" width="8" height="6" rx="1" fill="none" stroke="#ccc" stroke-width="0.8"/><rect x="984.2" y="474" width="3.6" height="1.6" fill="#ccc"/><circle cx="986" cy="478.5" r="1.4" fill="none" stroke="#ccc" stroke-width="0.6"/><rect x="921" y="486.2" width="7.2" height="7.2" fill="none" stroke="#ddd" stroke-width="0.9"/><rect x="920" y="485.2" width="2.2" height="2.2" fill="#ddd"/><rect x="927" y="492.6" width="2.2" height="2.2" fill="#ddd"/><rect x="920" y="492.6" width="2.2" height="2.2" fill="#ddd"/><rect x="982" y="487.5" width="8" height="6" rx="1" fill="#e6e6e6" stroke="#e6e6e6" stroke-width="0.8"/><rect x="984.2" y="486" width="3.6" height="1.6" fill="#e6e6e6"/><circle cx="986" cy="490.5" r="1.6" fill="#2a2a2a" stroke="#2a2a2a" stroke-width="0.6"/><path d="M919 543 L922 544.7 L919 546.5 Z" fill="#ccc"/><path d="M958.5 543 v3.5 M960 543 v3.5 M961.5 543 v3.5 M963 543 v3.5" stroke="#888" stroke-width="0.6"/></svg>
<div style="position:absolute;left:1003px;top:471.4px;width:10.4px;height:10.8px;background:#4a4a4a;border-radius:2.5px;border-bottom-left-radius:0;border-bottom-right-radius:0;"></div>
<div style="position:absolute;left:1003px;top:482.4px;width:10.4px;height:10.8px;background:#4a4a4a;border-radius:2.5px;border-top-left-radius:0;border-top-right-radius:0;"></div>
<svg style="position:absolute;left:0px;top:0px;overflow:visible" width="1024" height="576" viewBox="0 0 1024 576"><path d="M1005.2 476.79999999999995 h6 M1008.2 473.79999999999995 v6" stroke="#ddd" stroke-width="0.9"/><path d="M1005.2 487.79999999999995 h6" stroke="#ddd" stroke-width="0.9"/></svg>
<div style="position:absolute;left:1020px;top:232px;width:1.8px;height:300px;background:#3a3a3a;border-radius:1px;"></div>
<div style="position:absolute;left:64px;top:442.5px;width:118.5px;height:12.2px;background:transparent;border-radius:2px;border:1px solid #7c9ca3;"></div>
<svg style="position:absolute;left:0px;top:0px;overflow:visible" width="1024" height="576" viewBox="0 0 1024 576"><path d="M350 534.5 Q330 552 288 554.3 Q240 552 206.6 530.2 Q170 500 152 478 Q140 465 133.5 457.5" fill="none" stroke="#8fb1b9" stroke-width="2.3" stroke-linecap="round"/><path d="M349 535.5 Q329 553.5 288 555.5 Q239 553 205.8 531.2 Q169 501 151 479 Q139.5 466 133 458" fill="none" stroke="#8fb1b9" stroke-width="1.2" stroke-linecap="round" opacity="0.7" transform="translate(0.4,0.3)"/><path d="M351 533.5 Q331 551 288.5 553.2 Q241 551 207.5 529.4 Q171 499 153 477 Q141 464 134 457" fill="none" stroke="#b5cdd3" stroke-width="0.8" stroke-linecap="round" opacity="0.5"/><path d="M133.5 457.5 Q141 472 132.5 491" fill="none" stroke="#8fb1b9" stroke-width="2.2" stroke-linecap="round"/><path d="M134 458 Q150 466 171 473" fill="none" stroke="#8fb1b9" stroke-width="1.6" stroke-linecap="round"/><polyline points="443.0 200.2 466.2 199.3" fill="none" stroke="#8fb1b9" stroke-width="2.1" stroke-linecap="round" stroke-linejoin="round"/><polyline points="438.9 207.6 439.3 219.3 466.7 219.7" fill="none" stroke="#8fb1b9" stroke-width="2.1" stroke-linecap="round" stroke-linejoin="round"/><polyline points="466.7 206.3 466.4 219.3" fill="none" stroke="#8fb1b9" stroke-width="2.1" stroke-linecap="round" stroke-linejoin="round"/><polyline points="444.8 205.2 461.2 204.8 461.2 216.0 445.2 216.0 444.8 205.2" fill="none" stroke="#8fb1b9" stroke-width="2.1" stroke-linecap="round" stroke-linejoin="round"/><polyline points="453.0 205.2 453.0 216.0" fill="none" stroke="#8fb1b9" stroke-width="2.1" stroke-linecap="round" stroke-linejoin="round"/><polyline points="444.8 210.4 461.2 210.4" fill="none" stroke="#8fb1b9" stroke-width="2.1" stroke-linecap="round" stroke-linejoin="round"/><polyline points="477.3 197.4 474.5 202.1" fill="none" stroke="#8fb1b9" stroke-width="2.1" stroke-linecap="round" stroke-linejoin="round"/><polyline points="474.5 200.2 482.0 199.3" fill="none" stroke="#8fb1b9" stroke-width="2.1" stroke-linecap="round" stroke-linejoin="round"/><polyline points="478.2 199.3 477.9 206.7" fill="none" stroke="#8fb1b9" stroke-width="2.1" stroke-linecap="round" stroke-linejoin="round"/><polyline points="475.5 203.4 481.6 203.4" fill="none" stroke="#8fb1b9" stroke-width="2.1" stroke-linecap="round" stroke-linejoin="round"/><polyline points="489.4 197.4 485.7 201.5" fill="none" stroke="#8fb1b9" stroke-width="2.1" stroke-linecap="round" stroke-linejoin="round"/><polyline points="486.6 200.2 494.0 199.3" fill="none" stroke="#8fb1b9" stroke-width="2.1" stroke-linecap="round" stroke-linejoin="round"/><polyline points="490.3 199.6 490.9 206.7" fill="none" stroke="#8fb1b9" stroke-width="2.1" stroke-linecap="round" stroke-linejoin="round"/><polyline points="486.6 203.4 494.0 203.4" fill="none" stroke="#8fb1b9" stroke-width="2.1" stroke-linecap="round" stroke-linejoin="round"/><polyline points="477.3 208.6 492.2 208.2 492.2 217.8 477.9 218.2 477.3 208.6" fill="none" stroke="#8fb1b9" stroke-width="2.1" stroke-linecap="round" stroke-linejoin="round"/><polyline points="477.7 211.9 492.2 211.9" fill="none" stroke="#8fb1b9" stroke-width="2.1" stroke-linecap="round" stroke-linejoin="round"/><polyline points="477.7 215.1 492.2 215.1" fill="none" stroke="#8fb1b9" stroke-width="2.1" stroke-linecap="round" stroke-linejoin="round"/><polyline points="482.0 218.8 477.9 224.3" fill="none" stroke="#8fb1b9" stroke-width="2.1" stroke-linecap="round" stroke-linejoin="round"/><polyline points="487.2 219.3 493.1 224.3" fill="none" stroke="#8fb1b9" stroke-width="2.1" stroke-linecap="round" stroke-linejoin="round"/><polyline points="503.9 213.8 520.0 210.0 519.4 216.0 514.4 221.9" fill="none" stroke="#8fb1b9" stroke-width="2.1" stroke-linecap="round" stroke-linejoin="round"/><polyline points="512.6 205.2 506.5 221.9" fill="none" stroke="#8fb1b9" stroke-width="2.1" stroke-linecap="round" stroke-linejoin="round"/><polyline points="522.8 209.5 526.9 217.8" fill="none" stroke="#8fb1b9" stroke-width="2.1" stroke-linecap="round" stroke-linejoin="round"/><polyline points="526.9 201.5 528.3 205.2" fill="none" stroke="#8fb1b9" stroke-width="2.1" stroke-linecap="round" stroke-linejoin="round"/><polyline points="530.2 200.8 531.7 204.1" fill="none" stroke="#8fb1b9" stroke-width="2.1" stroke-linecap="round" stroke-linejoin="round"/><polyline points="537.3 210.8 559.9 207.8 556.6 214.1" fill="none" stroke="#8fb1b9" stroke-width="2.1" stroke-linecap="round" stroke-linejoin="round"/><polyline points="541.3 203.4 546.5 223.4" fill="none" stroke="#8fb1b9" stroke-width="2.1" stroke-linecap="round" stroke-linejoin="round"/><polyline points="571.0 208.6 565.8 222.7" fill="none" stroke="#8fb1b9" stroke-width="2.1" stroke-linecap="round" stroke-linejoin="round"/><polyline points="578.5 207.6 586.2 220.8" fill="none" stroke="#8fb1b9" stroke-width="2.1" stroke-linecap="round" stroke-linejoin="round"/><polyline points="584.9 202.2 586.8 206.0" fill="none" stroke="#8fb1b9" stroke-width="2.1" stroke-linecap="round" stroke-linejoin="round"/><polyline points="588.8 201.1 590.1 204.5" fill="none" stroke="#8fb1b9" stroke-width="2.1" stroke-linecap="round" stroke-linejoin="round"/><polyline points="612.8 203.0 595.2 217.5" fill="none" stroke="#8fb1b9" stroke-width="2.1" stroke-linecap="round" stroke-linejoin="round"/><polyline points="606.7 210.0 607.4 222.7" fill="none" stroke="#8fb1b9" stroke-width="2.1" stroke-linecap="round" stroke-linejoin="round"/><path d="M389.5 542.5 Q382 553 389.5 564" fill="none" stroke="#8fb1b9" stroke-width="2.3" stroke-linecap="round" stroke-linejoin="round"/><polyline points="399.5 545.0 414.5 545.0" fill="none" stroke="#8fb1b9" stroke-width="2.3" stroke-linecap="round" stroke-linejoin="round"/><polyline points="396.5 551.5 418.5 551.5" fill="none" stroke="#8fb1b9" stroke-width="2.3" stroke-linecap="round" stroke-linejoin="round"/><path d="M407.5 551.5 Q407.5 559 400.5 563" fill="none" stroke="#8fb1b9" stroke-width="2.3" stroke-linecap="round" stroke-linejoin="round"/><polyline points="432.5 544.0 427.5 552.0" fill="none" stroke="#8fb1b9" stroke-width="2.3" stroke-linecap="round" stroke-linejoin="round"/><path d="M431.0 547.5 H441.5 Q439.5 558 429.5 563" fill="none" stroke="#8fb1b9" stroke-width="2.3" stroke-linecap="round" stroke-linejoin="round"/><path d="M448 546 H462 Q457 557 446 563" fill="none" stroke="#8fb1b9" stroke-width="2.3" stroke-linecap="round" stroke-linejoin="round"/><polyline points="455.5 555.0 465.0 562.5" fill="none" stroke="#8fb1b9" stroke-width="2.3" stroke-linecap="round" stroke-linejoin="round"/><polyline points="489.5 544.0 475.5 547.5" fill="none" stroke="#8fb1b9" stroke-width="2.3" stroke-linecap="round" stroke-linejoin="round"/><polyline points="471.5 553.0 494.0 553.0" fill="none" stroke="#8fb1b9" stroke-width="2.3" stroke-linecap="round" stroke-linejoin="round"/><path d="M482.5 547 V555 Q482.5 560 476.5 563" fill="none" stroke="#8fb1b9" stroke-width="2.3" stroke-linecap="round" stroke-linejoin="round"/><path d="M501.5 553 L514.5 551 L511.5 556" fill="none" stroke="#8fb1b9" stroke-width="2.3" stroke-linecap="round" stroke-linejoin="round"/><polyline points="504.5 549.0 508.5 563.0" fill="none" stroke="#8fb1b9" stroke-width="2.3" stroke-linecap="round" stroke-linejoin="round"/><polyline points="523.0 543.5 524.5 545.5" fill="none" stroke="#8fb1b9" stroke-width="2.0" stroke-linecap="round" stroke-linejoin="round"/><path d="M520.5 549 H527.5 L521 557" fill="none" stroke="#8fb1b9" stroke-width="2.0" stroke-linecap="round" stroke-linejoin="round"/><polyline points="524.5 552.0 524.5 563.5" fill="none" stroke="#8fb1b9" stroke-width="2.0" stroke-linecap="round" stroke-linejoin="round"/><polyline points="525.5 555.0 528.0 557.0" fill="none" stroke="#8fb1b9" stroke-width="2.0" stroke-linecap="round" stroke-linejoin="round"/><polyline points="530.0 547.5 546.0 547.5" fill="none" stroke="#8fb1b9" stroke-width="2.0" stroke-linecap="round" stroke-linejoin="round"/><polyline points="541.5 543.5 543.5 545.5" fill="none" stroke="#8fb1b9" stroke-width="2.0" stroke-linecap="round" stroke-linejoin="round"/><path d="M531.5 563.5 V550.5 H545 V563.5" fill="none" stroke="#8fb1b9" stroke-width="2.0" stroke-linecap="round" stroke-linejoin="round"/><polyline points="531.5 555.0 545.0 555.0" fill="none" stroke="#8fb1b9" stroke-width="2.0" stroke-linecap="round" stroke-linejoin="round"/><polyline points="531.5 559.0 545.0 559.0" fill="none" stroke="#8fb1b9" stroke-width="2.0" stroke-linecap="round" stroke-linejoin="round"/><polyline points="538.2 545.0 538.2 563.5" fill="none" stroke="#8fb1b9" stroke-width="2.0" stroke-linecap="round" stroke-linejoin="round"/><path d="M550.5 563.5 V544 H558 V551 H550.5" fill="none" stroke="#8fb1b9" stroke-width="2.0" stroke-linecap="round" stroke-linejoin="round"/><polyline points="550.5 547.5 558.0 547.5" fill="none" stroke="#8fb1b9" stroke-width="2.0" stroke-linecap="round" stroke-linejoin="round"/><path d="M562.5 551 V544 H570.5 V562 Q570.5 563.5 568 563.5" fill="none" stroke="#8fb1b9" stroke-width="2.0" stroke-linecap="round" stroke-linejoin="round"/><polyline points="562.5 547.5 570.5 547.5" fill="none" stroke="#8fb1b9" stroke-width="2.0" stroke-linecap="round" stroke-linejoin="round"/><polyline points="562.5 551.0 570.5 551.0" fill="none" stroke="#8fb1b9" stroke-width="2.0" stroke-linecap="round" stroke-linejoin="round"/><path d="M556 562 V554 H565 V562 H556" fill="none" stroke="#8fb1b9" stroke-width="2.0" stroke-linecap="round" stroke-linejoin="round"/><polyline points="556.0 558.0 565.0 558.0" fill="none" stroke="#8fb1b9" stroke-width="2.0" stroke-linecap="round" stroke-linejoin="round"/><path d="M574.5 542.5 Q582 553 574.5 564" fill="none" stroke="#8fb1b9" stroke-width="2.3" stroke-linecap="round" stroke-linejoin="round"/></svg>
<div style="position:absolute;left:351.2px;top:505.08px;font-size:24.6px;line-height:1;color:#8fb1b9;white-space:pre;font-weight:normal;letter-spacing:2.15px;-webkit-text-stroke:0.15px #8fb1b9;">Texture Interpolation</div>
</body></html>
